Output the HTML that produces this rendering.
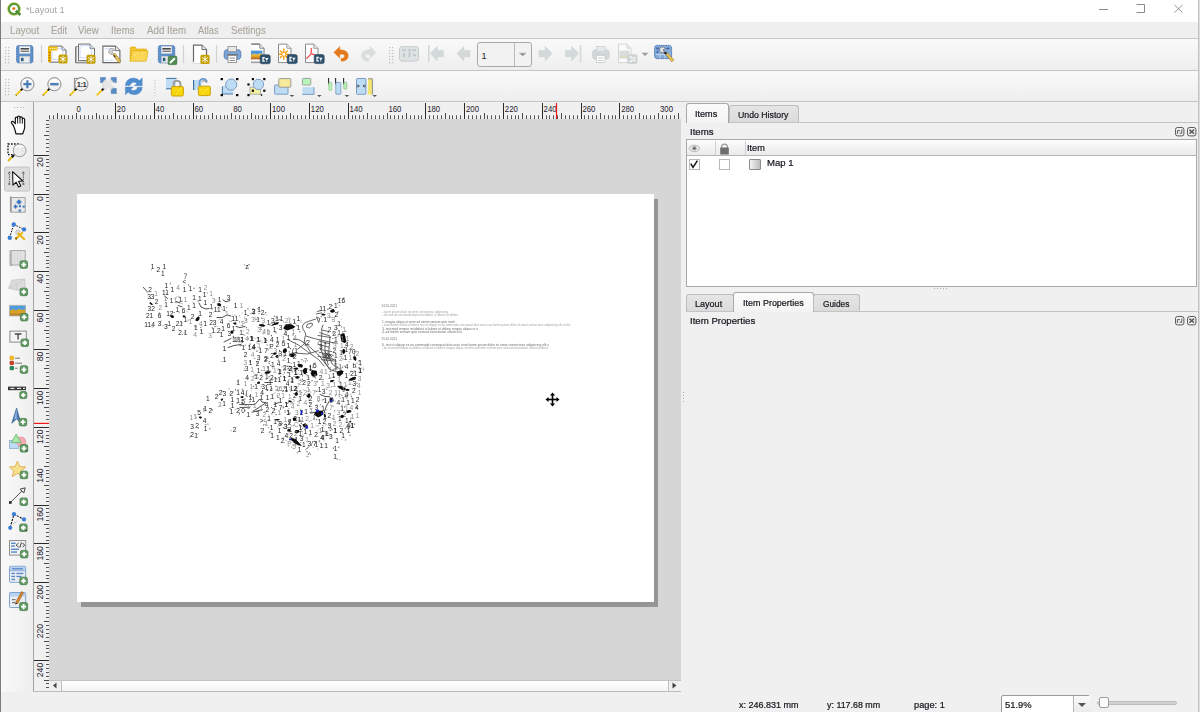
<!DOCTYPE html>
<html><head><meta charset="utf-8"><title>Layout 1</title>
<style>
*{box-sizing:border-box;margin:0;padding:0}
html,body{width:1200px;height:712px;overflow:hidden;background:#f0f0f0;font-family:"Liberation Sans",sans-serif;font-size:9px;color:#222}
.abs{position:absolute}
.t{position:absolute;white-space:nowrap;transform-origin:0 0;display:block;-webkit-text-stroke:0.22px currentColor}
#title{left:1px;top:0;width:1197px;height:22px;background:#fff}
#menu{left:1px;top:22px;width:1197px;height:16px;background:#efefef}
.tb{left:1px;width:1197px;background:linear-gradient(#f9f9f9,#f5f5f5 40%,#eeeeee);border-top:1px solid #c6c6c6}
#tb1{top:38px;height:32px}
#tb2{top:70px;height:32px;border-bottom:1px solid #c6c6c6}
#edgeL{left:0;top:0;width:1px;height:712px;background:#7c7c7c}
#edgeR{left:1198px;top:0;width:2px;height:712px;background:#dcdcdc;border-left:1px solid #c4c4c4}
#canvas{left:49px;top:119px;width:632px;height:561px;background:#d6d6d6;overflow:hidden}
#shadow{left:32px;top:80px;width:577px;height:408px;background:#959595}
#page{left:28px;top:75px;width:577px;height:408px;background:#fff}
#hruler{left:34px;top:102px;width:647px;height:17px;background:#f0f0f0}
#vruler{left:33px;top:102px;width:16px;height:590px;background:#f0f0f0;border-left:1px solid #a3a3a3}
.tab{position:absolute;border:1px solid #bdbdbd;border-bottom:none;border-radius:3px 3px 0 0}
.tab.off{background:linear-gradient(#e5e5e5,#dbdbdb)}
.tab.on{background:linear-gradient(#fbfbfb,#f3f3f3);border-color:#a9a9a9}
.hline{position:absolute;height:1px;background:#c3c3c3}
#tree{left:686px;top:139px;width:511px;height:148px;background:#fff;border:1px solid #a8a8a8}
#thead{left:0;top:0;width:509px;height:16px;background:linear-gradient(#fdfdfd,#f3f3f3 50%,#ebebeb);border-bottom:1px solid #b5b5b5}
.cb{position:absolute;width:11px;height:11px;border:1px solid #b8b8b8;background:#fff}
#ov{position:absolute;left:0;top:0}
</style></head><body>
<div id="title" class="abs"></div>
<span class="t" style="left:25.8px;top:5.5px;font-size:9px;line-height:9px;color:#a2a2a2;transform:scaleX(1.015);-webkit-text-stroke:0;">*Layout 1</span>
<div id="menu" class="abs"></div>
<span class="t" style="left:9.6px;top:25.1px;font-size:10.5px;line-height:10.5px;color:#a9a49c;transform:scaleX(0.923);-webkit-text-stroke:0.1px;">Layout</span>
<span class="t" style="left:50.7px;top:25.1px;font-size:10.5px;line-height:10.5px;color:#a9a49c;transform:scaleX(0.890);-webkit-text-stroke:0.1px;">Edit</span>
<span class="t" style="left:78.4px;top:25.1px;font-size:10.5px;line-height:10.5px;color:#a9a49c;transform:scaleX(0.913);-webkit-text-stroke:0.1px;">View</span>
<span class="t" style="left:110.5px;top:25.1px;font-size:10.5px;line-height:10.5px;color:#a9a49c;transform:scaleX(0.915);-webkit-text-stroke:0.1px;">Items</span>
<span class="t" style="left:146.7px;top:25.1px;font-size:10.5px;line-height:10.5px;color:#a9a49c;transform:scaleX(0.928);-webkit-text-stroke:0.1px;">Add Item</span>
<span class="t" style="left:198.3px;top:25.1px;font-size:10.5px;line-height:10.5px;color:#a9a49c;transform:scaleX(0.887);-webkit-text-stroke:0.1px;">Atlas</span>
<span class="t" style="left:231.0px;top:25.1px;font-size:10.5px;line-height:10.5px;color:#a9a49c;transform:scaleX(0.915);-webkit-text-stroke:0.1px;">Settings</span>
<div id="tb1" class="abs tb"></div><div id="tb2" class="abs tb"></div>
<div class="abs" style="left:1px;top:102px;width:32px;height:590px;background:linear-gradient(90deg,#f9f9f9,#f3f3f3 60%,#eeeeee)"></div>
<div id="hruler" class="abs"></div><div id="vruler" class="abs"></div>
<div id="canvas" class="abs"><div id="shadow" class="abs"></div><div id="page" class="abs"></div></div>
<div class="abs" style="left:49px;top:680px;width:632px;height:12px;background:#f0f0f0;border-top:1px solid #c8c8c8"></div><div class="abs" style="left:33px;top:691px;width:648px;height:1px;background:#bcbcbc"></div>
<div class="abs" style="left:61px;top:681px;width:608px;height:10px;background:linear-gradient(#ffffff,#f3f3f3);border-left:1px solid #c0c0c0;border-right:1px solid #c0c0c0"></div>
<div class="abs" style="left:49px;top:680px;width:632px;height:1px;background:#c4c4c4"></div>
<div class="hline" style="left:686px;top:122px;width:512px"></div>
<div class="tab on" style="left:686px;top:103px;width:43px;height:20px"></div>
<div class="tab off" style="left:729px;top:105px;width:70px;height:17px"></div>
<span class="t" style="left:695.3px;top:108.7px;font-size:9.7px;line-height:9.7px;color:#15151d;transform:scaleX(0.936);">Items</span>
<span class="t" style="left:737.5px;top:109.5px;font-size:9.7px;line-height:9.7px;color:#15151d;transform:scaleX(0.901);">Undo History</span>
<span class="t" style="left:689.5px;top:126.7px;font-size:9.7px;line-height:9.7px;color:#15151d;transform:scaleX(0.991);">Items</span>
<div id="tree" class="abs"><div id="thead" class="abs"><div class="abs" style="left:28px;top:1px;width:1px;height:14px;background:#d0d0d0"></div><div class="abs" style="left:58px;top:1px;width:1px;height:14px;background:#d0d0d0"></div></div><div class="cb" style="left:2px;top:19px"></div><div class="cb" style="left:32px;top:19px"></div><div class="abs" style="left:62px;top:19px;width:12px;height:11px;border:1px solid #8c8c8c;border-radius:1px;background:linear-gradient(90deg,#f4f4f4,#bdbdbd)"></div></div>
<span class="t" style="left:747.2px;top:142.9px;font-size:9.7px;line-height:9.7px;color:#15151d;transform:scaleX(0.944);">Item</span>
<span class="t" style="left:766.5px;top:157.7px;font-size:9.7px;line-height:9.7px;color:#15151d;transform:scaleX(0.983);">Map 1</span>
<div class="hline" style="left:686px;top:311px;width:512px"></div>
<div class="tab off" style="left:686px;top:294px;width:48px;height:17px"></div>
<div class="tab on" style="left:733px;top:292px;width:81px;height:20px"></div>
<div class="tab off" style="left:813px;top:294px;width:47px;height:17px"></div>
<span class="t" style="left:695.3px;top:298.6px;font-size:9.7px;line-height:9.7px;color:#15151d;transform:scaleX(0.934);">Layout</span>
<span class="t" style="left:742.5px;top:297.8px;font-size:9.7px;line-height:9.7px;color:#15151d;transform:scaleX(0.925);">Item Properties</span>
<span class="t" style="left:822.8px;top:298.6px;font-size:9.7px;line-height:9.7px;color:#15151d;transform:scaleX(0.859);">Guides</span>
<span class="t" style="left:689.7px;top:315.9px;font-size:9.7px;line-height:9.7px;color:#15151d;transform:scaleX(0.993);">Item Properties</span>
<div class="abs" style="left:934px;top:288px;width:14px;height:1px;background:repeating-linear-gradient(90deg,#aaa 0 1px,transparent 1px 3px)"></div>
<div class="abs" style="left:683px;top:392px;width:1px;height:12px;background:repeating-linear-gradient(#aaa 0 1px,transparent 1px 3px)"></div>
<span class="t" style="left:738.7px;top:699.9px;font-size:9.7px;line-height:9.7px;color:#15151d;transform:scaleX(0.929);">x: 246.831 mm</span>
<span class="t" style="left:826.8px;top:699.9px;font-size:9.7px;line-height:9.7px;color:#15151d;transform:scaleX(0.917);">y: 117.68 mm</span>
<span class="t" style="left:914.0px;top:699.9px;font-size:9.7px;line-height:9.7px;color:#15151d;transform:scaleX(0.952);">page: 1</span>
<div class="abs" style="left:1001px;top:695px;width:89px;height:20px;border:1px solid #9a9a9a;border-radius:2px;background:#fff"><div class="abs" style="left:71px;top:0;width:17px;height:18px;border-left:1px solid #b5b5b5;background:linear-gradient(#fafafa,#e9e9e9)"></div><div class="abs" style="left:76px;top:7px;width:0;height:0;border:4px solid transparent;border-top:4px solid #555;border-bottom:none"></div></div>
<span class="t" style="left:1004.8px;top:699.6px;font-size:9.7px;line-height:9.7px;color:#15151d;transform:scaleX(0.967);">51.9%</span>
<div class="abs" style="left:1097px;top:701px;width:80px;height:4px;background:#d2d2d2;border:1px solid #bdbdbd;border-radius:2px"></div>
<div class="abs" style="left:1099px;top:697px;width:10px;height:11px;background:#fbfbfb;border:1px solid #9c9c9c;border-radius:2px"></div>
<svg id="ov" width="1200" height="712" viewBox="0 0 1200 712" font-family="Liberation Sans, sans-serif">
<g fill="#bdbdbd"><rect x="5" y="47" width="1.2" height="1.2"/><rect x="8" y="47" width="1.2" height="1.2"/><rect x="5" y="50" width="1.2" height="1.2"/><rect x="8" y="50" width="1.2" height="1.2"/><rect x="5" y="53" width="1.2" height="1.2"/><rect x="8" y="53" width="1.2" height="1.2"/><rect x="5" y="56" width="1.2" height="1.2"/><rect x="8" y="56" width="1.2" height="1.2"/><rect x="5" y="59" width="1.2" height="1.2"/><rect x="8" y="59" width="1.2" height="1.2"/><rect x="5" y="62" width="1.2" height="1.2"/><rect x="8" y="62" width="1.2" height="1.2"/></g>
<g transform="translate(16,45)" ><rect x=".5" y=".5" width="16.5" height="17.5" rx="2" fill="#5d8fca" stroke="#3f6aa6" stroke-dasharray="1 .6" stroke-width=".8"/><rect x="3.6" y="1.4" width="10.4" height="7" fill="#f4f4f4" stroke="#d5d5d5" stroke-width=".5"/><rect x="4.6" y="3" width="8.4" height="1.6" fill="#4a4a4a"/><rect x="4.6" y="5.7" width="8.4" height="1.1" fill="#5a5a5a"/><rect x="3.8" y="11.3" width="10" height="6.4" fill="#ececec" stroke="#c8c8c8" stroke-width=".5"/><rect x="5" y="12.8" width="2.6" height="3.4" fill="#2e5f78"/></g>
<line x1="41.5" y1="45" x2="41.5" y2="63" stroke="#d2d2d2" stroke-width="1.2"/>
<g transform="translate(48,45.6)" ><g transform="translate(1,0)" ><path d="M.5 .5H13L17 4.5V16.5H.5Z" fill="#fff" stroke="#555" stroke-width="0.9"/><path d="M13 .5V4.5H17" fill="#e8e8e8" stroke="#555" stroke-width="0.7200000000000001"/></g><rect x="4" y="3" width="11" height="11" fill="none" stroke="#b9c8ff" stroke-width=".7"/><rect x="0" y="1" width="3.2" height="15.5" fill="#ecb800"/><rect x="0" y="1" width="9.5" height="3.8" rx=".6" fill="#ecb800"/><g fill="#fff6c8"><rect x="1.5" y="2.2" width="1.2" height="1.4"/><rect x="3.6" y="2.2" width="1.2" height="1.4"/><rect x="5.7" y="2.2" width="1.2" height="1.4"/><rect x="7.6" y="2.2" width="1" height="1.4"/></g><g fill="#a04a10"><rect x=".8" y="6.5" width="1.6" height=".9"/><rect x=".8" y="9.2" width="1.6" height=".9"/><rect x=".8" y="11.9" width="1.6" height=".9"/><rect x=".8" y="14.4" width="1.6" height=".9"/></g><g transform="translate(10.5,9)"><rect width="9" height="9" rx="1.6" fill="#c4a000"/><g stroke="#fff" stroke-width=".9" stroke-linecap="round"><line x1="4.5" y1="1.6" x2="4.5" y2="7.4"/><line x1="1.8" y1="2.8" x2="7.2" y2="6.2"/><line x1="1.8" y1="6.2" x2="7.2" y2="2.8"/></g></g></g>
<g transform="translate(75,43.6)" ><path d="M.6 3V19.2H13.5" fill="#fff" stroke="#6a6a6a" stroke-width="1"/><rect x="1.2" y="3" width="12" height="15.6" fill="#f2f2f2" stroke="#8a8a8a" stroke-width=".8"/><g transform="translate(3,0)" ><path d="M.5 .5H12.0L16.5 5.0V17H.5Z" fill="#fff" stroke="#606060" stroke-width="0.9"/><path d="M12.0 .5V5.0H16.5" fill="#e8e8e8" stroke="#606060" stroke-width="0.7200000000000001"/></g><rect x="5" y="2.2" width="11.5" height="12" fill="none" stroke="#b9c8ff" stroke-width=".7"/><g transform="translate(11.5,11.2)"><rect width="9" height="9" rx="1.6" fill="#c4a000"/><g stroke="#fff" stroke-width=".9" stroke-linecap="round"><line x1="4.5" y1="1.6" x2="4.5" y2="7.4"/><line x1="1.8" y1="2.8" x2="7.2" y2="6.2"/><line x1="1.8" y1="6.2" x2="7.2" y2="2.8"/></g></g></g>
<g transform="translate(102.4,45.6)" ><path d="M.5 .5H13.0L17.5 5.0V17H.5Z" fill="#fff" stroke="#666" stroke-width="1.1"/><path d="M13.0 .5V5.0H17.5" fill="#e8e8e8" stroke="#666" stroke-width="0.8800000000000001"/><line x1="2.5" y1="3" x2="11" y2="3" stroke="#b9c8ff" stroke-width=".8" stroke-dasharray="2 .6"/><line x1="2.5" y1="14.6" x2="11" y2="14.6" stroke="#b9c8ff" stroke-width=".8" stroke-dasharray="2 .6"/><path d="M7.2 3.6c2-1.6 4.6-.6 5 1.4l-2.2.2-.4 1.8 1.6 1.4c-1.8 1-4.6.2-5-2.2z" fill="#d9d9d9" stroke="#8a8a8a" stroke-width=".7"/><path d="M10.6 9.4L12.6 7.8L18.4 15.4L16.6 17.4Z" fill="#e8c45a" stroke="#9a7a1c" stroke-width=".7"/><path d="M11.4 9.8L13 11.6" stroke="#333" stroke-width="1.2"/></g>
<g transform="translate(129.6,46.4)" ><path d="M.6 14.6V1.6Q.6 .6 1.6 .6H5.6L6.8 2.6H16Q17 2.6 17 3.6V5" fill="#f3c62f" stroke="#d8a800" stroke-width=".9" stroke-dasharray="1.2 .5"/><path d="M.6 14.8L2.4 5.2Q2.6 4.4 3.4 4.4H17.6Q18.6 4.4 18.4 5.4L16.8 14Q16.6 14.8 15.8 14.8Z" fill="#fad654" stroke="#d8a800" stroke-width=".9" stroke-dasharray="1.2 .5"/><g fill="#fff8b0"><rect x="7.5" y="6.2" width="1" height="1"/><rect x="11.5" y="6.2" width="1" height="1"/><rect x="5.5" y="8" width="1" height="1"/><rect x="9" y="12" width="1" height="1"/><rect x="12.5" y="12" width="1" height="1"/></g></g>
<g transform="translate(157.8,45)" ><rect x=".5" y=".5" width="16.5" height="17.5" rx="2" fill="#5d8fca" stroke="#3f6aa6" stroke-dasharray="1 .6" stroke-width=".8"/><rect x="3.6" y="1.4" width="10.4" height="7" fill="#f4f4f4" stroke="#d5d5d5" stroke-width=".5"/><rect x="4.6" y="3" width="8.4" height="1.6" fill="#4a4a4a"/><rect x="4.6" y="5.7" width="8.4" height="1.1" fill="#5a5a5a"/><rect x="3.8" y="11.3" width="10" height="6.4" fill="#ececec" stroke="#c8c8c8" stroke-width=".5"/><rect x="5" y="12.8" width="2.6" height="3.4" fill="#2e5f78"/><g transform="translate(10.4,11.2)"><rect width="8.6" height="8.4" rx="1.2" fill="#4f8a52" stroke="#3a6e3e" stroke-width=".7"/><path d="M1.8 6.8L6.6 2" stroke="#fff" stroke-width="2"/></g></g>
<line x1="183.5" y1="45" x2="183.5" y2="63" stroke="#d2d2d2" stroke-width="1.2"/>
<g transform="translate(193,44.6)" ><path d="M.5 .5H9.0L13.5 5.0V18H.5Z" fill="#fff" stroke="#6a6a6a" stroke-width="1.2"/><path d="M9.0 .5V5.0H13.5" fill="#e8e8e8" stroke="#6a6a6a" stroke-width="0.96"/><rect x="0" y="17.2" width="8" height="1.6" fill="#f7f7f7"/><g transform="translate(7.4,10.2)"><rect width="9.2" height="9.2" rx="1.6" fill="#c4a000"/><g stroke="#fff" stroke-width=".9" stroke-linecap="round"><line x1="4.6" y1="1.6" x2="4.6" y2="7.6"/><line x1="1.8" y1="2.8" x2="7.3999999999999995" y2="6.3999999999999995"/><line x1="1.8" y1="6.3999999999999995" x2="7.3999999999999995" y2="2.8"/></g></g></g>
<line x1="216.5" y1="45" x2="216.5" y2="63" stroke="#d2d2d2" stroke-width="1.2"/>
<g transform="translate(223.6,45.6)" ><rect x=".6" y="4.2" width="16.6" height="9.4" rx="2.6" fill="#7ba6da" stroke="#3d5fa2" stroke-width=".9" stroke-dasharray="1.4 .4"/><rect x="4.4" y=".8" width="8.6" height="5" fill="#e9e9e9" stroke="#8e8e8e" stroke-width=".8"/><rect x="3.6" y="8.6" width="10.4" height="2.2" fill="#6a6a6a"/><rect x="4.4" y="10" width="8.6" height="7" fill="#fdfdfd" stroke="#8e8e8e" stroke-width=".9"/><rect x="6" y="12" width="5.4" height="1" fill="#8e8e8e"/><rect x="6" y="14.4" width="5.4" height="1" fill="#8e8e8e"/></g>
<g transform="translate(251,43.6)" ><path d="M.5 .5H8.8L13 4.7V19H.5Z" fill="#fff" stroke="#777" stroke-width="1"/><path d="M8.8 .5V4.7H13" fill="#e8e8e8" stroke="#777" stroke-width="0.8"/><rect x="0" y="18" width="9" height="1.6" fill="#f6f6f6"/><rect x="0" y="0" width="1.2" height="19" fill="#f6f6f6"/><path d="M0 .5H8.6M0 18.6H9" stroke="#777" stroke-width="1"/><rect x="0" y="7" width="11.4" height="8.6" fill="#4f97dd"/><rect x="0" y="11" width="11.4" height="4.6" fill="#d9a520"/><path d="M0 11.4L3 9.8L6 10.8L9 9.6L11.4 10.8V12H0Z" fill="#e8c050"/><rect x="0" y="13.8" width="11.4" height="1.8" fill="#c4562a" opacity=".7"/><g transform="translate(9.2,11.2)"><rect width="10" height="9" rx="1.8" fill="#2f536e" stroke="#1f3d55" stroke-width=".6"/><path d="M2.2 2.2H4.6V3.6H3.4V5.6H4.6V7H2.2Z" fill="#fff"/><path d="M5 3.2H8.4L6.9 5.4V7.2H6.3V5.4Z" fill="#fff"/></g></g>
<g transform="translate(278,43.6)" ><path d="M.5 .5H8.8L13 4.7V19H.5Z" fill="#fff" stroke="#8a8a8a" stroke-width="1"/><path d="M8.8 .5V4.7H13" fill="#e8e8e8" stroke="#8a8a8a" stroke-width="0.8"/><g stroke="#ff9a0a" stroke-width="1.4" stroke-linecap="round"><line x1="5.8" y1="5.4" x2="5.8" y2="15.6"/><line x1="1.2" y1="10.6" x2="10.4" y2="10.6"/><line x1="2.4" y1="7.4" x2="9.2" y2="13.8"/><line x1="2.4" y1="13.8" x2="9.2" y2="7.4"/></g><circle cx="5.8" cy="10.6" r="1.5" fill="#fff"/><g transform="translate(9.2,11)"><rect width="10" height="9" rx="1.8" fill="#2f536e" stroke="#1f3d55" stroke-width=".6"/><path d="M2.2 2.2H4.6V3.6H3.4V5.6H4.6V7H2.2Z" fill="#fff"/><path d="M5 3.2H8.4L6.9 5.4V7.2H6.3V5.4Z" fill="#fff"/></g></g>
<g transform="translate(305,43.6)" ><path d="M.5 .5H8.8L13 4.7V19H.5Z" fill="#fff" stroke="#8a8a8a" stroke-width="1"/><path d="M8.8 .5V4.7H13" fill="#e8e8e8" stroke="#8a8a8a" stroke-width="0.8"/><path d="M6.2 4.6V10.2L1.8 14.8M6.2 10.2L10.6 11.6" fill="none" stroke="#f03030" stroke-width="1.1" stroke-linecap="round"/><circle cx="6.2" cy="10.2" r=".9" fill="#fff" stroke="#f03030" stroke-width=".6"/><g transform="translate(9.2,11)"><rect width="10" height="9" rx="1.8" fill="#2f536e" stroke="#1f3d55" stroke-width=".6"/><path d="M2.2 2.2H4.6V3.6H3.4V5.6H4.6V7H2.2Z" fill="#fff"/><path d="M5 3.2H8.4L6.9 5.4V7.2H6.3V5.4Z" fill="#fff"/></g></g>
<g transform="translate(333.4,45.8)" ><path d="M.4 6.6L6.4 .6V4C11.8 3.6 15.6 6.6 14.8 11C14.2 14 10.8 16.2 7.6 15.2V12.6C10.4 13 11.4 11.4 11 9.8C10.4 8.2 8.4 8.4 6.4 8.8V12.4Z" fill="#e27a1c" stroke="#e27a1c" stroke-width=".5" stroke-dasharray="1 .45"/></g>
<g transform="translate(361.4,45.8)" ><g transform="translate(15,0) scale(-1,1)"><path d="M.4 6.6L6.4 .6V4C11.8 3.6 15.6 6.6 14.8 11C14.2 14 10.8 16.2 7.6 15.2V12.6C10.4 13 11.4 11.4 11 9.8C10.4 8.2 8.4 8.4 6.4 8.8V12.4Z" fill="#d9dddd" stroke="#d9dddd" stroke-width=".5"/></g></g>
<g fill="#bdbdbd"><rect x="389" y="47" width="1.2" height="1.2"/><rect x="392" y="47" width="1.2" height="1.2"/><rect x="389" y="50" width="1.2" height="1.2"/><rect x="392" y="50" width="1.2" height="1.2"/><rect x="389" y="53" width="1.2" height="1.2"/><rect x="392" y="53" width="1.2" height="1.2"/><rect x="389" y="56" width="1.2" height="1.2"/><rect x="392" y="56" width="1.2" height="1.2"/><rect x="389" y="59" width="1.2" height="1.2"/><rect x="392" y="59" width="1.2" height="1.2"/><rect x="389" y="62" width="1.2" height="1.2"/><rect x="392" y="62" width="1.2" height="1.2"/></g>
<g transform="translate(399,46.2)" ><rect x=".5" y=".5" width="19" height="14.4" rx="2.6" fill="#dfe3e3" stroke="#c6cccc" stroke-width="1"/><g fill="#c3caca"><rect x="3" y="3" width="4" height="2"/><rect x="9" y="3" width="3" height="2"/><rect x="13" y="3" width="4" height="2"/><rect x="4" y="7" width="2" height="4"/><rect x="9.5" y="6" width="2" height="5"/><rect x="14" y="8" width="3" height="2"/></g></g>
<g transform="translate(430,45.6)" ><path d="M.4 8L7.2 .8V4.8H13.4V11.2H7.2V15.2Z" fill="#d3d9d9" stroke="#c9d0d0" stroke-width=".5"/></g><rect x="428" y="45" width="1.6" height="17.4" fill="#d3d9d9"/>
<g transform="translate(456.6,45.6)" ><path d="M.4 8L7.2 .8V4.8H13.4V11.2H7.2V15.2Z" fill="#d3d9d9" stroke="#c9d0d0" stroke-width=".5"/></g>
<g transform="translate(477,42)" ><rect x=".5" y=".5" width="54" height="24" rx="2.6" fill="#f2f2f2" stroke="#a9a9a9" stroke-width="1"/><line x1="37.5" y1="1" x2="37.5" y2="24" stroke="#b9b9b9"/><path d="M42.6 11.4H48.8L45.7 14Z" fill="#8a8a8a"/><rect x="42.4" y="10.8" width="6.6" height=".9" fill="#a0a0a0"/></g>
<g transform="translate(552.4,45.6) scale(-1,1)"><path d="M.4 8L7.2 .8V4.8H13.4V11.2H7.2V15.2Z" fill="#d3d9d9" stroke="#c9d0d0" stroke-width=".5"/></g>
<g transform="translate(579,45.6) scale(-1,1)"><path d="M.4 8L7.2 .8V4.8H13.4V11.2H7.2V15.2Z" fill="#d3d9d9" stroke="#c9d0d0" stroke-width=".5"/></g><rect x="579.8" y="45" width="1.6" height="17.4" fill="#d3d9d9"/>
<g transform="translate(592,45.6)" ><rect x=".6" y="4.2" width="16.6" height="9.4" rx="2.6" fill="#d3d9d9" stroke="#c6cccc" stroke-width=".9" stroke-dasharray="1.4 .4"/><rect x="4.4" y=".8" width="8.6" height="5" fill="#e6e9e9" stroke="#cdd2d2" stroke-width=".8"/><rect x="3.6" y="8.6" width="10.4" height="2.2" fill="#c9cfcf"/><rect x="4.4" y="10" width="8.6" height="7" fill="#fdfdfd" stroke="#cdd2d2" stroke-width=".9"/><rect x="6" y="12" width="5.4" height="1" fill="#cdd2d2"/><rect x="6" y="14.4" width="5.4" height="1" fill="#cdd2d2"/></g>
<g transform="translate(618,43.6)" ><path d="M.5 .5H8.8L13 4.7V19H.5Z" fill="#fafafa" stroke="#d3d6d6" stroke-width="1"/><path d="M8.8 .5V4.7H13" fill="#e8e8e8" stroke="#d3d6d6" stroke-width="0.8"/><rect x="1.4" y="7" width="10" height="8" fill="#d9dcdc"/><rect x="3" y="12.4" width="6" height="1" fill="#e6d9b0"/><rect x="9.6" y="11.2" width="9.4" height="8.6" rx="1.6" fill="#d0d4d4" stroke="#c0c6c6" stroke-width=".6"/><path d="M11.4 13.2H13.4V14.4H17V13.2M11.4 17.8H13.4V16.6H17V17.8" fill="none" stroke="#fff" stroke-width="1"/></g>
<path d="M641.6 52.8H648.4L645 56Z" fill="#9a9a9a"/>
<g transform="translate(654,44.8)" ><rect x=".6" y=".6" width="17" height="13.2" rx="2.4" fill="#86abd8" stroke="#3f6cae" stroke-width=".9" stroke-dasharray="1.4 .4"/><g fill="#3d63a0"><rect x="2.4" y="2.6" width="2.4" height="2"/><rect x="2.6" y="6" width="1.6" height="2.4"/><rect x="12.4" y="2.8" width="3" height="1.6"/></g><g stroke="#dbe7f5" stroke-width=".7"><line x1="1.6" y1="9.6" x2="16.6" y2="9.6"/><line x1="6" y1="9.6" x2="6" y2="13.4"/><line x1="11" y1="9.6" x2="11" y2="13.4"/></g><path d="M6 3.4c1.6-2 4.6-1.2 5.4.6l-2 .6-.2 1.6 1.8 1c-1.4 1.2-4.4 1-5.2-1z" fill="#e9e9e9" stroke="#555" stroke-width=".6"/><path d="M9.8 8.2L11.6 6.6L13.2 8.4L11.6 10Z" fill="#222"/><path d="M12 9.8L13.6 8.4L19.8 15L17.8 17Z" fill="#eac65a" stroke="#9a7a1c" stroke-width=".7"/></g>
<text x="481.6" y="59.2" font-size="9" fill="#222">1</text>
<g fill="#bdbdbd"><rect x="5" y="79" width="1.2" height="1.2"/><rect x="8" y="79" width="1.2" height="1.2"/><rect x="5" y="82" width="1.2" height="1.2"/><rect x="8" y="82" width="1.2" height="1.2"/><rect x="5" y="85" width="1.2" height="1.2"/><rect x="8" y="85" width="1.2" height="1.2"/><rect x="5" y="88" width="1.2" height="1.2"/><rect x="8" y="88" width="1.2" height="1.2"/><rect x="5" y="91" width="1.2" height="1.2"/><rect x="8" y="91" width="1.2" height="1.2"/><rect x="5" y="94" width="1.2" height="1.2"/><rect x="8" y="94" width="1.2" height="1.2"/></g>
<g transform="translate(15,77)" ><path d="M.8 18.4L6.8 12.4" stroke="#f2c40e" stroke-width="1.8" stroke-linecap="butt"/><path d="M.4 17.6L1.8 19" stroke="#333" stroke-width=".6"/><path d="M5.8 13.4L7.6 11.6" stroke="#111" stroke-width="2"/><circle cx="12.4" cy="7.2" r="6.6" fill="#f0f0f0" stroke="#8c8c8c" stroke-width="1"/><path d="M7 5.4A6 6 0 0 1 17.8 5.4Q12.4 3.4 7 5.4Z" fill="#fff" opacity=".9"/><path d="M8.4 7.2H16.4M12.4 3.2V11.2" stroke="#4c7fb8" stroke-width="2.2"/></g>
<g transform="translate(42,77)" ><path d="M.8 18.4L6.8 12.4" stroke="#f2c40e" stroke-width="1.8" stroke-linecap="butt"/><path d="M.4 17.6L1.8 19" stroke="#333" stroke-width=".6"/><path d="M5.8 13.4L7.6 11.6" stroke="#111" stroke-width="2"/><circle cx="12.4" cy="7.2" r="6.6" fill="#f0f0f0" stroke="#8c8c8c" stroke-width="1"/><path d="M7 5.4A6 6 0 0 1 17.8 5.4Q12.4 3.4 7 5.4Z" fill="#fff" opacity=".9"/><path d="M8.2 7.2H16.6" stroke="#4c7fb8" stroke-width="2.4"/></g>
<g transform="translate(69,77)" ><rect x="5.4" y="1.4" width="9" height="11" fill="#f4f4f4" stroke="#8a8a8a" stroke-width="1"/><path d="M.8 18.4L6.8 12.4" stroke="#f2c40e" stroke-width="1.8" stroke-linecap="butt"/><path d="M.4 17.6L1.8 19" stroke="#333" stroke-width=".6"/><path d="M5.8 13.4L7.6 11.6" stroke="#111" stroke-width="2"/><circle cx="12.4" cy="7.2" r="6.6" fill="#f0f0f0" stroke="#8c8c8c" stroke-width="1"/><path d="M7 5.4A6 6 0 0 1 17.8 5.4Q12.4 3.4 7 5.4Z" fill="#fff" opacity=".9"/><text x="12.4" y="10.2" font-size="7.6" font-weight="bold" text-anchor="middle" fill="#333" letter-spacing="-.5">1:1</text></g>
<g transform="translate(96,77)" ><g fill="#5a8cc6" stroke="#41689c" stroke-width=".5" stroke-dasharray="1 .4"><rect x="4.4" y=".4" width="5.2" height="5.2"/><rect x="15.2" y=".4" width="5.2" height="5.2"/><rect x="15.2" y="11.4" width="5.2" height="5.2"/></g><path d="M.8 18.4L6.8 12.4" stroke="#f2c40e" stroke-width="1.8"/><path d="M5.8 13.4L7.6 11.6" stroke="#111" stroke-width="2"/><circle cx="12.2" cy="7.6" r="5.6" fill="#e6e6e6" stroke="#cfcfcf" stroke-width=".8"/><path d="M9.6 1.2L12.2 4.6 14.8 1.2ZM18.6 5L15.2 7.6 18.6 10.2ZM14.8 14L12.2 10.6 9.6 14Z" fill="#f4f4f4"/></g>
<g transform="translate(124.8,77.2)" ><g fill="#4f8dd0" stroke="#3f78b8" stroke-width=".5" stroke-dasharray="1 .5"><path d="M.6 8.4C.8 3.4 5 .4 9.6 1C11.8 1.2 13.4 2.2 14.6 3.4L17.4 .8V8.6H9.6L12 6.2C10 4.4 6.4 4.6 5.2 8.4Z"/><path d="M17.4 10C17.2 15 13 18 8.4 17.4C6.2 17.2 4.6 16.2 3.4 15L.6 17.6V9.8H8.4L6 12.2C8 14 11.6 13.8 12.8 10Z"/></g></g>
<g fill="#c8c8c8"><rect x="154.2" y="80" width="1.2" height="1.2"/><rect x="154.2" y="83" width="1.2" height="1.2"/><rect x="154.2" y="86" width="1.2" height="1.2"/><rect x="154.2" y="89" width="1.2" height="1.2"/><rect x="154.2" y="92" width="1.2" height="1.2"/><rect x="154.2" y="95" width="1.2" height="1.2"/></g>
<g transform="translate(166,77.4)" ><rect x="0" y="1" width="10" height="10.4" fill="#bfdcf5"/><path d="M0 1H10.6M0 11.4H6" stroke="#3f6f9f" stroke-width="1"/><path d="M7.6 10V6.4C7.6 2.4 14.4 2.4 14.4 6.4V10" fill="none" stroke="#9d9d9d" stroke-width="2"/><rect x="5.4" y="9.2" width="12" height="9.4" rx="1.4" fill="#f6d50a" stroke="#c99b00" stroke-width=".9"/><g fill="#fff27a"><rect x="8" y="12" width="1" height="1"/><rect x="12" y="13" width="1" height="1"/><rect x="10" y="15.6" width="1" height="1"/><rect x="14" y="11.2" width="1" height="1"/></g></g>
<g transform="translate(193,77)" ><rect x=".6" y="3" width="8" height="10" fill="#bfdcf5"/><path d="M.6 3V13" stroke="#3f6f9f" stroke-width="1.2"/><path d="M6.6 9.8V5C6.6 .8 13.6 .8 13.8 5.4" fill="none" stroke="#6b9bd0" stroke-width="1.8"/><path d="M9 4.6L11.4 3.4 13.6 5.6" fill="none" stroke="#9d9d9d" stroke-width="1.2"/><rect x="5.4" y="9.2" width="12" height="9.4" rx="1.4" fill="#f6d50a" stroke="#c99b00" stroke-width=".9"/><g fill="#fff27a"><rect x="8" y="12" width="1" height="1"/><rect x="12" y="13" width="1" height="1"/><rect x="10" y="15.6" width="1" height="1"/><rect x="14" y="11.2" width="1" height="1"/></g></g>
<g transform="translate(220.6,78.6)" ><path d="M1.8 15.4V8.4H7" fill="#bfdcf5" stroke="#6f93bb" stroke-width=".9"/><rect x="1.8" y="8" width="11" height="7.4" fill="#bfdcf5"/><path d="M1.8 8V15.4H12.4" fill="none" stroke="#4d7aa8" stroke-width="1"/><polygon points="16.0,8.2 12.8,11.4 8.4,11.4 5.2,8.2 5.2,3.8 8.4,0.6 12.8,0.6 16.0,3.8" fill="#bfdcf5" stroke="#6f93bb" stroke-width=".9"/><g fill="#0a0a0a"><rect x="0" y="-.6" width="2.4" height="2.2"/><rect x="15.4" y="-.6" width="2.4" height="2.2"/><rect x="0" y="15.4" width="2.4" height="2.2"/><rect x="15.4" y="15.4" width="2.4" height="2.2"/></g></g>
<g transform="translate(247.4,78.6)" ><rect x="2.6" y="8.6" width="10.6" height="7" fill="#f4ef9c" stroke="#a8a8a8" stroke-width=".9"/><polygon points="16.0,7.9 13.1,10.8 8.9,10.8 6.0,7.9 6.0,3.7 8.9,0.8 13.1,0.8 16.0,3.7" fill="#bfdcf5" stroke="#6f93bb" stroke-width=".9"/><g fill="#0a0a0a"><rect x="4.4" y="-.6" width="2.2" height="2.2"/><rect x="15.8" y="-.6" width="2.2" height="2.2"/><rect x="0" y="4.8" width="2.2" height="2.2"/><rect x="4.4" y="11" width="2.2" height="2.2"/><rect x="15.8" y="11" width="2.2" height="2.2"/><rect x="0" y="15.4" width="2.2" height="2.2"/><rect x="13.4" y="15.6" width="1.4" height="1.6"/></g></g>
<g transform="translate(274,78)" ><rect x=".6" y="7" width="13.4" height="9.2" rx=".8" fill="#bfdcf5" stroke="#6f93bb" stroke-width=".9"/><rect x="4.8" y=".6" width="12" height="8.6" rx=".8" fill="#f5e896" stroke="#9a9a9a" stroke-width="1"/><g fill="#fff8c8"><rect x="8" y="3" width="1" height="1"/><rect x="12" y="5" width="1" height="1"/><rect x="10" y="6.6" width="1" height="1"/></g><path d="M15.6 17H20.2L17.9 19Z" fill="#555"/></g>
<g transform="translate(302,78)" ><rect x=".4" y=".4" width="8.4" height="6.6" rx=".8" fill="#b8f3b8" stroke="#9a9a9a" stroke-width=".9"/><rect x=".4" y="9.2" width="11.6" height="7.2" fill="#bfdcf5"/><path d="M.4 16.4H12V9.2" fill="none" stroke="#6f93bb" stroke-width=".9"/><path d="M15 17H19.6L17.3 19Z" fill="#555"/></g>
<g transform="translate(328,78)" ><g stroke="#2a2a2a" stroke-width="1.1"><line x1=".6" y1="0" x2=".6" y2="6.4"/><line x1="7.6" y1="0" x2="7.6" y2="6.4"/><line x1="15.6" y1="0" x2="15.6" y2="6.4"/></g><rect x=".8" y="4.4" width="3" height="8" rx=".6" fill="#b8f3b8" stroke="#8fc98f" stroke-width=".7"/><rect x="7.8" y="4.4" width="5" height="11.8" rx=".6" fill="#bfdcf5" stroke="#6f93bb" stroke-width=".8"/><rect x="15.8" y="4.4" width="3" height="6.6" rx=".6" fill="#b8f3b8" stroke="#7fb07f" stroke-width=".7"/><path d="M16.6 17H21.200000000000003L18.900000000000002 19Z" fill="#555"/></g>
<g transform="translate(356,78)" ><rect x=".5" y=".5" width="9.4" height="15.8" rx=".8" fill="#bfdcf5" stroke="#6f93bb" stroke-width=".9"/><rect x="12" y=".8" width="4.2" height="15.8" fill="#f3e574"/><path d="M12 .8H16.4V16.6" fill="none" stroke="#8c8c8c" stroke-width="1"/><path d="M.4 8H3.2M1.8 6.6L3.2 8 1.8 9.4M10 8H7.2M8.6 6.6L7.2 8 8.6 9.4" fill="none" stroke="#333" stroke-width=".8"/><path d="M16.4 17H21.0L18.7 19Z" fill="#555"/></g>
<g transform="translate(4,166.6)" ><rect x=".5" y=".5" width="25" height="24" rx="1.6" fill="#dddddd" stroke="#c4c4c4" stroke-width="1"/><path d="M5.4 5.2V18.6M19.4 5.2V18.6M4 6.4H6.8M18 6.4H20.8M4 17.4H6.8M18 17.4H20.8" stroke="#444" stroke-width=".9" stroke-dasharray="1.4 .9"/><path d="M8.6 5L9 18.6L12.2 15.6L14.6 20.4L16.8 19.4L14.6 14.8L18.8 14.4Z" fill="#fff" stroke="#111" stroke-width="1.1" stroke-linejoin="round"/></g>
<g transform="translate(9.6,115.6) scale(1.06,1.04)"><path d="M3.6 9.6L2 7.4C1 6 2.6 4.8 3.8 6L5.4 7.8V2.6C5.4 1 7.6 1 7.6 2.6V1.6C7.6 0 9.8 0 9.8 1.6V2.4C9.8 .8 12 .8 12 2.4V3.6C12 2.2 14.2 2.2 14.2 3.8V11C14.2 14 13 15 12.4 17.6H6C5.6 15 4.8 12.6 3.6 9.6Z" fill="#fff" stroke="#111" stroke-width="1.1" stroke-linejoin="round"/><path d="M7.6 2.6V7.6M9.8 2.4V7.6M12 3.6V7.8" stroke="#111" stroke-width=".9"/></g>
<g transform="translate(7,142.6)" ><rect x="1" y="1.4" width="12" height="10.6" fill="none" stroke="#111" stroke-width="1.3" stroke-dasharray="1.6 1.4"/><path d="M1 18.4L5.4 14" stroke="#e8b40e" stroke-width="1.8"/><path d="M4.8 14.6L7 12.4" stroke="#111" stroke-width="2"/><circle cx="12.6" cy="7.8" r="6.4" fill="#ececec" stroke="#9a9a9a" stroke-width="1"/><path d="M7.4 5.6A5.8 5.8 0 0 1 17.8 5.6Q12.6 3.6 7.4 5.6Z" fill="#fff" opacity=".85"/><g fill="#c8c8c8"><rect x="15" y="5" width="1" height="1"/><rect x="15" y="8" width="1" height="1"/><rect x="15" y="11" width="1" height="1"/></g></g>
<g transform="translate(9,196.6)" ><path d="M2 0V15.6" stroke="#9a9a9a" stroke-width="2.2"/><rect x="2.2" y="1" width="14" height="14.6" fill="#e9e9e9" stroke="#9a9a9a" stroke-width=".9"/><g fill="#3f77bd"><path d="M10 2.6L13.4 5.8H11.4V7.6H8.6V5.8H6.6Z"/><path d="M4.4 10L7 7.4V9H8.6V11H7V12.6Z"/><rect x="10" y="8.6" width="2" height="2"/><rect x="13.6" y="9" width="2.2" height="2"/><rect x="9.6" y="13" width="2.4" height="2"/></g></g>
<g transform="translate(7.4,221.6)" ><path d="M2.2 16L6.4 2.8L16.4 7.8" fill="none" stroke="#111" stroke-width="1" stroke-dasharray="1.6 1.2"/><g fill="#3a7bd5"><circle cx="2.4" cy="16.2" r="2.2"/><circle cx="6.4" cy="2.8" r="2.2"/><circle cx="16.6" cy="7.8" r="2.2"/></g><path d="M8.6 9.4c1.2-1.6 3.6-1 4.2.4l-1.6.6v1.4l1.4.8c-1.2 1-3.4.8-4-.8z" fill="#e6e6e6" stroke="#999" stroke-width=".6"/><path d="M8.2 17.4L15.4 10.6M10.6 11.4L17.4 18.2" stroke="#eab30c" stroke-width="2"/><path d="M8 17.6L9.4 16.2" stroke="#8a6a00" stroke-width="2"/></g>
<g transform="translate(8.6,249.4)" ><path d="M1.4 .6V15.4C1.4 16.6 3.8 16.6 3.8 15.4" fill="#d8d8d8" stroke="#9a9a9a" stroke-width=".9"/><rect x="2.6" y="1.2" width="14" height="14.4" fill="#e2e2e2" stroke="#a0a0a0" stroke-width=".9"/><g stroke="#d0d0d0" stroke-width=".8"><line x1="6" y1="2" x2="6" y2="15"/><line x1="9" y1="2" x2="9" y2="15"/><line x1="12" y1="2" x2="12" y2="15"/></g><g transform="translate(11.4,11.4)"><rect width="7.5" height="7.5" rx="1.6" fill="#649a66" stroke="#467f4a" stroke-width=".8"/><path d="M2.85 1.4H4.65V2.85H6.1V4.65H4.65V6.1H2.85V4.65H1.4V2.85H2.85Z" fill="#fff"/></g></g>
<g transform="translate(8,277.6)" ><path d="M.6 10.6L4 2.6L16.6 1.4L17.4 10.8L9 12.6Z" fill="#dcdcdc" stroke="#c4c4c4" stroke-width=".8"/><path d="M4 2.6L9 7L16.6 1.4M9 7V12.6M9 7L.6 10.6" fill="none" stroke="#c9c9c9" stroke-width=".7"/><g transform="translate(12,10.6)"><rect width="7.5" height="7.5" rx="1.6" fill="#649a66" stroke="#467f4a" stroke-width=".8"/><path d="M2.85 1.4H4.65V2.85H6.1V4.65H4.65V6.1H2.85V4.65H1.4V2.85H2.85Z" fill="#fff"/></g></g>
<g transform="translate(9,304.8)" ><rect x=".5" y=".5" width="16" height="10.6" fill="#4f9be0" stroke="#b0b0b0" stroke-width=".8"/><path d="M.9 6L4 4.2L7 5.6L10 4L13 5.2L16.1 4.4V10.7H.9Z" fill="#d8a428"/><path d="M.9 8.4H16.1V10.7H.9Z" fill="#b8702a" opacity=".6"/><g transform="translate(11.4,8.6)"><rect width="7.5" height="7.5" rx="1.6" fill="#649a66" stroke="#467f4a" stroke-width=".8"/><path d="M2.85 1.4H4.65V2.85H6.1V4.65H4.65V6.1H2.85V4.65H1.4V2.85H2.85Z" fill="#fff"/></g></g>
<g transform="translate(9.4,330.6)" ><rect x=".5" y=".5" width="16.4" height="11" fill="#f4f4f4" stroke="#8a8a8a" stroke-width="1"/><path d="M5.4 3.4H12M8.7 3.4V9" stroke="#444" stroke-width="1.3"/><g transform="translate(11.6,8.4)"><rect width="7.5" height="7.5" rx="1.6" fill="#649a66" stroke="#467f4a" stroke-width=".8"/><path d="M2.85 1.4H4.65V2.85H6.1V4.65H4.65V6.1H2.85V4.65H1.4V2.85H2.85Z" fill="#fff"/></g></g>
<g transform="translate(9,355.6)" ><rect x="1" y=".6" width="3.6" height="3.4" rx=".8" fill="#ffc21c" stroke="#e09a00" stroke-width=".7"/><rect x="1" y="5.6" width="3.6" height="3.4" rx=".4" fill="#d63a1a" stroke="#a82a10" stroke-width=".7"/><rect x="1" y="10.8" width="3.6" height="3.4" rx=".4" fill="#1f8a5a" stroke="#146a44" stroke-width=".7"/><g fill="#9a9a9a"><rect x="6" y="2" width="5" height="1.4"/><rect x="6" y="7" width="7" height="1.4"/><rect x="6" y="12" width="2.6" height="1.4"/></g><g transform="translate(11.2,10.2)"><rect width="7.5" height="7.5" rx="1.6" fill="#649a66" stroke="#467f4a" stroke-width=".8"/><path d="M2.85 1.4H4.65V2.85H6.1V4.65H4.65V6.1H2.85V4.65H1.4V2.85H2.85Z" fill="#fff"/></g></g>
<g transform="translate(8,386.2)" ><rect x="0" y=".4" width="18" height="3.6" fill="#3a3a3a"/><g fill="#e8e8e8"><rect x="2.4" y="1.6" width="4" height="1.2"/><rect x="9" y="1.6" width="4" height="1.2"/><rect x="15" y="1.6" width="2" height="1.2"/></g><g transform="translate(11.8,5.4)"><rect width="7" height="7" rx="1.6" fill="#649a66" stroke="#467f4a" stroke-width=".8"/><path d="M2.6 1.4H4.4V2.6H5.6V4.4H4.4V5.6H2.6V4.4H1.4V2.6H2.6Z" fill="#fff"/></g></g>
<g transform="translate(11,407.6)" ><path d="M5.6 .4L.8 15.6L5.6 11.2L9.8 15.6Z" fill="#4a7ab8" stroke="#35598a" stroke-width=".7"/><path d="M5.6 .4L3.4 11.4 5.6 11.2Z" fill="#9cbbe0"/><g transform="translate(8.2,10.8)"><rect width="7.5" height="7.5" rx="1.6" fill="#649a66" stroke="#467f4a" stroke-width=".8"/><path d="M2.85 1.4H4.65V2.85H6.1V4.65H4.65V6.1H2.85V4.65H1.4V2.85H2.85Z" fill="#fff"/></g></g>
<g transform="translate(9,433.6)" ><rect x=".6" y="7" width="9" height="7.8" fill="#bfdcf5" stroke="#7fa6cc" stroke-width=".7"/><circle cx="12.2" cy="8" r="4.6" fill="#f5a9b0" stroke="#d98a92" stroke-width=".6"/><path d="M7.2 .6L12.2 9H2.2Z" fill="#a8e8a8" stroke="#6ab06a" stroke-width=".8"/><g transform="translate(11.2,11)"><rect width="7.5" height="7.5" rx="1.6" fill="#649a66" stroke="#467f4a" stroke-width=".8"/><path d="M2.85 1.4H4.65V2.85H6.1V4.65H4.65V6.1H2.85V4.65H1.4V2.85H2.85Z" fill="#fff"/></g><path d="M16.4 17H19L17.7 18.2Z" fill="#333"/></g>
<g transform="translate(9,460.6)" ><path d="M8.4 .6L10.8 6L16.8 6.4L12.2 10.2L13.8 16L8.4 12.8L3.2 16L4.8 10.2L.4 6.4L6.2 6Z" fill="#f5e08c" stroke="#e2b05a" stroke-width="1" stroke-linejoin="round"/><g transform="translate(11.2,10.6)"><rect width="7.5" height="7.5" rx="1.6" fill="#649a66" stroke="#467f4a" stroke-width=".8"/><path d="M2.85 1.4H4.65V2.85H6.1V4.65H4.65V6.1H2.85V4.65H1.4V2.85H2.85Z" fill="#fff"/></g></g>
<g transform="translate(8.4,487)" ><path d="M2 15.4L14.6 3" stroke="#555" stroke-width="1"/><path d="M16.8 .8L15.4 6L11.6 2.2Z" fill="#eee" stroke="#333" stroke-width=".9"/><rect x=".6" y="14.2" width="2.6" height="2.6" fill="#222"/><g transform="translate(11.6,11)"><rect width="7.5" height="7.5" rx="1.6" fill="#649a66" stroke="#467f4a" stroke-width=".8"/><path d="M2.85 1.4H4.65V2.85H6.1V4.65H4.65V6.1H2.85V4.65H1.4V2.85H2.85Z" fill="#fff"/></g></g>
<g transform="translate(7.6,511.6)" ><path d="M2.6 16L6.4 2.6L16.4 7.8" fill="none" stroke="#111" stroke-width="1.1" stroke-dasharray="2.2 1.2"/><path d="M6 12L10 9.6" stroke="#888" stroke-width=".8" stroke-dasharray="1 1"/><g fill="#3a7bd5"><circle cx="2.6" cy="16.2" r="2.1"/><circle cx="6.4" cy="2.6" r="2.1"/><circle cx="16.4" cy="7.8" r="2.1"/></g><g transform="translate(12,12.4)"><rect width="7.5" height="7.5" rx="1.6" fill="#649a66" stroke="#467f4a" stroke-width=".8"/><path d="M2.85 1.4H4.65V2.85H6.1V4.65H4.65V6.1H2.85V4.65H1.4V2.85H2.85Z" fill="#fff"/></g><path d="M17.6 18.4H20L18.8 19.6Z" fill="#333"/></g>
<g transform="translate(9,540)" ><rect x=".5" y=".5" width="16.2" height="14.6" fill="#f2f2f2" stroke="#8f8f8f" stroke-width="1"/><g fill="#4c7fc0"><rect x="2" y="2.6" width="4.6" height="1.3"/><rect x="2" y="5.4" width="4" height="1.3"/><rect x="2" y="8.6" width="8" height="1.3"/><rect x="2" y="11.4" width="6" height="1.3"/></g><path d="M9.6 3L7.2 5.2L9.6 7.2M10.8 7.6L12.4 2.4M13.6 3L15.6 5.2L13.6 7.2" fill="none" stroke="#222" stroke-width=".9"/><g transform="translate(11.4,10.4)"><rect width="7.5" height="7.5" rx="1.6" fill="#649a66" stroke="#467f4a" stroke-width=".8"/><path d="M2.85 1.4H4.65V2.85H6.1V4.65H4.65V6.1H2.85V4.65H1.4V2.85H2.85Z" fill="#fff"/></g></g>
<g transform="translate(9,565.8)" ><rect x=".5" y=".5" width="16.2" height="16" rx=".8" fill="#e9edf3" stroke="#7fa3d0" stroke-width="1"/><rect x="1" y="1" width="15.2" height="4" fill="#b9d2ee"/><line x1="3" y1="3" x2="14" y2="3" stroke="#5585c4" stroke-width="1.2"/><line x1=".5" y1="5" x2="16.7" y2="5" stroke="#7fa3d0" stroke-width=".8"/><g fill="#5585c4"><rect x="2.4" y="7" width="3.6" height="1.3"/><rect x="7.4" y="7" width="7" height="1.3"/><rect x="2.4" y="10" width="3.6" height="1.3"/><rect x="7.4" y="10" width="5" height="1.3"/><rect x="2.4" y="13" width="3.6" height="1.3"/></g><g transform="translate(10.8,11.4)"><rect width="7.5" height="7.5" rx="1.6" fill="#649a66" stroke="#467f4a" stroke-width=".8"/><path d="M2.85 1.4H4.65V2.85H6.1V4.65H4.65V6.1H2.85V4.65H1.4V2.85H2.85Z" fill="#fff"/></g></g>
<g transform="translate(9,591)" ><rect x=".5" y="1.5" width="16.2" height="15" rx=".8" fill="#e9edf3" stroke="#7fa3d0" stroke-width="1"/><rect x="1" y="2" width="15.2" height="3.6" fill="#b9d2ee"/><g fill="#7a7a7a"><rect x="3" y="8" width="3.6" height="1.2"/><rect x="3" y="11" width="3" height="1.2"/></g><path d="M6.6 11.4L12.6 .6L14.4 1.8L8.8 12.4Z" fill="#d88a30" stroke="#9a5a14" stroke-width=".6"/><path d="M6.6 11.4L6 13.4L8.8 12.4Z" fill="#333"/><g transform="translate(10.6,11.6)"><rect width="8" height="8" rx="1.6" fill="#649a66" stroke="#467f4a" stroke-width=".8"/><path d="M3.1 1.4H4.9V3.1H6.6V4.9H4.9V6.6H3.1V4.9H1.4V3.1H3.1Z" fill="#fff"/></g></g>
<g transform="translate(1175,127)" fill="none" stroke="#5a5a5a" stroke-width="1"><rect x=".5" y=".5" width="8.4" height="8.4" rx="2"/><path d="M2.4 7V3.6H5M4.6 6.2H6.8V2.4"/></g><g transform="translate(1187,127)" fill="none" stroke="#5a5a5a" stroke-width="1"><rect x=".5" y=".5" width="8.4" height="8.4" rx="2"/><path d="M2.4 2.6L7 6.8M7 2.6L2.4 6.8" stroke-width="1.5"/></g>
<g transform="translate(1175,316)" fill="none" stroke="#5a5a5a" stroke-width="1"><rect x=".5" y=".5" width="8.4" height="8.4" rx="2"/><path d="M2.4 7V3.6H5M4.6 6.2H6.8V2.4"/></g><g transform="translate(1187,316)" fill="none" stroke="#5a5a5a" stroke-width="1"><rect x=".5" y=".5" width="8.4" height="8.4" rx="2"/><path d="M2.4 2.6L7 6.8M7 2.6L2.4 6.8" stroke-width="1.5"/></g>
<g stroke="#8a8a8a" stroke-width="1" fill="none"><line x1="1099" y1="9.5" x2="1108" y2="9.5"/><path d="M1136.5 4.5H1144.5V12.5H1136.5"/><path d="M1174.5 5L1182.5 12.5M1182.5 5L1174.5 12.5" stroke-width=".9"/></g>
<g transform="translate(7,2)"><circle cx="7" cy="7" r="5.2" fill="#fff" stroke="#5d9b3a" stroke-width="2.5"/><circle cx="7" cy="7" r="6.6" fill="none" stroke="#e8c42a" stroke-width=".9" stroke-dasharray="1 1.6"/><path d="M8.8 8.8L13.4 13" stroke="#4e8c34" stroke-width="2.6"/><circle cx="6.8" cy="6.6" r="1.6" fill="#f2a02a"/><circle cx="6.8" cy="6.4" r=".8" fill="#e8482a"/></g>
<g transform="translate(688,142)"><ellipse cx="6.4" cy="6.4" rx="5.4" ry="3.2" fill="#e4e4e4" stroke="#b0b0b0" stroke-width=".8"/><circle cx="6.4" cy="6.2" r="2" fill="#8a8a8a"/><circle cx="6.4" cy="6.2" r=".8" fill="#555"/></g>
<g transform="translate(720,143)"><path d="M1.6 5V3.4C1.6 .4 7.4 .4 7.4 3.4V5" fill="none" stroke="#9a9a9a" stroke-width="1.3"/><rect x=".2" y="4.6" width="8.6" height="7" rx=".6" fill="#6e6e6e"/></g>
<path d="M690.8 163.6L693 167.4L697.4 160.6" fill="none" stroke="#111" stroke-width="1.5"/>
<g stroke="#2a2a2a" stroke-width="1" shape-rendering="auto">
<line x1="49.5" y1="115.3" x2="49.5" y2="119" stroke-opacity=".8"/>
<line x1="53.5" y1="115.3" x2="53.5" y2="119" stroke-opacity=".8"/>
<line x1="57.5" y1="113" x2="57.5" y2="119" stroke-opacity=".85"/>
<line x1="61.5" y1="115.3" x2="61.5" y2="119" stroke-opacity=".8"/>
<line x1="64.5" y1="115.3" x2="64.5" y2="119" stroke-opacity=".8"/>
<line x1="68.5" y1="115.3" x2="68.5" y2="119" stroke-opacity=".8"/>
<line x1="72.5" y1="115.3" x2="72.5" y2="119" stroke-opacity=".8"/>
<line x1="76.5" y1="113" x2="76.5" y2="119" stroke-opacity=".85"/>
<line x1="80.5" y1="115.3" x2="80.5" y2="119" stroke-opacity=".8"/>
<line x1="84.5" y1="115.3" x2="84.5" y2="119" stroke-opacity=".8"/>
<line x1="88.5" y1="115.3" x2="88.5" y2="119" stroke-opacity=".8"/>
<line x1="92.5" y1="115.3" x2="92.5" y2="119" stroke-opacity=".8"/>
<line x1="96.5" y1="113" x2="96.5" y2="119" stroke-opacity=".85"/>
<line x1="99.5" y1="115.3" x2="99.5" y2="119" stroke-opacity=".8"/>
<line x1="103.5" y1="115.3" x2="103.5" y2="119" stroke-opacity=".8"/>
<line x1="107.5" y1="115.3" x2="107.5" y2="119" stroke-opacity=".8"/>
<line x1="111.5" y1="115.3" x2="111.5" y2="119" stroke-opacity=".8"/>
<line x1="115.5" y1="103" x2="115.5" y2="119"/>
<line x1="119.5" y1="115.3" x2="119.5" y2="119" stroke-opacity=".8"/>
<line x1="123.5" y1="115.3" x2="123.5" y2="119" stroke-opacity=".8"/>
<line x1="127.5" y1="115.3" x2="127.5" y2="119" stroke-opacity=".8"/>
<line x1="130.5" y1="115.3" x2="130.5" y2="119" stroke-opacity=".8"/>
<line x1="134.5" y1="113" x2="134.5" y2="119" stroke-opacity=".85"/>
<line x1="138.5" y1="115.3" x2="138.5" y2="119" stroke-opacity=".8"/>
<line x1="142.5" y1="115.3" x2="142.5" y2="119" stroke-opacity=".8"/>
<line x1="146.5" y1="115.3" x2="146.5" y2="119" stroke-opacity=".8"/>
<line x1="150.5" y1="115.3" x2="150.5" y2="119" stroke-opacity=".8"/>
<line x1="154.5" y1="103" x2="154.5" y2="119"/>
<line x1="158.5" y1="115.3" x2="158.5" y2="119" stroke-opacity=".8"/>
<line x1="161.5" y1="115.3" x2="161.5" y2="119" stroke-opacity=".8"/>
<line x1="165.5" y1="115.3" x2="165.5" y2="119" stroke-opacity=".8"/>
<line x1="169.5" y1="115.3" x2="169.5" y2="119" stroke-opacity=".8"/>
<line x1="173.5" y1="113" x2="173.5" y2="119" stroke-opacity=".85"/>
<line x1="177.5" y1="115.3" x2="177.5" y2="119" stroke-opacity=".8"/>
<line x1="181.5" y1="115.3" x2="181.5" y2="119" stroke-opacity=".8"/>
<line x1="185.5" y1="115.3" x2="185.5" y2="119" stroke-opacity=".8"/>
<line x1="189.5" y1="115.3" x2="189.5" y2="119" stroke-opacity=".8"/>
<line x1="193.5" y1="103" x2="193.5" y2="119"/>
<line x1="196.5" y1="115.3" x2="196.5" y2="119" stroke-opacity=".8"/>
<line x1="200.5" y1="115.3" x2="200.5" y2="119" stroke-opacity=".8"/>
<line x1="204.5" y1="115.3" x2="204.5" y2="119" stroke-opacity=".8"/>
<line x1="208.5" y1="115.3" x2="208.5" y2="119" stroke-opacity=".8"/>
<line x1="212.5" y1="113" x2="212.5" y2="119" stroke-opacity=".85"/>
<line x1="216.5" y1="115.3" x2="216.5" y2="119" stroke-opacity=".8"/>
<line x1="220.5" y1="115.3" x2="220.5" y2="119" stroke-opacity=".8"/>
<line x1="224.5" y1="115.3" x2="224.5" y2="119" stroke-opacity=".8"/>
<line x1="227.5" y1="115.3" x2="227.5" y2="119" stroke-opacity=".8"/>
<line x1="231.5" y1="113" x2="231.5" y2="119" stroke-opacity=".85"/>
<line x1="235.5" y1="115.3" x2="235.5" y2="119" stroke-opacity=".8"/>
<line x1="239.5" y1="115.3" x2="239.5" y2="119" stroke-opacity=".8"/>
<line x1="243.5" y1="115.3" x2="243.5" y2="119" stroke-opacity=".8"/>
<line x1="247.5" y1="115.3" x2="247.5" y2="119" stroke-opacity=".8"/>
<line x1="251.5" y1="113" x2="251.5" y2="119" stroke-opacity=".85"/>
<line x1="255.5" y1="115.3" x2="255.5" y2="119" stroke-opacity=".8"/>
<line x1="258.5" y1="115.3" x2="258.5" y2="119" stroke-opacity=".8"/>
<line x1="262.5" y1="115.3" x2="262.5" y2="119" stroke-opacity=".8"/>
<line x1="266.5" y1="115.3" x2="266.5" y2="119" stroke-opacity=".8"/>
<line x1="270.5" y1="103" x2="270.5" y2="119"/>
<line x1="274.5" y1="115.3" x2="274.5" y2="119" stroke-opacity=".8"/>
<line x1="278.5" y1="115.3" x2="278.5" y2="119" stroke-opacity=".8"/>
<line x1="282.5" y1="115.3" x2="282.5" y2="119" stroke-opacity=".8"/>
<line x1="286.5" y1="115.3" x2="286.5" y2="119" stroke-opacity=".8"/>
<line x1="290.5" y1="113" x2="290.5" y2="119" stroke-opacity=".85"/>
<line x1="293.5" y1="115.3" x2="293.5" y2="119" stroke-opacity=".8"/>
<line x1="297.5" y1="115.3" x2="297.5" y2="119" stroke-opacity=".8"/>
<line x1="301.5" y1="115.3" x2="301.5" y2="119" stroke-opacity=".8"/>
<line x1="305.5" y1="115.3" x2="305.5" y2="119" stroke-opacity=".8"/>
<line x1="309.5" y1="103" x2="309.5" y2="119"/>
<line x1="313.5" y1="115.3" x2="313.5" y2="119" stroke-opacity=".8"/>
<line x1="317.5" y1="115.3" x2="317.5" y2="119" stroke-opacity=".8"/>
<line x1="321.5" y1="115.3" x2="321.5" y2="119" stroke-opacity=".8"/>
<line x1="324.5" y1="115.3" x2="324.5" y2="119" stroke-opacity=".8"/>
<line x1="328.5" y1="113" x2="328.5" y2="119" stroke-opacity=".85"/>
<line x1="332.5" y1="115.3" x2="332.5" y2="119" stroke-opacity=".8"/>
<line x1="336.5" y1="115.3" x2="336.5" y2="119" stroke-opacity=".8"/>
<line x1="340.5" y1="115.3" x2="340.5" y2="119" stroke-opacity=".8"/>
<line x1="344.5" y1="115.3" x2="344.5" y2="119" stroke-opacity=".8"/>
<line x1="348.5" y1="103" x2="348.5" y2="119"/>
<line x1="352.5" y1="115.3" x2="352.5" y2="119" stroke-opacity=".8"/>
<line x1="355.5" y1="115.3" x2="355.5" y2="119" stroke-opacity=".8"/>
<line x1="359.5" y1="115.3" x2="359.5" y2="119" stroke-opacity=".8"/>
<line x1="363.5" y1="115.3" x2="363.5" y2="119" stroke-opacity=".8"/>
<line x1="367.5" y1="113" x2="367.5" y2="119" stroke-opacity=".85"/>
<line x1="371.5" y1="115.3" x2="371.5" y2="119" stroke-opacity=".8"/>
<line x1="375.5" y1="115.3" x2="375.5" y2="119" stroke-opacity=".8"/>
<line x1="379.5" y1="115.3" x2="379.5" y2="119" stroke-opacity=".8"/>
<line x1="383.5" y1="115.3" x2="383.5" y2="119" stroke-opacity=".8"/>
<line x1="387.5" y1="113" x2="387.5" y2="119" stroke-opacity=".85"/>
<line x1="390.5" y1="115.3" x2="390.5" y2="119" stroke-opacity=".8"/>
<line x1="394.5" y1="115.3" x2="394.5" y2="119" stroke-opacity=".8"/>
<line x1="398.5" y1="115.3" x2="398.5" y2="119" stroke-opacity=".8"/>
<line x1="402.5" y1="115.3" x2="402.5" y2="119" stroke-opacity=".8"/>
<line x1="406.5" y1="113" x2="406.5" y2="119" stroke-opacity=".85"/>
<line x1="410.5" y1="115.3" x2="410.5" y2="119" stroke-opacity=".8"/>
<line x1="414.5" y1="115.3" x2="414.5" y2="119" stroke-opacity=".8"/>
<line x1="418.5" y1="115.3" x2="418.5" y2="119" stroke-opacity=".8"/>
<line x1="421.5" y1="115.3" x2="421.5" y2="119" stroke-opacity=".8"/>
<line x1="425.5" y1="103" x2="425.5" y2="119"/>
<line x1="429.5" y1="115.3" x2="429.5" y2="119" stroke-opacity=".8"/>
<line x1="433.5" y1="115.3" x2="433.5" y2="119" stroke-opacity=".8"/>
<line x1="437.5" y1="115.3" x2="437.5" y2="119" stroke-opacity=".8"/>
<line x1="441.5" y1="115.3" x2="441.5" y2="119" stroke-opacity=".8"/>
<line x1="445.5" y1="113" x2="445.5" y2="119" stroke-opacity=".85"/>
<line x1="449.5" y1="115.3" x2="449.5" y2="119" stroke-opacity=".8"/>
<line x1="452.5" y1="115.3" x2="452.5" y2="119" stroke-opacity=".8"/>
<line x1="456.5" y1="115.3" x2="456.5" y2="119" stroke-opacity=".8"/>
<line x1="460.5" y1="115.3" x2="460.5" y2="119" stroke-opacity=".8"/>
<line x1="464.5" y1="103" x2="464.5" y2="119"/>
<line x1="468.5" y1="115.3" x2="468.5" y2="119" stroke-opacity=".8"/>
<line x1="472.5" y1="115.3" x2="472.5" y2="119" stroke-opacity=".8"/>
<line x1="476.5" y1="115.3" x2="476.5" y2="119" stroke-opacity=".8"/>
<line x1="480.5" y1="115.3" x2="480.5" y2="119" stroke-opacity=".8"/>
<line x1="484.5" y1="113" x2="484.5" y2="119" stroke-opacity=".85"/>
<line x1="487.5" y1="115.3" x2="487.5" y2="119" stroke-opacity=".8"/>
<line x1="491.5" y1="115.3" x2="491.5" y2="119" stroke-opacity=".8"/>
<line x1="495.5" y1="115.3" x2="495.5" y2="119" stroke-opacity=".8"/>
<line x1="499.5" y1="115.3" x2="499.5" y2="119" stroke-opacity=".8"/>
<line x1="503.5" y1="103" x2="503.5" y2="119"/>
<line x1="507.5" y1="115.3" x2="507.5" y2="119" stroke-opacity=".8"/>
<line x1="511.5" y1="115.3" x2="511.5" y2="119" stroke-opacity=".8"/>
<line x1="515.5" y1="115.3" x2="515.5" y2="119" stroke-opacity=".8"/>
<line x1="518.5" y1="115.3" x2="518.5" y2="119" stroke-opacity=".8"/>
<line x1="522.5" y1="113" x2="522.5" y2="119" stroke-opacity=".85"/>
<line x1="526.5" y1="115.3" x2="526.5" y2="119" stroke-opacity=".8"/>
<line x1="530.5" y1="115.3" x2="530.5" y2="119" stroke-opacity=".8"/>
<line x1="534.5" y1="115.3" x2="534.5" y2="119" stroke-opacity=".8"/>
<line x1="538.5" y1="115.3" x2="538.5" y2="119" stroke-opacity=".8"/>
<line x1="542.5" y1="103" x2="542.5" y2="119"/>
<line x1="546.5" y1="115.3" x2="546.5" y2="119" stroke-opacity=".8"/>
<line x1="549.5" y1="115.3" x2="549.5" y2="119" stroke-opacity=".8"/>
<line x1="553.5" y1="115.3" x2="553.5" y2="119" stroke-opacity=".8"/>
<line x1="557.5" y1="115.3" x2="557.5" y2="119" stroke-opacity=".8"/>
<line x1="561.5" y1="113" x2="561.5" y2="119" stroke-opacity=".85"/>
<line x1="565.5" y1="115.3" x2="565.5" y2="119" stroke-opacity=".8"/>
<line x1="569.5" y1="115.3" x2="569.5" y2="119" stroke-opacity=".8"/>
<line x1="573.5" y1="115.3" x2="573.5" y2="119" stroke-opacity=".8"/>
<line x1="577.5" y1="115.3" x2="577.5" y2="119" stroke-opacity=".8"/>
<line x1="581.5" y1="103" x2="581.5" y2="119"/>
<line x1="584.5" y1="115.3" x2="584.5" y2="119" stroke-opacity=".8"/>
<line x1="588.5" y1="115.3" x2="588.5" y2="119" stroke-opacity=".8"/>
<line x1="592.5" y1="115.3" x2="592.5" y2="119" stroke-opacity=".8"/>
<line x1="596.5" y1="115.3" x2="596.5" y2="119" stroke-opacity=".8"/>
<line x1="600.5" y1="113" x2="600.5" y2="119" stroke-opacity=".85"/>
<line x1="604.5" y1="115.3" x2="604.5" y2="119" stroke-opacity=".8"/>
<line x1="608.5" y1="115.3" x2="608.5" y2="119" stroke-opacity=".8"/>
<line x1="612.5" y1="115.3" x2="612.5" y2="119" stroke-opacity=".8"/>
<line x1="615.5" y1="115.3" x2="615.5" y2="119" stroke-opacity=".8"/>
<line x1="619.5" y1="103" x2="619.5" y2="119"/>
<line x1="623.5" y1="115.3" x2="623.5" y2="119" stroke-opacity=".8"/>
<line x1="627.5" y1="115.3" x2="627.5" y2="119" stroke-opacity=".8"/>
<line x1="631.5" y1="115.3" x2="631.5" y2="119" stroke-opacity=".8"/>
<line x1="635.5" y1="115.3" x2="635.5" y2="119" stroke-opacity=".8"/>
<line x1="639.5" y1="113" x2="639.5" y2="119" stroke-opacity=".85"/>
<line x1="643.5" y1="115.3" x2="643.5" y2="119" stroke-opacity=".8"/>
<line x1="646.5" y1="115.3" x2="646.5" y2="119" stroke-opacity=".8"/>
<line x1="650.5" y1="115.3" x2="650.5" y2="119" stroke-opacity=".8"/>
<line x1="654.5" y1="115.3" x2="654.5" y2="119" stroke-opacity=".8"/>
<line x1="658.5" y1="113" x2="658.5" y2="119" stroke-opacity=".85"/>
<line x1="662.5" y1="115.3" x2="662.5" y2="119" stroke-opacity=".8"/>
<line x1="666.5" y1="115.3" x2="666.5" y2="119" stroke-opacity=".8"/>
<line x1="670.5" y1="115.3" x2="670.5" y2="119" stroke-opacity=".8"/>
<line x1="674.5" y1="115.3" x2="674.5" y2="119" stroke-opacity=".8"/>
<line x1="678.5" y1="113" x2="678.5" y2="119" stroke-opacity=".85"/>
<line x1="46" y1="120.5" x2="49" y2="120.5" stroke-opacity=".8"/>
<line x1="46" y1="124.5" x2="49" y2="124.5" stroke-opacity=".8"/>
<line x1="46" y1="127.5" x2="49" y2="127.5" stroke-opacity=".8"/>
<line x1="46" y1="131.5" x2="49" y2="131.5" stroke-opacity=".8"/>
<line x1="44" y1="135.5" x2="49" y2="135.5" stroke-opacity=".85"/>
<line x1="46" y1="139.5" x2="49" y2="139.5" stroke-opacity=".8"/>
<line x1="46" y1="143.5" x2="49" y2="143.5" stroke-opacity=".8"/>
<line x1="46" y1="147.5" x2="49" y2="147.5" stroke-opacity=".8"/>
<line x1="46" y1="151.5" x2="49" y2="151.5" stroke-opacity=".8"/>
<line x1="34" y1="155.5" x2="49" y2="155.5"/>
<line x1="46" y1="159.5" x2="49" y2="159.5" stroke-opacity=".8"/>
<line x1="46" y1="162.5" x2="49" y2="162.5" stroke-opacity=".8"/>
<line x1="46" y1="166.5" x2="49" y2="166.5" stroke-opacity=".8"/>
<line x1="46" y1="170.5" x2="49" y2="170.5" stroke-opacity=".8"/>
<line x1="44" y1="174.5" x2="49" y2="174.5" stroke-opacity=".85"/>
<line x1="46" y1="178.5" x2="49" y2="178.5" stroke-opacity=".8"/>
<line x1="46" y1="182.5" x2="49" y2="182.5" stroke-opacity=".8"/>
<line x1="46" y1="186.5" x2="49" y2="186.5" stroke-opacity=".8"/>
<line x1="46" y1="190.5" x2="49" y2="190.5" stroke-opacity=".8"/>
<line x1="34" y1="194.5" x2="49" y2="194.5"/>
<line x1="46" y1="197.5" x2="49" y2="197.5" stroke-opacity=".8"/>
<line x1="46" y1="201.5" x2="49" y2="201.5" stroke-opacity=".8"/>
<line x1="46" y1="205.5" x2="49" y2="205.5" stroke-opacity=".8"/>
<line x1="46" y1="209.5" x2="49" y2="209.5" stroke-opacity=".8"/>
<line x1="44" y1="213.5" x2="49" y2="213.5" stroke-opacity=".85"/>
<line x1="46" y1="217.5" x2="49" y2="217.5" stroke-opacity=".8"/>
<line x1="46" y1="221.5" x2="49" y2="221.5" stroke-opacity=".8"/>
<line x1="46" y1="225.5" x2="49" y2="225.5" stroke-opacity=".8"/>
<line x1="46" y1="228.5" x2="49" y2="228.5" stroke-opacity=".8"/>
<line x1="34" y1="232.5" x2="49" y2="232.5"/>
<line x1="46" y1="236.5" x2="49" y2="236.5" stroke-opacity=".8"/>
<line x1="46" y1="240.5" x2="49" y2="240.5" stroke-opacity=".8"/>
<line x1="46" y1="244.5" x2="49" y2="244.5" stroke-opacity=".8"/>
<line x1="46" y1="248.5" x2="49" y2="248.5" stroke-opacity=".8"/>
<line x1="44" y1="252.5" x2="49" y2="252.5" stroke-opacity=".85"/>
<line x1="46" y1="256.5" x2="49" y2="256.5" stroke-opacity=".8"/>
<line x1="46" y1="260.5" x2="49" y2="260.5" stroke-opacity=".8"/>
<line x1="46" y1="263.5" x2="49" y2="263.5" stroke-opacity=".8"/>
<line x1="46" y1="267.5" x2="49" y2="267.5" stroke-opacity=".8"/>
<line x1="34" y1="271.5" x2="49" y2="271.5"/>
<line x1="46" y1="275.5" x2="49" y2="275.5" stroke-opacity=".8"/>
<line x1="46" y1="279.5" x2="49" y2="279.5" stroke-opacity=".8"/>
<line x1="46" y1="283.5" x2="49" y2="283.5" stroke-opacity=".8"/>
<line x1="46" y1="287.5" x2="49" y2="287.5" stroke-opacity=".8"/>
<line x1="44" y1="291.5" x2="49" y2="291.5" stroke-opacity=".85"/>
<line x1="46" y1="295.5" x2="49" y2="295.5" stroke-opacity=".8"/>
<line x1="46" y1="298.5" x2="49" y2="298.5" stroke-opacity=".8"/>
<line x1="46" y1="302.5" x2="49" y2="302.5" stroke-opacity=".8"/>
<line x1="46" y1="306.5" x2="49" y2="306.5" stroke-opacity=".8"/>
<line x1="34" y1="310.5" x2="49" y2="310.5"/>
<line x1="46" y1="314.5" x2="49" y2="314.5" stroke-opacity=".8"/>
<line x1="46" y1="318.5" x2="49" y2="318.5" stroke-opacity=".8"/>
<line x1="46" y1="322.5" x2="49" y2="322.5" stroke-opacity=".8"/>
<line x1="46" y1="326.5" x2="49" y2="326.5" stroke-opacity=".8"/>
<line x1="44" y1="330.5" x2="49" y2="330.5" stroke-opacity=".85"/>
<line x1="46" y1="333.5" x2="49" y2="333.5" stroke-opacity=".8"/>
<line x1="46" y1="337.5" x2="49" y2="337.5" stroke-opacity=".8"/>
<line x1="46" y1="341.5" x2="49" y2="341.5" stroke-opacity=".8"/>
<line x1="46" y1="345.5" x2="49" y2="345.5" stroke-opacity=".8"/>
<line x1="34" y1="349.5" x2="49" y2="349.5"/>
<line x1="46" y1="353.5" x2="49" y2="353.5" stroke-opacity=".8"/>
<line x1="46" y1="357.5" x2="49" y2="357.5" stroke-opacity=".8"/>
<line x1="46" y1="361.5" x2="49" y2="361.5" stroke-opacity=".8"/>
<line x1="46" y1="365.5" x2="49" y2="365.5" stroke-opacity=".8"/>
<line x1="44" y1="368.5" x2="49" y2="368.5" stroke-opacity=".85"/>
<line x1="46" y1="372.5" x2="49" y2="372.5" stroke-opacity=".8"/>
<line x1="46" y1="376.5" x2="49" y2="376.5" stroke-opacity=".8"/>
<line x1="46" y1="380.5" x2="49" y2="380.5" stroke-opacity=".8"/>
<line x1="46" y1="384.5" x2="49" y2="384.5" stroke-opacity=".8"/>
<line x1="34" y1="388.5" x2="49" y2="388.5"/>
<line x1="46" y1="392.5" x2="49" y2="392.5" stroke-opacity=".8"/>
<line x1="46" y1="396.5" x2="49" y2="396.5" stroke-opacity=".8"/>
<line x1="46" y1="400.5" x2="49" y2="400.5" stroke-opacity=".8"/>
<line x1="46" y1="403.5" x2="49" y2="403.5" stroke-opacity=".8"/>
<line x1="44" y1="407.5" x2="49" y2="407.5" stroke-opacity=".85"/>
<line x1="46" y1="411.5" x2="49" y2="411.5" stroke-opacity=".8"/>
<line x1="46" y1="415.5" x2="49" y2="415.5" stroke-opacity=".8"/>
<line x1="46" y1="419.5" x2="49" y2="419.5" stroke-opacity=".8"/>
<line x1="46" y1="423.5" x2="49" y2="423.5" stroke-opacity=".8"/>
<line x1="34" y1="427.5" x2="49" y2="427.5"/>
<line x1="46" y1="431.5" x2="49" y2="431.5" stroke-opacity=".8"/>
<line x1="46" y1="435.5" x2="49" y2="435.5" stroke-opacity=".8"/>
<line x1="46" y1="438.5" x2="49" y2="438.5" stroke-opacity=".8"/>
<line x1="46" y1="442.5" x2="49" y2="442.5" stroke-opacity=".8"/>
<line x1="44" y1="446.5" x2="49" y2="446.5" stroke-opacity=".85"/>
<line x1="46" y1="450.5" x2="49" y2="450.5" stroke-opacity=".8"/>
<line x1="46" y1="454.5" x2="49" y2="454.5" stroke-opacity=".8"/>
<line x1="46" y1="458.5" x2="49" y2="458.5" stroke-opacity=".8"/>
<line x1="46" y1="462.5" x2="49" y2="462.5" stroke-opacity=".8"/>
<line x1="44" y1="466.5" x2="49" y2="466.5" stroke-opacity=".85"/>
<line x1="46" y1="470.5" x2="49" y2="470.5" stroke-opacity=".8"/>
<line x1="46" y1="473.5" x2="49" y2="473.5" stroke-opacity=".8"/>
<line x1="46" y1="477.5" x2="49" y2="477.5" stroke-opacity=".8"/>
<line x1="46" y1="481.5" x2="49" y2="481.5" stroke-opacity=".8"/>
<line x1="44" y1="485.5" x2="49" y2="485.5" stroke-opacity=".85"/>
<line x1="46" y1="489.5" x2="49" y2="489.5" stroke-opacity=".8"/>
<line x1="46" y1="493.5" x2="49" y2="493.5" stroke-opacity=".8"/>
<line x1="46" y1="497.5" x2="49" y2="497.5" stroke-opacity=".8"/>
<line x1="46" y1="501.5" x2="49" y2="501.5" stroke-opacity=".8"/>
<line x1="34" y1="505.5" x2="49" y2="505.5"/>
<line x1="46" y1="508.5" x2="49" y2="508.5" stroke-opacity=".8"/>
<line x1="46" y1="512.5" x2="49" y2="512.5" stroke-opacity=".8"/>
<line x1="46" y1="516.5" x2="49" y2="516.5" stroke-opacity=".8"/>
<line x1="46" y1="520.5" x2="49" y2="520.5" stroke-opacity=".8"/>
<line x1="44" y1="524.5" x2="49" y2="524.5" stroke-opacity=".85"/>
<line x1="46" y1="528.5" x2="49" y2="528.5" stroke-opacity=".8"/>
<line x1="46" y1="532.5" x2="49" y2="532.5" stroke-opacity=".8"/>
<line x1="46" y1="536.5" x2="49" y2="536.5" stroke-opacity=".8"/>
<line x1="46" y1="540.5" x2="49" y2="540.5" stroke-opacity=".8"/>
<line x1="34" y1="543.5" x2="49" y2="543.5"/>
<line x1="46" y1="547.5" x2="49" y2="547.5" stroke-opacity=".8"/>
<line x1="46" y1="551.5" x2="49" y2="551.5" stroke-opacity=".8"/>
<line x1="46" y1="555.5" x2="49" y2="555.5" stroke-opacity=".8"/>
<line x1="46" y1="559.5" x2="49" y2="559.5" stroke-opacity=".8"/>
<line x1="44" y1="563.5" x2="49" y2="563.5" stroke-opacity=".85"/>
<line x1="46" y1="567.5" x2="49" y2="567.5" stroke-opacity=".8"/>
<line x1="46" y1="571.5" x2="49" y2="571.5" stroke-opacity=".8"/>
<line x1="46" y1="575.5" x2="49" y2="575.5" stroke-opacity=".8"/>
<line x1="46" y1="578.5" x2="49" y2="578.5" stroke-opacity=".8"/>
<line x1="34" y1="582.5" x2="49" y2="582.5"/>
<line x1="46" y1="586.5" x2="49" y2="586.5" stroke-opacity=".8"/>
<line x1="46" y1="590.5" x2="49" y2="590.5" stroke-opacity=".8"/>
<line x1="46" y1="594.5" x2="49" y2="594.5" stroke-opacity=".8"/>
<line x1="46" y1="598.5" x2="49" y2="598.5" stroke-opacity=".8"/>
<line x1="44" y1="602.5" x2="49" y2="602.5" stroke-opacity=".85"/>
<line x1="46" y1="606.5" x2="49" y2="606.5" stroke-opacity=".8"/>
<line x1="46" y1="610.5" x2="49" y2="610.5" stroke-opacity=".8"/>
<line x1="46" y1="613.5" x2="49" y2="613.5" stroke-opacity=".8"/>
<line x1="46" y1="617.5" x2="49" y2="617.5" stroke-opacity=".8"/>
<line x1="44" y1="621.5" x2="49" y2="621.5" stroke-opacity=".85"/>
<line x1="46" y1="625.5" x2="49" y2="625.5" stroke-opacity=".8"/>
<line x1="46" y1="629.5" x2="49" y2="629.5" stroke-opacity=".8"/>
<line x1="46" y1="633.5" x2="49" y2="633.5" stroke-opacity=".8"/>
<line x1="46" y1="637.5" x2="49" y2="637.5" stroke-opacity=".8"/>
<line x1="44" y1="641.5" x2="49" y2="641.5" stroke-opacity=".85"/>
<line x1="46" y1="645.5" x2="49" y2="645.5" stroke-opacity=".8"/>
<line x1="46" y1="648.5" x2="49" y2="648.5" stroke-opacity=".8"/>
<line x1="46" y1="652.5" x2="49" y2="652.5" stroke-opacity=".8"/>
<line x1="46" y1="656.5" x2="49" y2="656.5" stroke-opacity=".8"/>
<line x1="34" y1="660.5" x2="49" y2="660.5"/>
<line x1="46" y1="664.5" x2="49" y2="664.5" stroke-opacity=".8"/>
<line x1="46" y1="668.5" x2="49" y2="668.5" stroke-opacity=".8"/>
<line x1="46" y1="672.5" x2="49" y2="672.5" stroke-opacity=".8"/>
<line x1="46" y1="676.5" x2="49" y2="676.5" stroke-opacity=".8"/>
<line x1="44" y1="680.5" x2="49" y2="680.5" stroke-opacity=".85"/>
<line x1="46" y1="683.5" x2="49" y2="683.5" stroke-opacity=".8"/>
<line x1="46" y1="687.5" x2="49" y2="687.5" stroke-opacity=".8"/>
</g>
<g font-size="9.6" fill="#26222e">
<text x="76.6" y="111.8" textLength="4.3" lengthAdjust="spacingAndGlyphs">0</text>
<text x="116.8" y="111.8" textLength="8.7" lengthAdjust="spacingAndGlyphs">20</text>
<text x="155.6" y="111.8" textLength="8.7" lengthAdjust="spacingAndGlyphs">40</text>
<text x="194.4" y="111.8" textLength="8.7" lengthAdjust="spacingAndGlyphs">60</text>
<text x="233.2" y="111.8" textLength="8.7" lengthAdjust="spacingAndGlyphs">80</text>
<text x="272.0" y="111.8" textLength="13.0" lengthAdjust="spacingAndGlyphs">100</text>
<text x="310.8" y="111.8" textLength="13.0" lengthAdjust="spacingAndGlyphs">120</text>
<text x="349.6" y="111.8" textLength="13.0" lengthAdjust="spacingAndGlyphs">140</text>
<text x="388.4" y="111.8" textLength="13.0" lengthAdjust="spacingAndGlyphs">160</text>
<text x="427.2" y="111.8" textLength="13.0" lengthAdjust="spacingAndGlyphs">180</text>
<text x="466.0" y="111.8" textLength="13.0" lengthAdjust="spacingAndGlyphs">200</text>
<text x="504.8" y="111.8" textLength="13.0" lengthAdjust="spacingAndGlyphs">220</text>
<text x="543.6" y="111.8" textLength="13.0" lengthAdjust="spacingAndGlyphs">240</text>
<text x="582.4" y="111.8" textLength="13.0" lengthAdjust="spacingAndGlyphs">260</text>
<text x="621.2" y="111.8" textLength="13.0" lengthAdjust="spacingAndGlyphs">280</text>
<text x="660.0" y="111.8" textLength="13.0" lengthAdjust="spacingAndGlyphs">300</text>
<text transform="translate(43.2,166.9) rotate(-90)" textLength="9.6" lengthAdjust="spacingAndGlyphs">20</text>
<text transform="translate(43.2,201.0) rotate(-90)" textLength="4.8" lengthAdjust="spacingAndGlyphs">0</text>
<text transform="translate(43.2,244.7) rotate(-90)" textLength="9.6" lengthAdjust="spacingAndGlyphs">20</text>
<text transform="translate(43.2,283.6) rotate(-90)" textLength="9.6" lengthAdjust="spacingAndGlyphs">40</text>
<text transform="translate(43.2,322.4) rotate(-90)" textLength="9.6" lengthAdjust="spacingAndGlyphs">60</text>
<text transform="translate(43.2,361.3) rotate(-90)" textLength="9.6" lengthAdjust="spacingAndGlyphs">80</text>
<text transform="translate(43.2,405.0) rotate(-90)" textLength="14.4" lengthAdjust="spacingAndGlyphs">100</text>
<text transform="translate(43.2,443.9) rotate(-90)" textLength="14.4" lengthAdjust="spacingAndGlyphs">120</text>
<text transform="translate(43.2,482.8) rotate(-90)" textLength="14.4" lengthAdjust="spacingAndGlyphs">140</text>
<text transform="translate(43.2,521.6) rotate(-90)" textLength="14.4" lengthAdjust="spacingAndGlyphs">160</text>
<text transform="translate(43.2,560.5) rotate(-90)" textLength="14.4" lengthAdjust="spacingAndGlyphs">180</text>
<text transform="translate(43.2,599.4) rotate(-90)" textLength="14.4" lengthAdjust="spacingAndGlyphs">200</text>
<text transform="translate(43.2,638.3) rotate(-90)" textLength="14.4" lengthAdjust="spacingAndGlyphs">220</text>
<text transform="translate(43.2,677.2) rotate(-90)" textLength="14.4" lengthAdjust="spacingAndGlyphs">240</text>
</g>
<line x1="556.5" y1="103" x2="556.5" y2="119" stroke="#f01818" stroke-width="1.2"/>
<line x1="34" y1="423.4" x2="49" y2="423.4" stroke="#f01818" stroke-width="1.2"/>
<g fill="#b0b0b0">
<rect x="14" y="107" width="1" height="1"/>
<rect x="17" y="107" width="1" height="1"/>
<rect x="20" y="107" width="1" height="1"/>
<rect x="23" y="107" width="1" height="1"/>
</g>
<path d="M56.5 682.5 L53 685.5 L56.5 688.5Z" fill="#444"/>
<path d="M672.5 682.5 L676.5 685.5 L672.5 688.5Z" fill="#444"/>
<defs><filter id="gs" x="0" y="0" width="100%" height="100%"><feColorMatrix type="saturate" values="0"/></filter></defs>
<g id="map" filter="url(#gs)">
<g fill="none" stroke="#4c4c4c" stroke-width="0.85" stroke-linejoin="round">
<polyline points="315.9,319.1 312.0,320.2 305.2,322.5 302.4,325.8 303.0,329.2 305.2,332.6 305.8,336.0"/>
<polyline points="307.5,324.2 312.0,323.0 312.5,325.3 309.2,328.1 306.3,327.0 307.5,324.2"/>
<polyline points="316.5,316.9 319.8,318.5 318.7,322.5 316.5,316.9"/>
<polyline points="315.9,314.0 322.0,312.9"/>
<polyline points="317.0,311.5 321.0,310.5"/>
<polyline points="323.2,324.7 321.5,329.2 322.0,332.6 321.5,337.0 321.0,345.0 321.0,349.4 323.2,356.2 325.4,363.0 330.0,369.7"/>
<polyline points="321.5,329.8 328.3,331.5"/>
<polyline points="319.3,332.6 330.0,336.0"/>
<polyline points="317.6,335.4 331.0,337.6"/>
<polyline points="305.8,336.0 315.3,338.8 330.0,342.1 337.8,343.3"/>
<polyline points="318.7,341.0 330.0,343.8"/>
<polyline points="317.6,344.4 329.4,347.2"/>
<polyline points="319.8,349.4 332.2,351.7"/>
<polyline points="318.7,352.2 332.2,355.0"/>
<polyline points="317.6,356.2 334.4,359.6"/>
<polyline points="321.0,359.6 336.7,361.2"/>
<polyline points="330.0,336.0 329.4,345.0 328.8,350.6 330.0,358.4 332.2,364.0"/>
<polyline points="325.4,342.7 324.9,349.4 326.6,358.4 328.3,365.2"/>
<polyline points="287.2,339.3 298.5,345.0 307.5,351.7 318.7,359.6 324.3,366.3"/>
<polyline points="292.9,339.3 299.6,339.9 307.5,345.0 317.6,354.0 323.2,360.7 330.0,369.7 337.8,372.0"/>
<polyline points="305.2,336.0 304.1,342.7 307.5,347.2 310.8,352.8"/>
<polyline points="297.4,349.4 303.0,345.0 305.8,341.6"/>
<polyline points="291.7,352.8 307.5,354.0 318.7,350.6"/>
<polyline points="322.0,353.0 327.0,357.5 331.0,355.0"/>
<polyline points="323.0,358.0 328.0,353.5 332.0,357.0"/>
<polyline points="324.5,351.5 329.0,356.0 326.0,360.0"/>
<polyline points="323.5,355.0 330.5,355.5"/>
<polyline points="325.0,352.5 326.5,361.0"/>
<polyline points="327.8,351.5 329.2,360.5"/>
<polyline points="322.5,357.2 331.5,358.0"/>
<polyline points="332.2,364.0 336.0,367.0 340.0,368.5"/>
</g>
<g fill="none" stroke="#222" stroke-width="0.8" stroke-linecap="round">
<polyline points="143.2,287.3 147.7,292.3"/>
<polyline points="223.0,300.0 226.0,301.8 230.0,300.5"/>
<polyline points="199.0,303.0 201.0,307.0 206.0,309.0 209.0,308.5"/>
<polyline points="224.0,342.0 228.0,340.0 231.0,338.5"/>
<polyline points="228.0,347.6 234.0,345.5 240.8,344.5"/>
<polyline points="217.0,317.5 222.0,317.5 227.0,315.0 231.0,316.0"/>
<polyline points="236.0,326.5 240.0,327.5 245.0,326.5"/>
<polyline points="264.8,382.5 272.4,382.5"/>
<polyline points="239.5,404.6 254.7,404.6 259.7,399.0 262.0,402.0 266.0,402.7 259.0,407.5 253.4,411.0"/>
<polyline points="252.0,412.2 257.0,411.0 262.3,409.7"/>
<polyline points="240.0,407.5 250.0,407.2"/>
<polyline points="310.0,412.4 315.8,412.4"/>
<polyline points="320.0,394.5 325.0,396.5 329.5,396.6 332.0,400.0"/>
<polyline points="329.5,400.8 326.4,406.1 324.0,413.0"/>
<polyline points="274.0,404.5 279.0,402.5"/>
<polyline points="176.0,301.5 180.0,303.0"/>
<polyline points="164.5,296.0 167.5,298.5"/>
<polyline points="178.0,305.5 182.0,306.8"/>
<polyline points="306.0,449.5 309.0,446.5"/>
</g>
<g fill="#0a0a0a">
<polygon points="200.1,318.7 198.9,320.2 197.0,320.7 195.5,320.2 195.0,318.6 196.6,317.5 199.7,317.0" transform="rotate(-35 197.7 318.9)"/>
<polygon points="334.7,310.7 334.3,312.7 331.6,312.6 330.1,311.2 330.3,310.0 331.3,309.7 334.1,309.3" transform="rotate(-20 332.3 311)"/>
<polygon points="325.8,314.5 324.6,315.6 323.0,315.6 321.9,315.3 321.5,314.1 322.6,313.6 324.6,313.9" transform="rotate(0 323.4 314.7)"/>
<polygon points="295.3,327.6 293.3,329.0 286.7,330.3 283.1,327.8 284.7,325.4 286.6,323.9 291.3,324.4" transform="rotate(-8 288.5 327)"/>
<polygon points="265.6,325.2 263.8,326.5 260.6,326.4 258.6,325.9 259.0,325.0 261.9,324.1 264.3,324.5" transform="rotate(10 262 325.5)"/>
<polygon points="279.3,323.7 277.8,325.2 273.5,324.9 271.2,324.6 271.1,323.8 273.7,323.2 276.8,322.8" transform="rotate(-20 275 324)"/>
<polygon points="345.6,337.2 345.5,342.7 343.5,343.2 340.6,340.7 340.9,334.5 342.5,333.6 345.1,333.1" transform="rotate(-10 343.4 338.2)"/>
<polygon points="345.1,352.1 344.8,353.1 343.6,354.3 342.3,352.5 342.1,351.1 343.2,348.7 345.2,349.7" transform="rotate(0 343.7 351.5)"/>
<polygon points="286.6,350.8 285.5,352.3 283.9,353.1 282.9,351.4 283.3,350.0 284.0,348.6 285.3,349.1" transform="rotate(30 284.8 350.8)"/>
<polygon points="278.6,356.3 278.1,357.5 277.3,357.9 276.0,357.5 275.2,356.2 277.0,355.1 278.0,355.1" transform="rotate(0 277.2 356.5)"/>
<polygon points="294.6,355.2 293.7,357.2 291.1,357.0 289.7,356.2 288.9,354.8 291.7,353.9 293.4,353.3" transform="rotate(10 291.8 355.3)"/>
<polygon points="356.4,358.4 355.8,359.8 354.5,361.2 353.2,359.0 353.5,357.8 354.2,356.0 356.3,356.4" transform="rotate(-30 355 358.4)"/>
<polygon points="303.1,365.2 302.3,367.3 299.2,367.2 297.5,365.9 297.8,364.9 299.9,364.1 301.6,364.0" transform="rotate(15 300.6 365.4)"/>
<polygon points="270.8,372.1 268.8,373.3 266.0,373.6 265.1,372.5 265.3,372.0 266.7,371.4 270.0,371.3" transform="rotate(0 267.7 372.3)"/>
<polygon points="307.2,371.6 306.5,373.8 305.1,374.1 302.4,371.7 303.1,369.4 303.9,368.0 306.4,368.2" transform="rotate(20 305 371)"/>
<polygon points="316.9,373.5 316.6,375.2 313.1,374.8 312.0,374.1 311.2,370.9 312.4,370.1 316.8,371.2" transform="rotate(0 314 372.8)"/>
<polygon points="344.0,372.1 342.5,373.4 338.7,374.5 336.7,373.5 336.7,371.2 340.4,370.3 342.0,370.5" transform="rotate(-15 340.5 372.3)"/>
<polygon points="286.8,350.4 286.2,352.3 285.0,353.6 283.5,352.0 283.2,349.5 284.4,348.1 286.1,349.0" transform="rotate(30 285 350.8)"/>
<polygon points="294.6,355.0 293.9,356.1 292.3,357.0 289.3,356.0 289.0,354.0 290.9,353.4 294.6,353.5" transform="rotate(0 292 355)"/>
<polygon points="270.2,372.4 269.2,373.4 266.2,373.8 264.3,373.2 265.2,372.0 266.8,371.6 269.3,371.7" transform="rotate(0 267.3 372.7)"/>
<polygon points="301.4,365.3 300.9,367.0 298.9,367.3 298.1,365.7 297.7,364.4 299.6,364.0 300.3,363.9" transform="rotate(0 299.6 365.4)"/>
<polygon points="260.0,382.5 260.0,383.5 257.7,384.1 257.0,383.6 257.3,382.3 258.5,381.4 259.5,381.6" transform="rotate(0 258.5 382.8)"/>
<polygon points="243.7,396.9 242.7,398.2 242.0,398.1 240.6,397.4 240.5,396.7 241.9,396.1 243.1,396.2" transform="rotate(0 242 397)"/>
<polygon points="298.0,393.4 297.5,395.3 296.6,396.0 294.4,394.5 295.0,393.6 295.6,392.2 297.2,392.7" transform="rotate(0 296.5 393.9)"/>
<polygon points="223.2,399.5 222.3,400.5 221.8,401.0 220.6,400.1 220.9,399.4 221.7,398.5 222.4,398.3" transform="rotate(0 221.8 399.6)"/>
<polygon points="201.9,417.4 201.7,418.1 200.4,418.7 199.1,417.8 198.8,416.7 199.9,416.4 201.1,416.5" transform="rotate(0 200.3 417.3)"/>
<polygon points="279.8,419.4 279.5,420.1 277.2,420.5 275.0,419.9 275.3,419.2 276.8,418.9 278.6,418.9" transform="rotate(0 277.5 419.6)"/>
<polygon points="296.4,419.4 295.9,420.3 294.0,420.4 293.0,419.6 292.8,418.3 294.1,417.5 296.1,417.7" transform="rotate(0 294.6 419.2)"/>
<polygon points="298.5,368.6 297.1,369.7 295.4,369.7 294.4,369.3 293.3,368.5 295.1,367.8 296.9,367.5" transform="rotate(0 295.8 368.7)"/>
<polygon points="317.5,374.8 316.2,375.9 313.9,377.1 311.8,375.9 310.5,372.8 314.4,370.8 316.1,370.6" transform="rotate(0 314.2 374)"/>
<polygon points="343.2,372.6 342.7,374.4 339.3,375.7 337.2,374.6 337.0,372.5 338.5,370.5 341.0,370.9" transform="rotate(-20 340 372.9)"/>
<polygon points="356.2,378.5 355.1,380.1 351.1,380.4 348.2,379.3 349.3,378.1 352.9,377.3 355.8,377.4" transform="rotate(-15 352.7 378.7)"/>
<polygon points="300.0,377.0 298.4,378.5 296.5,378.6 295.6,378.1 295.0,376.8 297.3,376.1 299.2,376.4" transform="rotate(0 297.4 377.4)"/>
<polygon points="334.7,381.1 333.5,381.6 332.2,382.1 330.1,381.9 330.0,380.4 331.8,379.8 333.3,380.3" transform="rotate(-10 332.2 381)"/>
<polygon points="346.2,388.1 344.0,389.3 340.0,389.2 337.3,388.2 337.1,387.4 340.8,386.0 345.3,386.0" transform="rotate(25 341.1 387.7)"/>
<polygon points="349.6,389.8 349.0,390.8 346.5,390.9 345.7,390.1 345.4,389.6 347.2,388.8 348.5,389.1" transform="rotate(0 347.4 389.8)"/>
<polygon points="297.3,393.1 297.0,395.1 296.0,395.0 295.3,394.2 295.5,392.9 296.3,392.0 297.4,392.3" transform="rotate(0 296.3 393.5)"/>
<polygon points="310.6,394.9 310.0,398.4 308.7,397.8 307.3,397.4 307.3,394.9 308.3,393.2 310.1,394.4" transform="rotate(20 309 395.6)"/>
<polygon points="333.9,400.3 332.7,402.4 331.4,402.9 330.0,400.7 329.3,399.4 331.1,397.5 332.5,397.7" transform="rotate(20 331.6 399.8)"/>
<polygon points="292.0,401.3 291.6,402.1 289.4,402.2 288.1,401.6 288.8,400.7 289.5,400.4 291.5,400.7" transform="rotate(20 290 401.4)"/>
<polygon points="323.4,413.2 321.6,415.3 319.1,417.5 314.3,415.8 315.1,412.6 318.2,410.7 322.2,410.0" transform="rotate(15 319 413.5)"/>
<polygon points="326.1,416.1 325.6,417.3 324.2,417.2 324.0,416.0 323.9,414.7 324.7,413.8 325.3,414.5" transform="rotate(0 324.8 415.6)"/>
<polygon points="344.0,416.8 343.5,417.6 341.9,418.3 340.2,416.6 340.4,415.6 341.8,414.8 343.1,415.1" transform="rotate(-20 342.2 416.4)"/>
<polygon points="351.9,411.0 350.0,412.6 346.9,413.3 346.4,412.1 346.3,411.0 347.8,410.1 349.7,410.1" transform="rotate(0 348.5 411.4)"/>
<polygon points="296.3,419.4 295.0,420.7 293.9,421.0 292.8,420.1 292.7,419.0 294.3,417.9 295.3,417.9" transform="rotate(-30 294.2 419.3)"/>
<polygon points="307.7,426.0 307.1,427.0 304.8,427.8 302.0,426.1 303.6,424.5 303.8,423.4 307.5,424.2" transform="rotate(30 305.3 425.6)"/>
<polygon points="290.3,430.3 290.4,431.3 288.2,431.5 287.5,430.5 287.6,430.1 288.6,429.1 290.5,429.5" transform="rotate(0 289 430.3)"/>
<polygon points="299.5,431.6 298.4,432.8 297.0,433.4 294.6,432.6 295.1,430.6 296.0,430.0 298.6,430.0" transform="rotate(0 296.9 431.4)"/>
<polygon points="293.8,439.1 293.4,440.2 291.2,440.3 289.6,439.6 288.9,438.9 291.8,438.1 293.8,438.6" transform="rotate(0 291.6 439.3)"/>
<polygon points="290.2,430.0 289.4,431.4 288.6,431.1 287.0,430.7 287.3,429.8 288.4,428.8 289.3,429.4" transform="rotate(-30 288.7 430.2)"/>
<polygon points="298.6,430.9 297.8,431.8 296.2,432.2 295.7,431.4 295.8,430.3 297.0,430.0 297.9,429.9" transform="rotate(0 297 431)"/>
<polygon points="303.2,441.9 299.2,443.5 295.9,444.1 289.6,443.0 290.9,441.8 293.5,439.9 298.2,440.8" transform="rotate(35 296.2 442.2)"/>
<polygon points="351.3,421.5 350.8,422.6 349.7,422.7 349.2,421.8 348.8,421.4 350.1,421.0 351.0,421.1" transform="rotate(0 350.2 421.7)"/>
<polygon points="185.6,316.4 185.0,317.1 183.9,317.6 182.6,316.7 182.9,315.8 183.4,315.2 185.3,315.8" transform="rotate(0 184 316.5)"/>
<polygon points="173.9,316.0 173.6,318.0 171.9,318.1 170.5,316.8 169.9,315.7 171.9,315.2 172.6,315.3" transform="rotate(0 172 316.5)"/>
<polygon points="236.5,323.8 236.0,324.7 234.8,324.5 233.2,323.7 233.2,323.1 234.5,322.5 235.7,322.3" transform="rotate(0 235 323.5)"/>
<polygon points="276.8,353.9 275.5,354.5 274.9,354.9 272.9,353.8 273.6,353.0 274.5,352.1 276.2,352.8" transform="rotate(0 275 353.5)"/>
<polygon points="153.5,303.7 152.2,304.4 150.4,304.3 149.2,303.9 149.5,303.1 150.0,302.6 151.9,302.9" transform="rotate(30 151 303.5)"/>
<polygon points="221.3,304.1 221.0,305.8 217.7,306.1 217.5,305.1 216.8,304.2 218.8,303.1 220.1,303.3" transform="rotate(20 219 304.5)"/>
<polygon points="233.9,332.1 233.0,333.8 231.6,333.3 230.5,332.4 230.6,331.2 231.9,330.5 232.8,330.7" transform="rotate(40 232 332)"/>
</g>
<g fill="#333" stroke="#333" stroke-width=".7">
<rect x="150.7" y="269.7" width="1.1" height="1.1" stroke="none" opacity="0.45"/>
<line x1="162.8" y1="269.7" x2="163.4" y2="270.8" opacity="0.48"/>
<rect x="169.8" y="283.2" width="1.1" height="1.1" stroke="none" opacity="0.60"/>
<line x1="169.8" y1="283.3" x2="171.1" y2="282.5" opacity="0.38"/>
<line x1="184.5" y1="279.0" x2="185.2" y2="277.8" opacity="0.68"/>
<rect x="247.9" y="267.6" width="1.1" height="1.1" stroke="none" opacity="0.47"/>
<rect x="243.8" y="264.2" width="1.1" height="1.1" stroke="none" opacity="0.49"/>
<rect x="248.4" y="264.2" width="1.1" height="1.1" stroke="none" opacity="0.36"/>
<rect x="248.6" y="264.1" width="1.1" height="1.1" stroke="none" opacity="0.52"/>
<rect x="165.8" y="288.8" width="1.1" height="1.1" stroke="none" opacity="0.41"/>
<rect x="165.9" y="293.4" width="1.1" height="1.1" stroke="none" opacity="0.40"/>
<line x1="171.5" y1="287.5" x2="170.7" y2="287.6" opacity="0.52"/>
<line x1="183.8" y1="285.3" x2="184.4" y2="285.1" opacity="0.77"/>
<rect x="188.0" y="284.5" width="1.1" height="1.1" stroke="none" opacity="0.85"/>
<rect x="193.6" y="287.7" width="1.1" height="1.1" stroke="none" opacity="0.84"/>
<line x1="196.9" y1="285.8" x2="196.5" y2="286.0" opacity="0.43"/>
<rect x="206.7" y="292.3" width="1.1" height="1.1" stroke="none" opacity="0.54"/>
<line x1="175.5" y1="297.5" x2="177.4" y2="296.7" opacity="0.62"/>
<rect x="178.5" y="296.5" width="1.1" height="1.1" stroke="none" opacity="0.85"/>
<line x1="176.9" y1="301.3" x2="177.4" y2="302.2" opacity="0.73"/>
<rect x="181.7" y="300.5" width="1.1" height="1.1" stroke="none" opacity="0.46"/>
<rect x="181.5" y="302.8" width="1.1" height="1.1" stroke="none" opacity="0.44"/>
<rect x="197.5" y="300.5" width="1.1" height="1.1" stroke="none" opacity="0.84"/>
<line x1="216.2" y1="300.1" x2="215.4" y2="299.9" opacity="0.65"/>
<rect x="150.1" y="298.1" width="1.1" height="1.1" stroke="none" opacity="0.60"/>
<line x1="159.4" y1="315.4" x2="160.7" y2="316.1" opacity="0.69"/>
<rect x="158.8" y="312.3" width="1.1" height="1.1" stroke="none" opacity="0.55"/>
<rect x="169.8" y="314.8" width="1.1" height="1.1" stroke="none" opacity="0.37"/>
<rect x="173.6" y="312.0" width="1.1" height="1.1" stroke="none" opacity="0.75"/>
<rect x="178.8" y="312.3" width="1.1" height="1.1" stroke="none" opacity="0.36"/>
<rect x="178.4" y="311.5" width="1.1" height="1.1" stroke="none" opacity="0.41"/>
<line x1="181.8" y1="312.9" x2="182.7" y2="312.2" opacity="0.79"/>
<rect x="186.7" y="311.3" width="1.1" height="1.1" stroke="none" opacity="0.49"/>
<line x1="192.4" y1="307.2" x2="192.4" y2="307.4" opacity="0.49"/>
<rect x="192.6" y="301.9" width="1.1" height="1.1" stroke="none" opacity="0.45"/>
<line x1="212.9" y1="309.5" x2="211.4" y2="309.5" opacity="0.44"/>
<line x1="221.5" y1="309.6" x2="223.1" y2="309.0" opacity="0.64"/>
<rect x="226.1" y="307.2" width="1.1" height="1.1" stroke="none" opacity="0.56"/>
<rect x="220.8" y="306.8" width="1.1" height="1.1" stroke="none" opacity="0.39"/>
<line x1="213.6" y1="312.5" x2="213.9" y2="312.9" opacity="0.70"/>
<rect x="151.7" y="326.6" width="1.1" height="1.1" stroke="none" opacity="0.47"/>
<rect x="159.0" y="322.9" width="1.1" height="1.1" stroke="none" opacity="0.38"/>
<rect x="160.7" y="320.4" width="1.1" height="1.1" stroke="none" opacity="0.38"/>
<rect x="162.3" y="325.4" width="1.1" height="1.1" stroke="none" opacity="0.47"/>
<rect x="166.7" y="324.4" width="1.1" height="1.1" stroke="none" opacity="0.61"/>
<rect x="181.2" y="323.0" width="1.1" height="1.1" stroke="none" opacity="0.39"/>
<line x1="172.7" y1="327.1" x2="173.0" y2="326.8" opacity="0.36"/>
<rect x="183.7" y="332.3" width="1.1" height="1.1" stroke="none" opacity="0.62"/>
<rect x="178.3" y="328.7" width="1.1" height="1.1" stroke="none" opacity="0.36"/>
<rect x="181.6" y="322.0" width="1.1" height="1.1" stroke="none" opacity="0.36"/>
<rect x="187.5" y="319.6" width="1.1" height="1.1" stroke="none" opacity="0.68"/>
<rect x="203.6" y="320.8" width="1.1" height="1.1" stroke="none" opacity="0.52"/>
<line x1="196.7" y1="326.5" x2="194.8" y2="327.3" opacity="0.78"/>
<line x1="201.5" y1="324.6" x2="200.6" y2="325.0" opacity="0.45"/>
<line x1="201.9" y1="326.5" x2="201.0" y2="325.5" opacity="0.86"/>
<rect x="214.5" y="326.0" width="1.1" height="1.1" stroke="none" opacity="0.88"/>
<rect x="216.7" y="325.9" width="1.1" height="1.1" stroke="none" opacity="0.40"/>
<line x1="219.5" y1="319.4" x2="220.5" y2="319.0" opacity="0.76"/>
<line x1="194.3" y1="325.7" x2="195.0" y2="326.1" opacity="0.85"/>
<line x1="200.1" y1="327.6" x2="201.5" y2="327.4" opacity="0.81"/>
<line x1="202.1" y1="330.1" x2="200.4" y2="331.0" opacity="0.47"/>
<rect x="211.8" y="327.2" width="1.1" height="1.1" stroke="none" opacity="0.69"/>
<line x1="230.5" y1="321.5" x2="228.7" y2="320.5" opacity="0.43"/>
<line x1="236.9" y1="330.5" x2="237.0" y2="330.9" opacity="0.46"/>
<rect x="239.0" y="315.2" width="1.1" height="1.1" stroke="none" opacity="0.46"/>
<line x1="230.8" y1="321.1" x2="232.1" y2="321.4" opacity="0.80"/>
<line x1="233.1" y1="315.1" x2="231.9" y2="314.7" opacity="0.40"/>
<rect x="234.3" y="314.5" width="1.1" height="1.1" stroke="none" opacity="0.49"/>
<line x1="247.8" y1="315.9" x2="247.7" y2="315.4" opacity="0.77"/>
<rect x="247.7" y="314.9" width="1.1" height="1.1" stroke="none" opacity="0.37"/>
<rect x="241.9" y="312.4" width="1.1" height="1.1" stroke="none" opacity="0.38"/>
<rect x="247.4" y="315.2" width="1.1" height="1.1" stroke="none" opacity="0.67"/>
<line x1="248.9" y1="308.9" x2="246.9" y2="308.9" opacity="0.77"/>
<rect x="253.3" y="313.7" width="1.1" height="1.1" stroke="none" opacity="0.45"/>
<line x1="252.0" y1="314.0" x2="251.2" y2="313.3" opacity="0.49"/>
<line x1="239.6" y1="321.3" x2="239.5" y2="322.5" opacity="0.87"/>
<rect x="242.6" y="320.8" width="1.1" height="1.1" stroke="none" opacity="0.53"/>
<rect x="245.9" y="327.1" width="1.1" height="1.1" stroke="none" opacity="0.76"/>
<rect x="243.3" y="323.0" width="1.1" height="1.1" stroke="none" opacity="0.52"/>
<rect x="245.8" y="319.2" width="1.1" height="1.1" stroke="none" opacity="0.84"/>
<line x1="245.4" y1="320.5" x2="246.0" y2="320.1" opacity="0.76"/>
<line x1="244.2" y1="317.4" x2="245.2" y2="316.6" opacity="0.81"/>
<rect x="242.7" y="330.3" width="1.1" height="1.1" stroke="none" opacity="0.48"/>
<rect x="242.3" y="333.8" width="1.1" height="1.1" stroke="none" opacity="0.63"/>
<line x1="243.3" y1="334.8" x2="245.2" y2="335.3" opacity="0.69"/>
<rect x="237.7" y="336.5" width="1.1" height="1.1" stroke="none" opacity="0.53"/>
<line x1="241.8" y1="341.0" x2="240.2" y2="340.8" opacity="0.41"/>
<rect x="241.9" y="341.6" width="1.1" height="1.1" stroke="none" opacity="0.75"/>
<line x1="239.1" y1="343.3" x2="238.9" y2="342.1" opacity="0.50"/>
<line x1="245.8" y1="339.5" x2="245.0" y2="338.3" opacity="0.47"/>
<line x1="252.9" y1="337.7" x2="252.7" y2="337.9" opacity="0.76"/>
<line x1="254.2" y1="337.9" x2="255.8" y2="338.5" opacity="0.48"/>
<rect x="342.2" y="298.0" width="1.1" height="1.1" stroke="none" opacity="0.45"/>
<line x1="340.8" y1="298.3" x2="339.8" y2="298.0" opacity="0.74"/>
<rect x="343.3" y="297.5" width="1.1" height="1.1" stroke="none" opacity="0.82"/>
<line x1="337.1" y1="303.1" x2="338.6" y2="304.0" opacity="0.64"/>
<line x1="332.9" y1="305.6" x2="331.1" y2="305.7" opacity="0.62"/>
<rect x="327.3" y="308.8" width="1.1" height="1.1" stroke="none" opacity="0.87"/>
<rect x="338.9" y="305.0" width="1.1" height="1.1" stroke="none" opacity="0.46"/>
<rect x="324.1" y="311.6" width="1.1" height="1.1" stroke="none" opacity="0.64"/>
<line x1="251.2" y1="313.1" x2="249.7" y2="314.2" opacity="0.57"/>
<rect x="252.5" y="308.1" width="1.1" height="1.1" stroke="none" opacity="0.50"/>
<line x1="249.4" y1="310.9" x2="248.8" y2="310.4" opacity="0.58"/>
<line x1="257.2" y1="308.7" x2="259.2" y2="309.8" opacity="0.87"/>
<rect x="258.7" y="306.8" width="1.1" height="1.1" stroke="none" opacity="0.86"/>
<line x1="259.9" y1="313.3" x2="258.5" y2="313.7" opacity="0.75"/>
<line x1="265.7" y1="314.6" x2="266.7" y2="314.9" opacity="0.58"/>
<rect x="265.2" y="312.0" width="1.1" height="1.1" stroke="none" opacity="0.78"/>
<line x1="264.5" y1="313.7" x2="264.5" y2="314.4" opacity="0.89"/>
<rect x="335.0" y="315.9" width="1.1" height="1.1" stroke="none" opacity="0.53"/>
<rect x="337.4" y="311.4" width="1.1" height="1.1" stroke="none" opacity="0.84"/>
<line x1="331.7" y1="312.5" x2="332.8" y2="311.6" opacity="0.81"/>
<rect x="331.5" y="317.1" width="1.1" height="1.1" stroke="none" opacity="0.36"/>
<rect x="254.6" y="317.2" width="1.1" height="1.1" stroke="none" opacity="0.41"/>
<rect x="255.4" y="318.8" width="1.1" height="1.1" stroke="none" opacity="0.78"/>
<line x1="257.3" y1="319.5" x2="259.2" y2="318.5" opacity="0.69"/>
<line x1="265.9" y1="323.1" x2="266.0" y2="323.7" opacity="0.46"/>
<rect x="262.7" y="323.5" width="1.1" height="1.1" stroke="none" opacity="0.66"/>
<rect x="260.9" y="317.5" width="1.1" height="1.1" stroke="none" opacity="0.62"/>
<rect x="272.3" y="324.6" width="1.1" height="1.1" stroke="none" opacity="0.49"/>
<rect x="269.6" y="324.9" width="1.1" height="1.1" stroke="none" opacity="0.44"/>
<rect x="270.5" y="323.0" width="1.1" height="1.1" stroke="none" opacity="0.51"/>
<line x1="272.1" y1="324.1" x2="272.6" y2="323.0" opacity="0.39"/>
<rect x="273.8" y="321.9" width="1.1" height="1.1" stroke="none" opacity="0.86"/>
<line x1="277.1" y1="320.5" x2="275.3" y2="321.0" opacity="0.62"/>
<rect x="273.8" y="315.7" width="1.1" height="1.1" stroke="none" opacity="0.71"/>
<rect x="279.7" y="319.3" width="1.1" height="1.1" stroke="none" opacity="0.85"/>
<rect x="275.8" y="316.9" width="1.1" height="1.1" stroke="none" opacity="0.38"/>
<line x1="275.9" y1="318.8" x2="277.4" y2="318.5" opacity="0.53"/>
<rect x="283.0" y="321.2" width="1.1" height="1.1" stroke="none" opacity="0.53"/>
<line x1="279.8" y1="319.6" x2="278.0" y2="320.1" opacity="0.70"/>
<rect x="288.4" y="317.4" width="1.1" height="1.1" stroke="none" opacity="0.52"/>
<line x1="285.2" y1="324.4" x2="286.4" y2="325.4" opacity="0.68"/>
<line x1="289.0" y1="321.9" x2="289.4" y2="322.4" opacity="0.69"/>
<rect x="290.2" y="322.8" width="1.1" height="1.1" stroke="none" opacity="0.69"/>
<rect x="295.8" y="324.7" width="1.1" height="1.1" stroke="none" opacity="0.58"/>
<rect x="294.0" y="321.5" width="1.1" height="1.1" stroke="none" opacity="0.43"/>
<rect x="300.3" y="321.4" width="1.1" height="1.1" stroke="none" opacity="0.45"/>
<line x1="294.1" y1="319.0" x2="294.1" y2="319.1" opacity="0.67"/>
<line x1="301.3" y1="320.7" x2="300.9" y2="319.7" opacity="0.58"/>
<line x1="324.3" y1="320.5" x2="324.2" y2="320.3" opacity="0.87"/>
<rect x="321.7" y="321.0" width="1.1" height="1.1" stroke="none" opacity="0.47"/>
<rect x="320.9" y="315.8" width="1.1" height="1.1" stroke="none" opacity="0.73"/>
<rect x="329.5" y="316.5" width="1.1" height="1.1" stroke="none" opacity="0.83"/>
<line x1="331.5" y1="319.8" x2="333.2" y2="319.4" opacity="0.60"/>
<rect x="341.1" y="326.4" width="1.1" height="1.1" stroke="none" opacity="0.75"/>
<line x1="340.4" y1="325.3" x2="339.4" y2="326.4" opacity="0.60"/>
<line x1="341.2" y1="319.7" x2="342.4" y2="318.7" opacity="0.36"/>
<line x1="337.5" y1="325.4" x2="337.4" y2="324.4" opacity="0.44"/>
<rect x="284.6" y="329.8" width="1.1" height="1.1" stroke="none" opacity="0.61"/>
<rect x="284.8" y="324.9" width="1.1" height="1.1" stroke="none" opacity="0.87"/>
<rect x="274.5" y="331.5" width="1.1" height="1.1" stroke="none" opacity="0.60"/>
<line x1="277.0" y1="328.0" x2="277.6" y2="328.7" opacity="0.50"/>
<rect x="275.6" y="332.3" width="1.1" height="1.1" stroke="none" opacity="0.75"/>
<line x1="299.3" y1="326.5" x2="298.8" y2="326.9" opacity="0.59"/>
<rect x="299.3" y="331.2" width="1.1" height="1.1" stroke="none" opacity="0.79"/>
<line x1="292.1" y1="329.9" x2="293.1" y2="330.6" opacity="0.44"/>
<rect x="332.5" y="332.5" width="1.1" height="1.1" stroke="none" opacity="0.83"/>
<line x1="327.5" y1="332.8" x2="329.1" y2="332.4" opacity="0.79"/>
<line x1="336.2" y1="327.9" x2="337.0" y2="329.0" opacity="0.56"/>
<rect x="345.3" y="330.7" width="1.1" height="1.1" stroke="none" opacity="0.61"/>
<rect x="342.1" y="331.3" width="1.1" height="1.1" stroke="none" opacity="0.79"/>
<rect x="285.7" y="331.9" width="1.1" height="1.1" stroke="none" opacity="0.38"/>
<rect x="262.6" y="333.1" width="1.1" height="1.1" stroke="none" opacity="0.64"/>
<rect x="259.8" y="327.5" width="1.1" height="1.1" stroke="none" opacity="0.46"/>
<rect x="260.8" y="328.9" width="1.1" height="1.1" stroke="none" opacity="0.66"/>
<rect x="267.2" y="329.5" width="1.1" height="1.1" stroke="none" opacity="0.86"/>
<rect x="267.3" y="330.5" width="1.1" height="1.1" stroke="none" opacity="0.60"/>
<line x1="262.3" y1="327.7" x2="260.7" y2="327.0" opacity="0.50"/>
<line x1="268.4" y1="333.0" x2="268.1" y2="334.1" opacity="0.49"/>
<rect x="270.9" y="335.1" width="1.1" height="1.1" stroke="none" opacity="0.88"/>
<rect x="264.3" y="330.1" width="1.1" height="1.1" stroke="none" opacity="0.45"/>
<rect x="247.7" y="337.8" width="1.1" height="1.1" stroke="none" opacity="0.74"/>
<line x1="261.5" y1="341.1" x2="259.8" y2="340.7" opacity="0.86"/>
<rect x="266.5" y="344.4" width="1.1" height="1.1" stroke="none" opacity="0.72"/>
<line x1="264.7" y1="338.0" x2="263.6" y2="336.9" opacity="0.88"/>
<rect x="292.6" y="334.0" width="1.1" height="1.1" stroke="none" opacity="0.65"/>
<line x1="292.4" y1="335.6" x2="293.4" y2="335.5" opacity="0.63"/>
<line x1="336.0" y1="334.5" x2="335.2" y2="334.8" opacity="0.87"/>
<rect x="332.2" y="338.0" width="1.1" height="1.1" stroke="none" opacity="0.49"/>
<rect x="335.6" y="336.7" width="1.1" height="1.1" stroke="none" opacity="0.48"/>
<rect x="337.4" y="335.5" width="1.1" height="1.1" stroke="none" opacity="0.74"/>
<line x1="331.6" y1="342.8" x2="333.1" y2="343.8" opacity="0.47"/>
<rect x="256.3" y="350.7" width="1.1" height="1.1" stroke="none" opacity="0.86"/>
<rect x="249.5" y="343.6" width="1.1" height="1.1" stroke="none" opacity="0.88"/>
<rect x="271.3" y="348.0" width="1.1" height="1.1" stroke="none" opacity="0.43"/>
<rect x="267.5" y="348.7" width="1.1" height="1.1" stroke="none" opacity="0.65"/>
<rect x="281.4" y="343.2" width="1.1" height="1.1" stroke="none" opacity="0.44"/>
<rect x="286.6" y="342.6" width="1.1" height="1.1" stroke="none" opacity="0.44"/>
<rect x="288.2" y="345.7" width="1.1" height="1.1" stroke="none" opacity="0.43"/>
<rect x="289.8" y="348.1" width="1.1" height="1.1" stroke="none" opacity="0.86"/>
<rect x="304.6" y="344.6" width="1.1" height="1.1" stroke="none" opacity="0.88"/>
<rect x="305.9" y="340.5" width="1.1" height="1.1" stroke="none" opacity="0.48"/>
<rect x="324.5" y="342.9" width="1.1" height="1.1" stroke="none" opacity="0.75"/>
<rect x="325.2" y="342.5" width="1.1" height="1.1" stroke="none" opacity="0.79"/>
<rect x="317.7" y="342.4" width="1.1" height="1.1" stroke="none" opacity="0.81"/>
<rect x="345.5" y="340.5" width="1.1" height="1.1" stroke="none" opacity="0.57"/>
<rect x="343.9" y="346.9" width="1.1" height="1.1" stroke="none" opacity="0.64"/>
<line x1="257.7" y1="346.8" x2="257.7" y2="346.3" opacity="0.40"/>
<line x1="257.8" y1="351.1" x2="258.1" y2="350.4" opacity="0.74"/>
<line x1="267.9" y1="351.0" x2="268.0" y2="350.6" opacity="0.81"/>
<rect x="278.4" y="353.1" width="1.1" height="1.1" stroke="none" opacity="0.62"/>
<rect x="279.0" y="350.0" width="1.1" height="1.1" stroke="none" opacity="0.83"/>
<line x1="295.6" y1="354.7" x2="295.9" y2="355.5" opacity="0.37"/>
<rect x="293.7" y="354.3" width="1.1" height="1.1" stroke="none" opacity="0.88"/>
<rect x="353.8" y="354.5" width="1.1" height="1.1" stroke="none" opacity="0.83"/>
<rect x="353.8" y="351.1" width="1.1" height="1.1" stroke="none" opacity="0.76"/>
<rect x="276.3" y="355.3" width="1.1" height="1.1" stroke="none" opacity="0.63"/>
<line x1="277.1" y1="351.3" x2="275.8" y2="350.9" opacity="0.40"/>
<line x1="280.9" y1="357.0" x2="281.9" y2="356.5" opacity="0.36"/>
<rect x="283.4" y="354.5" width="1.1" height="1.1" stroke="none" opacity="0.61"/>
<rect x="332.2" y="358.3" width="1.1" height="1.1" stroke="none" opacity="0.74"/>
<rect x="332.4" y="355.2" width="1.1" height="1.1" stroke="none" opacity="0.63"/>
<rect x="332.4" y="354.5" width="1.1" height="1.1" stroke="none" opacity="0.43"/>
<rect x="342.4" y="358.4" width="1.1" height="1.1" stroke="none" opacity="0.76"/>
<rect x="348.5" y="361.3" width="1.1" height="1.1" stroke="none" opacity="0.56"/>
<line x1="250.8" y1="361.4" x2="250.2" y2="360.7" opacity="0.87"/>
<line x1="249.1" y1="361.7" x2="250.8" y2="362.4" opacity="0.89"/>
<line x1="253.7" y1="358.6" x2="255.5" y2="358.0" opacity="0.63"/>
<rect x="259.1" y="359.6" width="1.1" height="1.1" stroke="none" opacity="0.41"/>
<rect x="256.0" y="361.1" width="1.1" height="1.1" stroke="none" opacity="0.72"/>
<rect x="256.9" y="362.7" width="1.1" height="1.1" stroke="none" opacity="0.90"/>
<rect x="268.6" y="362.8" width="1.1" height="1.1" stroke="none" opacity="0.84"/>
<line x1="273.9" y1="367.4" x2="275.1" y2="366.3" opacity="0.69"/>
<rect x="269.2" y="361.1" width="1.1" height="1.1" stroke="none" opacity="0.36"/>
<rect x="268.7" y="361.0" width="1.1" height="1.1" stroke="none" opacity="0.54"/>
<line x1="268.8" y1="367.8" x2="267.2" y2="368.0" opacity="0.86"/>
<line x1="288.1" y1="361.1" x2="288.4" y2="360.6" opacity="0.84"/>
<rect x="290.7" y="362.9" width="1.1" height="1.1" stroke="none" opacity="0.51"/>
<line x1="306.3" y1="361.5" x2="306.2" y2="361.6" opacity="0.46"/>
<rect x="306.7" y="360.1" width="1.1" height="1.1" stroke="none" opacity="0.52"/>
<rect x="303.2" y="360.4" width="1.1" height="1.1" stroke="none" opacity="0.56"/>
<rect x="301.3" y="359.1" width="1.1" height="1.1" stroke="none" opacity="0.82"/>
<rect x="358.5" y="360.4" width="1.1" height="1.1" stroke="none" opacity="0.83"/>
<line x1="356.1" y1="358.4" x2="355.5" y2="358.8" opacity="0.65"/>
<line x1="360.3" y1="364.9" x2="360.3" y2="366.0" opacity="0.54"/>
<rect x="356.5" y="362.6" width="1.1" height="1.1" stroke="none" opacity="0.54"/>
<line x1="356.0" y1="366.3" x2="356.0" y2="366.9" opacity="0.82"/>
<line x1="356.6" y1="367.5" x2="357.4" y2="368.5" opacity="0.61"/>
<line x1="351.0" y1="368.4" x2="351.4" y2="368.4" opacity="0.35"/>
<line x1="281.6" y1="370.1" x2="280.1" y2="370.9" opacity="0.50"/>
<rect x="286.5" y="365.6" width="1.1" height="1.1" stroke="none" opacity="0.54"/>
<rect x="285.0" y="368.1" width="1.1" height="1.1" stroke="none" opacity="0.71"/>
<rect x="293.6" y="368.5" width="1.1" height="1.1" stroke="none" opacity="0.59"/>
<rect x="288.7" y="365.7" width="1.1" height="1.1" stroke="none" opacity="0.67"/>
<line x1="286.8" y1="371.9" x2="288.1" y2="373.0" opacity="0.53"/>
<rect x="287.8" y="367.9" width="1.1" height="1.1" stroke="none" opacity="0.85"/>
<rect x="292.1" y="367.3" width="1.1" height="1.1" stroke="none" opacity="0.51"/>
<rect x="310.8" y="371.9" width="1.1" height="1.1" stroke="none" opacity="0.63"/>
<rect x="312.2" y="367.0" width="1.1" height="1.1" stroke="none" opacity="0.55"/>
<rect x="314.4" y="362.1" width="1.1" height="1.1" stroke="none" opacity="0.39"/>
<line x1="314.0" y1="366.0" x2="312.6" y2="365.3" opacity="0.71"/>
<line x1="335.7" y1="366.1" x2="335.1" y2="366.2" opacity="0.69"/>
<line x1="338.6" y1="364.0" x2="339.9" y2="364.0" opacity="0.52"/>
<line x1="332.3" y1="369.8" x2="334.3" y2="370.7" opacity="0.73"/>
<rect x="341.7" y="366.8" width="1.1" height="1.1" stroke="none" opacity="0.80"/>
<rect x="344.0" y="365.9" width="1.1" height="1.1" stroke="none" opacity="0.38"/>
<line x1="337.0" y1="367.2" x2="337.7" y2="366.0" opacity="0.70"/>
<rect x="278.0" y="373.2" width="1.1" height="1.1" stroke="none" opacity="0.35"/>
<rect x="296.4" y="373.6" width="1.1" height="1.1" stroke="none" opacity="0.46"/>
<rect x="301.9" y="375.3" width="1.1" height="1.1" stroke="none" opacity="0.84"/>
<rect x="298.1" y="369.9" width="1.1" height="1.1" stroke="none" opacity="0.68"/>
<rect x="301.5" y="372.4" width="1.1" height="1.1" stroke="none" opacity="0.37"/>
<line x1="360.0" y1="370.1" x2="360.6" y2="370.6" opacity="0.59"/>
<rect x="360.8" y="367.6" width="1.1" height="1.1" stroke="none" opacity="0.48"/>
<line x1="355.9" y1="371.4" x2="354.1" y2="370.7" opacity="0.82"/>
<rect x="232.8" y="335.8" width="1.1" height="1.1" stroke="none" opacity="0.84"/>
<rect x="237.9" y="338.9" width="1.1" height="1.1" stroke="none" opacity="0.69"/>
<rect x="229.7" y="342.8" width="1.1" height="1.1" stroke="none" opacity="0.82"/>
<rect x="235.8" y="340.8" width="1.1" height="1.1" stroke="none" opacity="0.88"/>
<line x1="241.6" y1="337.9" x2="240.5" y2="337.5" opacity="0.56"/>
<rect x="241.0" y="339.9" width="1.1" height="1.1" stroke="none" opacity="0.79"/>
<line x1="239.0" y1="339.0" x2="238.6" y2="338.7" opacity="0.35"/>
<line x1="240.5" y1="343.0" x2="242.4" y2="342.8" opacity="0.53"/>
<rect x="252.0" y="337.9" width="1.1" height="1.1" stroke="none" opacity="0.61"/>
<line x1="250.9" y1="337.0" x2="249.9" y2="336.1" opacity="0.36"/>
<rect x="256.4" y="342.5" width="1.1" height="1.1" stroke="none" opacity="0.42"/>
<rect x="261.5" y="342.2" width="1.1" height="1.1" stroke="none" opacity="0.44"/>
<rect x="264.5" y="341.7" width="1.1" height="1.1" stroke="none" opacity="0.67"/>
<line x1="265.2" y1="338.3" x2="267.0" y2="339.5" opacity="0.82"/>
<rect x="266.3" y="340.2" width="1.1" height="1.1" stroke="none" opacity="0.89"/>
<line x1="264.5" y1="340.8" x2="265.2" y2="339.8" opacity="0.42"/>
<line x1="226.4" y1="351.1" x2="225.0" y2="350.0" opacity="0.37"/>
<rect x="239.6" y="345.1" width="1.1" height="1.1" stroke="none" opacity="0.82"/>
<rect x="244.8" y="344.6" width="1.1" height="1.1" stroke="none" opacity="0.66"/>
<rect x="243.3" y="346.1" width="1.1" height="1.1" stroke="none" opacity="0.39"/>
<rect x="240.8" y="344.7" width="1.1" height="1.1" stroke="none" opacity="0.74"/>
<line x1="254.6" y1="347.1" x2="256.1" y2="348.2" opacity="0.70"/>
<line x1="248.6" y1="346.3" x2="250.2" y2="345.2" opacity="0.79"/>
<rect x="253.3" y="347.1" width="1.1" height="1.1" stroke="none" opacity="0.90"/>
<rect x="264.1" y="356.6" width="1.1" height="1.1" stroke="none" opacity="0.68"/>
<rect x="267.6" y="357.6" width="1.1" height="1.1" stroke="none" opacity="0.68"/>
<line x1="243.4" y1="370.4" x2="245.2" y2="370.6" opacity="0.65"/>
<line x1="244.0" y1="368.5" x2="244.7" y2="368.7" opacity="0.64"/>
<line x1="260.7" y1="370.3" x2="262.2" y2="370.5" opacity="0.71"/>
<line x1="263.9" y1="366.2" x2="262.8" y2="367.2" opacity="0.41"/>
<rect x="270.2" y="364.9" width="1.1" height="1.1" stroke="none" opacity="0.73"/>
<rect x="270.2" y="370.8" width="1.1" height="1.1" stroke="none" opacity="0.50"/>
<line x1="272.0" y1="367.6" x2="273.0" y2="368.4" opacity="0.86"/>
<rect x="291.2" y="368.6" width="1.1" height="1.1" stroke="none" opacity="0.72"/>
<rect x="291.7" y="371.3" width="1.1" height="1.1" stroke="none" opacity="0.78"/>
<rect x="287.3" y="372.1" width="1.1" height="1.1" stroke="none" opacity="0.80"/>
<rect x="287.2" y="365.8" width="1.1" height="1.1" stroke="none" opacity="0.78"/>
<rect x="277.7" y="368.2" width="1.1" height="1.1" stroke="none" opacity="0.55"/>
<line x1="277.3" y1="370.2" x2="278.0" y2="369.6" opacity="0.43"/>
<line x1="242.7" y1="378.9" x2="243.4" y2="378.1" opacity="0.42"/>
<line x1="249.0" y1="378.1" x2="247.4" y2="377.9" opacity="0.48"/>
<line x1="254.4" y1="375.9" x2="254.0" y2="375.2" opacity="0.89"/>
<rect x="254.5" y="374.8" width="1.1" height="1.1" stroke="none" opacity="0.62"/>
<line x1="254.2" y1="373.0" x2="252.9" y2="372.9" opacity="0.52"/>
<rect x="256.6" y="374.4" width="1.1" height="1.1" stroke="none" opacity="0.66"/>
<line x1="265.4" y1="379.4" x2="267.4" y2="379.6" opacity="0.40"/>
<rect x="257.5" y="377.3" width="1.1" height="1.1" stroke="none" opacity="0.59"/>
<line x1="261.4" y1="373.5" x2="261.9" y2="374.5" opacity="0.86"/>
<line x1="273.6" y1="378.6" x2="271.7" y2="378.4" opacity="0.39"/>
<rect x="268.6" y="376.3" width="1.1" height="1.1" stroke="none" opacity="0.88"/>
<line x1="275.4" y1="378.9" x2="274.6" y2="379.1" opacity="0.41"/>
<rect x="270.7" y="378.6" width="1.1" height="1.1" stroke="none" opacity="0.55"/>
<rect x="276.1" y="378.3" width="1.1" height="1.1" stroke="none" opacity="0.81"/>
<line x1="271.5" y1="379.8" x2="272.3" y2="380.8" opacity="0.70"/>
<rect x="279.3" y="379.3" width="1.1" height="1.1" stroke="none" opacity="0.44"/>
<rect x="280.1" y="375.9" width="1.1" height="1.1" stroke="none" opacity="0.73"/>
<line x1="285.6" y1="377.9" x2="285.5" y2="377.2" opacity="0.89"/>
<line x1="283.3" y1="375.0" x2="283.3" y2="374.1" opacity="0.69"/>
<line x1="280.5" y1="375.1" x2="278.8" y2="374.0" opacity="0.74"/>
<rect x="295.6" y="377.3" width="1.1" height="1.1" stroke="none" opacity="0.51"/>
<rect x="292.6" y="378.8" width="1.1" height="1.1" stroke="none" opacity="0.46"/>
<line x1="238.4" y1="382.2" x2="237.0" y2="382.0" opacity="0.64"/>
<line x1="239.2" y1="379.5" x2="238.5" y2="379.8" opacity="0.80"/>
<line x1="252.1" y1="390.5" x2="251.3" y2="390.1" opacity="0.61"/>
<line x1="255.0" y1="383.1" x2="254.8" y2="382.1" opacity="0.45"/>
<rect x="252.9" y="385.9" width="1.1" height="1.1" stroke="none" opacity="0.67"/>
<rect x="260.7" y="385.8" width="1.1" height="1.1" stroke="none" opacity="0.49"/>
<rect x="267.2" y="383.9" width="1.1" height="1.1" stroke="none" opacity="0.76"/>
<line x1="266.0" y1="387.5" x2="266.9" y2="386.8" opacity="0.45"/>
<rect x="264.2" y="388.1" width="1.1" height="1.1" stroke="none" opacity="0.41"/>
<rect x="267.5" y="384.1" width="1.1" height="1.1" stroke="none" opacity="0.57"/>
<line x1="266.2" y1="390.4" x2="267.2" y2="389.5" opacity="0.65"/>
<rect x="271.2" y="387.9" width="1.1" height="1.1" stroke="none" opacity="0.73"/>
<rect x="275.3" y="385.7" width="1.1" height="1.1" stroke="none" opacity="0.61"/>
<rect x="270.0" y="389.2" width="1.1" height="1.1" stroke="none" opacity="0.57"/>
<rect x="267.0" y="389.8" width="1.1" height="1.1" stroke="none" opacity="0.88"/>
<line x1="278.7" y1="387.6" x2="280.2" y2="387.8" opacity="0.84"/>
<rect x="283.9" y="386.1" width="1.1" height="1.1" stroke="none" opacity="0.76"/>
<rect x="283.0" y="390.2" width="1.1" height="1.1" stroke="none" opacity="0.80"/>
<line x1="279.5" y1="390.7" x2="277.6" y2="390.9" opacity="0.87"/>
<rect x="277.0" y="389.2" width="1.1" height="1.1" stroke="none" opacity="0.79"/>
<rect x="284.0" y="387.6" width="1.1" height="1.1" stroke="none" opacity="0.73"/>
<rect x="290.7" y="388.3" width="1.1" height="1.1" stroke="none" opacity="0.79"/>
<line x1="282.5" y1="386.9" x2="284.0" y2="387.3" opacity="0.43"/>
<line x1="289.3" y1="389.5" x2="290.4" y2="389.0" opacity="0.49"/>
<rect x="288.9" y="386.9" width="1.1" height="1.1" stroke="none" opacity="0.43"/>
<rect x="296.7" y="390.6" width="1.1" height="1.1" stroke="none" opacity="0.37"/>
<rect x="296.2" y="389.6" width="1.1" height="1.1" stroke="none" opacity="0.57"/>
<line x1="222.2" y1="392.2" x2="222.3" y2="391.9" opacity="0.48"/>
<rect x="222.6" y="390.9" width="1.1" height="1.1" stroke="none" opacity="0.69"/>
<line x1="218.7" y1="395.7" x2="218.0" y2="395.3" opacity="0.61"/>
<line x1="229.8" y1="389.4" x2="228.0" y2="388.5" opacity="0.60"/>
<rect x="232.8" y="391.4" width="1.1" height="1.1" stroke="none" opacity="0.50"/>
<line x1="229.2" y1="393.8" x2="231.1" y2="392.6" opacity="0.64"/>
<rect x="241.8" y="389.4" width="1.1" height="1.1" stroke="none" opacity="0.46"/>
<line x1="238.8" y1="389.4" x2="237.8" y2="390.1" opacity="0.79"/>
<rect x="235.0" y="389.2" width="1.1" height="1.1" stroke="none" opacity="0.88"/>
<rect x="242.8" y="393.3" width="1.1" height="1.1" stroke="none" opacity="0.54"/>
<rect x="241.9" y="388.7" width="1.1" height="1.1" stroke="none" opacity="0.54"/>
<line x1="246.5" y1="395.8" x2="245.1" y2="395.0" opacity="0.80"/>
<rect x="250.0" y="394.0" width="1.1" height="1.1" stroke="none" opacity="0.57"/>
<rect x="249.0" y="396.0" width="1.1" height="1.1" stroke="none" opacity="0.67"/>
<line x1="270.7" y1="398.2" x2="270.0" y2="399.2" opacity="0.65"/>
<rect x="273.2" y="393.0" width="1.1" height="1.1" stroke="none" opacity="0.45"/>
<rect x="276.8" y="395.3" width="1.1" height="1.1" stroke="none" opacity="0.78"/>
<line x1="275.7" y1="392.9" x2="274.8" y2="392.4" opacity="0.62"/>
<rect x="251.4" y="395.6" width="1.1" height="1.1" stroke="none" opacity="0.36"/>
<rect x="249.8" y="400.8" width="1.1" height="1.1" stroke="none" opacity="0.51"/>
<line x1="250.7" y1="401.5" x2="249.0" y2="402.2" opacity="0.88"/>
<rect x="236.8" y="397.9" width="1.1" height="1.1" stroke="none" opacity="0.45"/>
<rect x="241.6" y="401.9" width="1.1" height="1.1" stroke="none" opacity="0.86"/>
<rect x="236.6" y="402.8" width="1.1" height="1.1" stroke="none" opacity="0.71"/>
<line x1="245.7" y1="398.9" x2="244.1" y2="399.2" opacity="0.82"/>
<line x1="245.5" y1="405.4" x2="247.0" y2="404.3" opacity="0.57"/>
<rect x="241.4" y="402.7" width="1.1" height="1.1" stroke="none" opacity="0.52"/>
<rect x="244.9" y="404.2" width="1.1" height="1.1" stroke="none" opacity="0.44"/>
<line x1="220.8" y1="405.5" x2="220.5" y2="405.6" opacity="0.40"/>
<line x1="221.3" y1="405.4" x2="220.3" y2="405.9" opacity="0.53"/>
<line x1="283.1" y1="399.3" x2="282.9" y2="398.7" opacity="0.77"/>
<rect x="286.6" y="402.8" width="1.1" height="1.1" stroke="none" opacity="0.49"/>
<rect x="282.7" y="407.1" width="1.1" height="1.1" stroke="none" opacity="0.89"/>
<line x1="287.5" y1="403.8" x2="288.0" y2="402.9" opacity="0.89"/>
<line x1="232.5" y1="406.3" x2="232.0" y2="405.5" opacity="0.45"/>
<rect x="229.6" y="407.8" width="1.1" height="1.1" stroke="none" opacity="0.86"/>
<line x1="228.3" y1="408.1" x2="228.3" y2="408.5" opacity="0.48"/>
<line x1="284.2" y1="406.3" x2="282.3" y2="406.7" opacity="0.47"/>
<line x1="276.2" y1="409.7" x2="275.6" y2="409.0" opacity="0.85"/>
<line x1="204.5" y1="411.8" x2="203.4" y2="411.2" opacity="0.87"/>
<rect x="203.2" y="407.9" width="1.1" height="1.1" stroke="none" opacity="0.48"/>
<rect x="211.7" y="409.4" width="1.1" height="1.1" stroke="none" opacity="0.90"/>
<line x1="211.0" y1="408.3" x2="210.1" y2="408.9" opacity="0.82"/>
<line x1="236.2" y1="409.0" x2="234.9" y2="409.4" opacity="0.62"/>
<line x1="239.1" y1="409.9" x2="237.9" y2="410.8" opacity="0.67"/>
<rect x="238.9" y="412.9" width="1.1" height="1.1" stroke="none" opacity="0.59"/>
<line x1="239.8" y1="414.2" x2="238.4" y2="415.2" opacity="0.73"/>
<rect x="271.0" y="406.9" width="1.1" height="1.1" stroke="none" opacity="0.75"/>
<rect x="264.3" y="411.2" width="1.1" height="1.1" stroke="none" opacity="0.40"/>
<rect x="275.6" y="414.1" width="1.1" height="1.1" stroke="none" opacity="0.89"/>
<rect x="271.3" y="413.3" width="1.1" height="1.1" stroke="none" opacity="0.73"/>
<rect x="273.7" y="408.9" width="1.1" height="1.1" stroke="none" opacity="0.59"/>
<line x1="269.4" y1="414.9" x2="267.9" y2="414.9" opacity="0.52"/>
<rect x="288.4" y="408.2" width="1.1" height="1.1" stroke="none" opacity="0.47"/>
<rect x="289.4" y="412.6" width="1.1" height="1.1" stroke="none" opacity="0.90"/>
<line x1="203.1" y1="409.4" x2="205.0" y2="408.8" opacity="0.88"/>
<rect x="195.2" y="414.4" width="1.1" height="1.1" stroke="none" opacity="0.36"/>
<line x1="245.7" y1="410.5" x2="244.7" y2="410.1" opacity="0.78"/>
<line x1="195.6" y1="417.0" x2="197.1" y2="417.5" opacity="0.73"/>
<line x1="194.3" y1="415.1" x2="193.8" y2="414.9" opacity="0.58"/>
<rect x="207.4" y="423.6" width="1.1" height="1.1" stroke="none" opacity="0.70"/>
<line x1="204.7" y1="424.3" x2="206.7" y2="425.1" opacity="0.73"/>
<line x1="265.7" y1="421.2" x2="263.9" y2="421.7" opacity="0.78"/>
<rect x="267.6" y="419.7" width="1.1" height="1.1" stroke="none" opacity="0.65"/>
<line x1="273.4" y1="414.5" x2="273.5" y2="414.7" opacity="0.76"/>
<line x1="273.7" y1="416.4" x2="273.2" y2="416.9" opacity="0.70"/>
<line x1="265.9" y1="419.1" x2="264.2" y2="419.8" opacity="0.71"/>
<rect x="263.1" y="424.4" width="1.1" height="1.1" stroke="none" opacity="0.77"/>
<rect x="264.7" y="423.9" width="1.1" height="1.1" stroke="none" opacity="0.54"/>
<rect x="277.5" y="420.7" width="1.1" height="1.1" stroke="none" opacity="0.86"/>
<rect x="280.2" y="423.8" width="1.1" height="1.1" stroke="none" opacity="0.80"/>
<line x1="277.1" y1="426.2" x2="278.4" y2="427.1" opacity="0.60"/>
<rect x="287.9" y="421.2" width="1.1" height="1.1" stroke="none" opacity="0.82"/>
<rect x="281.6" y="366.2" width="1.1" height="1.1" stroke="none" opacity="0.41"/>
<rect x="287.4" y="368.4" width="1.1" height="1.1" stroke="none" opacity="0.60"/>
<rect x="283.8" y="372.2" width="1.1" height="1.1" stroke="none" opacity="0.73"/>
<rect x="312.7" y="365.6" width="1.1" height="1.1" stroke="none" opacity="0.63"/>
<line x1="307.3" y1="368.1" x2="307.4" y2="368.8" opacity="0.71"/>
<rect x="308.4" y="368.6" width="1.1" height="1.1" stroke="none" opacity="0.35"/>
<rect x="332.9" y="368.8" width="1.1" height="1.1" stroke="none" opacity="0.50"/>
<line x1="333.5" y1="369.8" x2="334.9" y2="369.1" opacity="0.40"/>
<rect x="335.1" y="369.4" width="1.1" height="1.1" stroke="none" opacity="0.69"/>
<line x1="342.6" y1="366.1" x2="344.4" y2="365.9" opacity="0.37"/>
<rect x="362.9" y="369.1" width="1.1" height="1.1" stroke="none" opacity="0.56"/>
<line x1="363.9" y1="367.8" x2="363.4" y2="368.2" opacity="0.88"/>
<rect x="358.6" y="366.9" width="1.1" height="1.1" stroke="none" opacity="0.77"/>
<line x1="295.0" y1="376.4" x2="293.5" y2="376.5" opacity="0.70"/>
<line x1="299.7" y1="374.5" x2="298.4" y2="373.5" opacity="0.59"/>
<rect x="294.9" y="370.0" width="1.1" height="1.1" stroke="none" opacity="0.76"/>
<line x1="348.6" y1="375.2" x2="348.8" y2="375.9" opacity="0.37"/>
<rect x="348.8" y="372.9" width="1.1" height="1.1" stroke="none" opacity="0.47"/>
<rect x="350.2" y="370.7" width="1.1" height="1.1" stroke="none" opacity="0.76"/>
<line x1="287.6" y1="375.8" x2="287.8" y2="376.4" opacity="0.53"/>
<line x1="288.9" y1="379.6" x2="288.1" y2="378.8" opacity="0.38"/>
<rect x="296.4" y="377.8" width="1.1" height="1.1" stroke="none" opacity="0.65"/>
<rect x="288.4" y="379.4" width="1.1" height="1.1" stroke="none" opacity="0.72"/>
<rect x="308.3" y="377.0" width="1.1" height="1.1" stroke="none" opacity="0.38"/>
<rect x="311.5" y="380.0" width="1.1" height="1.1" stroke="none" opacity="0.82"/>
<rect x="305.5" y="374.0" width="1.1" height="1.1" stroke="none" opacity="0.65"/>
<line x1="322.0" y1="379.3" x2="321.4" y2="379.2" opacity="0.43"/>
<rect x="322.5" y="378.9" width="1.1" height="1.1" stroke="none" opacity="0.75"/>
<rect x="316.7" y="381.2" width="1.1" height="1.1" stroke="none" opacity="0.80"/>
<line x1="332.2" y1="374.9" x2="332.5" y2="374.8" opacity="0.74"/>
<rect x="333.4" y="376.2" width="1.1" height="1.1" stroke="none" opacity="0.83"/>
<line x1="336.9" y1="373.0" x2="338.2" y2="373.0" opacity="0.43"/>
<rect x="329.3" y="377.8" width="1.1" height="1.1" stroke="none" opacity="0.76"/>
<line x1="331.2" y1="377.8" x2="331.3" y2="376.9" opacity="0.76"/>
<line x1="297.4" y1="379.2" x2="299.2" y2="379.0" opacity="0.40"/>
<line x1="301.4" y1="380.5" x2="300.0" y2="379.4" opacity="0.85"/>
<rect x="301.8" y="378.7" width="1.1" height="1.1" stroke="none" opacity="0.81"/>
<rect x="297.6" y="383.1" width="1.1" height="1.1" stroke="none" opacity="0.53"/>
<rect x="302.3" y="380.8" width="1.1" height="1.1" stroke="none" opacity="0.65"/>
<line x1="308.0" y1="384.0" x2="307.3" y2="383.2" opacity="0.48"/>
<rect x="351.8" y="383.8" width="1.1" height="1.1" stroke="none" opacity="0.40"/>
<rect x="356.4" y="382.8" width="1.1" height="1.1" stroke="none" opacity="0.72"/>
<line x1="330.9" y1="387.9" x2="331.0" y2="387.4" opacity="0.90"/>
<line x1="332.9" y1="386.5" x2="331.3" y2="386.5" opacity="0.62"/>
<rect x="346.2" y="384.8" width="1.1" height="1.1" stroke="none" opacity="0.40"/>
<rect x="343.2" y="387.6" width="1.1" height="1.1" stroke="none" opacity="0.81"/>
<rect x="282.1" y="390.6" width="1.1" height="1.1" stroke="none" opacity="0.88"/>
<rect x="290.3" y="391.1" width="1.1" height="1.1" stroke="none" opacity="0.38"/>
<rect x="295.6" y="387.3" width="1.1" height="1.1" stroke="none" opacity="0.55"/>
<rect x="298.8" y="391.2" width="1.1" height="1.1" stroke="none" opacity="0.75"/>
<rect x="298.0" y="385.6" width="1.1" height="1.1" stroke="none" opacity="0.44"/>
<line x1="304.2" y1="389.9" x2="302.7" y2="390.1" opacity="0.40"/>
<rect x="315.7" y="391.0" width="1.1" height="1.1" stroke="none" opacity="0.75"/>
<line x1="321.0" y1="385.9" x2="322.3" y2="385.4" opacity="0.35"/>
<rect x="350.1" y="393.8" width="1.1" height="1.1" stroke="none" opacity="0.41"/>
<rect x="354.1" y="387.7" width="1.1" height="1.1" stroke="none" opacity="0.61"/>
<rect x="296.4" y="390.6" width="1.1" height="1.1" stroke="none" opacity="0.87"/>
<line x1="301.0" y1="396.5" x2="301.1" y2="395.9" opacity="0.85"/>
<line x1="296.9" y1="389.4" x2="297.7" y2="388.8" opacity="0.38"/>
<rect x="302.9" y="394.9" width="1.1" height="1.1" stroke="none" opacity="0.43"/>
<rect x="301.1" y="392.0" width="1.1" height="1.1" stroke="none" opacity="0.63"/>
<rect x="308.8" y="389.6" width="1.1" height="1.1" stroke="none" opacity="0.67"/>
<rect x="306.2" y="395.2" width="1.1" height="1.1" stroke="none" opacity="0.74"/>
<rect x="310.4" y="391.6" width="1.1" height="1.1" stroke="none" opacity="0.40"/>
<rect x="316.7" y="390.3" width="1.1" height="1.1" stroke="none" opacity="0.52"/>
<line x1="324.5" y1="388.8" x2="325.7" y2="387.6" opacity="0.52"/>
<rect x="326.3" y="388.5" width="1.1" height="1.1" stroke="none" opacity="0.63"/>
<line x1="326.4" y1="393.5" x2="327.1" y2="394.0" opacity="0.46"/>
<rect x="335.1" y="395.2" width="1.1" height="1.1" stroke="none" opacity="0.61"/>
<rect x="341.4" y="394.9" width="1.1" height="1.1" stroke="none" opacity="0.70"/>
<rect x="338.8" y="395.7" width="1.1" height="1.1" stroke="none" opacity="0.78"/>
<rect x="350.8" y="395.7" width="1.1" height="1.1" stroke="none" opacity="0.79"/>
<line x1="349.0" y1="395.0" x2="348.3" y2="393.9" opacity="0.49"/>
<rect x="346.3" y="397.3" width="1.1" height="1.1" stroke="none" opacity="0.72"/>
<rect x="345.6" y="396.1" width="1.1" height="1.1" stroke="none" opacity="0.87"/>
<rect x="322.6" y="399.0" width="1.1" height="1.1" stroke="none" opacity="0.87"/>
<line x1="322.7" y1="401.0" x2="321.6" y2="400.3" opacity="0.49"/>
<line x1="318.1" y1="396.6" x2="318.9" y2="397.1" opacity="0.62"/>
<line x1="317.5" y1="401.0" x2="319.3" y2="401.8" opacity="0.79"/>
<line x1="329.3" y1="398.6" x2="330.0" y2="399.6" opacity="0.72"/>
<line x1="324.6" y1="399.2" x2="326.4" y2="400.1" opacity="0.52"/>
<rect x="325.1" y="400.1" width="1.1" height="1.1" stroke="none" opacity="0.51"/>
<line x1="340.4" y1="398.6" x2="339.6" y2="397.6" opacity="0.81"/>
<line x1="340.9" y1="401.4" x2="342.2" y2="400.5" opacity="0.59"/>
<rect x="344.6" y="396.1" width="1.1" height="1.1" stroke="none" opacity="0.80"/>
<rect x="351.4" y="397.5" width="1.1" height="1.1" stroke="none" opacity="0.44"/>
<rect x="355.7" y="403.4" width="1.1" height="1.1" stroke="none" opacity="0.88"/>
<rect x="309.4" y="402.5" width="1.1" height="1.1" stroke="none" opacity="0.89"/>
<rect x="308.3" y="399.7" width="1.1" height="1.1" stroke="none" opacity="0.64"/>
<line x1="334.7" y1="400.9" x2="335.7" y2="401.3" opacity="0.66"/>
<line x1="342.7" y1="404.8" x2="341.2" y2="405.4" opacity="0.76"/>
<rect x="287.8" y="401.6" width="1.1" height="1.1" stroke="none" opacity="0.69"/>
<line x1="290.4" y1="403.9" x2="289.9" y2="403.9" opacity="0.71"/>
<line x1="312.4" y1="408.3" x2="310.5" y2="409.2" opacity="0.62"/>
<rect x="319.9" y="404.1" width="1.1" height="1.1" stroke="none" opacity="0.56"/>
<rect x="316.5" y="404.3" width="1.1" height="1.1" stroke="none" opacity="0.68"/>
<line x1="320.4" y1="407.0" x2="319.5" y2="406.2" opacity="0.35"/>
<rect x="323.3" y="412.7" width="1.1" height="1.1" stroke="none" opacity="0.45"/>
<line x1="327.5" y1="409.7" x2="325.6" y2="409.8" opacity="0.48"/>
<line x1="322.4" y1="405.4" x2="322.3" y2="406.5" opacity="0.87"/>
<rect x="332.8" y="405.9" width="1.1" height="1.1" stroke="none" opacity="0.44"/>
<rect x="334.0" y="410.0" width="1.1" height="1.1" stroke="none" opacity="0.54"/>
<rect x="345.0" y="404.7" width="1.1" height="1.1" stroke="none" opacity="0.52"/>
<line x1="343.8" y1="411.5" x2="344.9" y2="411.1" opacity="0.67"/>
<rect x="343.9" y="406.4" width="1.1" height="1.1" stroke="none" opacity="0.84"/>
<rect x="355.3" y="407.2" width="1.1" height="1.1" stroke="none" opacity="0.41"/>
<rect x="355.9" y="406.8" width="1.1" height="1.1" stroke="none" opacity="0.88"/>
<line x1="354.2" y1="411.0" x2="354.8" y2="411.6" opacity="0.60"/>
<line x1="284.3" y1="410.6" x2="285.7" y2="410.4" opacity="0.64"/>
<rect x="284.6" y="411.5" width="1.1" height="1.1" stroke="none" opacity="0.74"/>
<rect x="300.1" y="409.4" width="1.1" height="1.1" stroke="none" opacity="0.60"/>
<line x1="297.2" y1="414.0" x2="296.6" y2="415.1" opacity="0.52"/>
<line x1="309.5" y1="408.2" x2="310.8" y2="408.7" opacity="0.68"/>
<line x1="326.3" y1="413.0" x2="324.8" y2="412.8" opacity="0.75"/>
<rect x="332.4" y="417.9" width="1.1" height="1.1" stroke="none" opacity="0.81"/>
<line x1="341.3" y1="411.8" x2="341.4" y2="411.8" opacity="0.45"/>
<rect x="340.0" y="416.2" width="1.1" height="1.1" stroke="none" opacity="0.42"/>
<line x1="334.6" y1="412.3" x2="335.3" y2="412.5" opacity="0.63"/>
<line x1="350.1" y1="418.4" x2="351.5" y2="417.5" opacity="0.78"/>
<rect x="350.2" y="419.4" width="1.1" height="1.1" stroke="none" opacity="0.48"/>
<line x1="350.7" y1="412.9" x2="350.3" y2="412.4" opacity="0.88"/>
<rect x="301.3" y="420.9" width="1.1" height="1.1" stroke="none" opacity="0.69"/>
<rect x="295.6" y="420.1" width="1.1" height="1.1" stroke="none" opacity="0.80"/>
<line x1="296.9" y1="417.1" x2="298.8" y2="417.8" opacity="0.40"/>
<line x1="298.2" y1="420.9" x2="297.5" y2="419.7" opacity="0.39"/>
<line x1="305.1" y1="418.9" x2="305.4" y2="419.1" opacity="0.63"/>
<rect x="298.5" y="419.6" width="1.1" height="1.1" stroke="none" opacity="0.61"/>
<rect x="300.8" y="422.8" width="1.1" height="1.1" stroke="none" opacity="0.88"/>
<rect x="300.3" y="419.8" width="1.1" height="1.1" stroke="none" opacity="0.80"/>
<rect x="314.5" y="413.9" width="1.1" height="1.1" stroke="none" opacity="0.78"/>
<line x1="314.2" y1="417.1" x2="315.1" y2="417.3" opacity="0.38"/>
<rect x="313.3" y="417.8" width="1.1" height="1.1" stroke="none" opacity="0.67"/>
<line x1="292.2" y1="426.1" x2="290.5" y2="426.0" opacity="0.53"/>
<line x1="318.9" y1="425.7" x2="317.6" y2="425.9" opacity="0.83"/>
<rect x="316.0" y="419.2" width="1.1" height="1.1" stroke="none" opacity="0.77"/>
<line x1="319.9" y1="424.1" x2="321.0" y2="423.4" opacity="0.78"/>
<line x1="326.6" y1="424.6" x2="324.7" y2="425.2" opacity="0.51"/>
<rect x="325.3" y="418.0" width="1.1" height="1.1" stroke="none" opacity="0.54"/>
<rect x="287.8" y="427.1" width="1.1" height="1.1" stroke="none" opacity="0.50"/>
<rect x="282.8" y="427.2" width="1.1" height="1.1" stroke="none" opacity="0.90"/>
<line x1="281.7" y1="423.5" x2="282.9" y2="423.4" opacity="0.55"/>
<line x1="282.2" y1="423.0" x2="282.1" y2="424.1" opacity="0.43"/>
<rect x="299.0" y="424.3" width="1.1" height="1.1" stroke="none" opacity="0.80"/>
<rect x="292.8" y="425.0" width="1.1" height="1.1" stroke="none" opacity="0.63"/>
<rect x="301.9" y="431.2" width="1.1" height="1.1" stroke="none" opacity="0.46"/>
<line x1="303.3" y1="427.9" x2="302.0" y2="428.8" opacity="0.78"/>
<rect x="308.8" y="421.2" width="1.1" height="1.1" stroke="none" opacity="0.47"/>
<line x1="311.0" y1="421.2" x2="310.9" y2="420.1" opacity="0.81"/>
<rect x="315.6" y="425.4" width="1.1" height="1.1" stroke="none" opacity="0.39"/>
<line x1="330.0" y1="425.3" x2="328.1" y2="424.6" opacity="0.77"/>
<line x1="328.2" y1="428.6" x2="330.0" y2="428.5" opacity="0.40"/>
<line x1="330.1" y1="429.0" x2="331.2" y2="429.1" opacity="0.73"/>
<line x1="343.4" y1="425.9" x2="344.2" y2="425.2" opacity="0.57"/>
<rect x="348.7" y="427.6" width="1.1" height="1.1" stroke="none" opacity="0.61"/>
<rect x="351.1" y="426.9" width="1.1" height="1.1" stroke="none" opacity="0.38"/>
<line x1="351.8" y1="423.9" x2="353.1" y2="424.3" opacity="0.57"/>
<rect x="354.0" y="423.5" width="1.1" height="1.1" stroke="none" opacity="0.85"/>
<line x1="348.2" y1="425.3" x2="350.0" y2="426.0" opacity="0.57"/>
<rect x="348.6" y="426.0" width="1.1" height="1.1" stroke="none" opacity="0.67"/>
<line x1="348.6" y1="425.3" x2="349.6" y2="426.3" opacity="0.61"/>
<rect x="302.5" y="434.4" width="1.1" height="1.1" stroke="none" opacity="0.44"/>
<line x1="310.4" y1="436.7" x2="308.7" y2="435.5" opacity="0.56"/>
<rect x="323.5" y="430.9" width="1.1" height="1.1" stroke="none" opacity="0.69"/>
<rect x="323.3" y="427.5" width="1.1" height="1.1" stroke="none" opacity="0.38"/>
<line x1="318.7" y1="430.1" x2="316.8" y2="430.9" opacity="0.35"/>
<line x1="323.4" y1="430.6" x2="322.2" y2="430.4" opacity="0.42"/>
<line x1="323.7" y1="426.0" x2="322.1" y2="425.4" opacity="0.64"/>
<rect x="331.6" y="429.1" width="1.1" height="1.1" stroke="none" opacity="0.52"/>
<rect x="349.5" y="434.7" width="1.1" height="1.1" stroke="none" opacity="0.77"/>
<rect x="344.7" y="427.8" width="1.1" height="1.1" stroke="none" opacity="0.73"/>
<line x1="348.7" y1="430.5" x2="349.3" y2="431.5" opacity="0.57"/>
<rect x="288.6" y="432.2" width="1.1" height="1.1" stroke="none" opacity="0.36"/>
<line x1="288.4" y1="437.0" x2="289.6" y2="435.9" opacity="0.42"/>
<rect x="287.4" y="433.9" width="1.1" height="1.1" stroke="none" opacity="0.49"/>
<rect x="288.9" y="438.4" width="1.1" height="1.1" stroke="none" opacity="0.37"/>
<line x1="290.6" y1="439.4" x2="291.6" y2="440.3" opacity="0.71"/>
<rect x="295.5" y="437.6" width="1.1" height="1.1" stroke="none" opacity="0.50"/>
<rect x="327.2" y="432.7" width="1.1" height="1.1" stroke="none" opacity="0.65"/>
<rect x="329.7" y="430.0" width="1.1" height="1.1" stroke="none" opacity="0.77"/>
<rect x="325.5" y="430.6" width="1.1" height="1.1" stroke="none" opacity="0.44"/>
<rect x="330.1" y="435.4" width="1.1" height="1.1" stroke="none" opacity="0.39"/>
<line x1="330.4" y1="434.4" x2="329.4" y2="435.4" opacity="0.38"/>
<rect x="344.9" y="439.3" width="1.1" height="1.1" stroke="none" opacity="0.40"/>
<rect x="341.3" y="438.9" width="1.1" height="1.1" stroke="none" opacity="0.36"/>
<rect x="345.1" y="439.5" width="1.1" height="1.1" stroke="none" opacity="0.45"/>
<rect x="319.1" y="441.3" width="1.1" height="1.1" stroke="none" opacity="0.51"/>
<line x1="320.7" y1="441.4" x2="321.2" y2="441.7" opacity="0.40"/>
<rect x="323.5" y="439.6" width="1.1" height="1.1" stroke="none" opacity="0.43"/>
<line x1="318.2" y1="436.8" x2="318.4" y2="435.8" opacity="0.39"/>
<rect x="197.7" y="427.5" width="1.1" height="1.1" stroke="none" opacity="0.71"/>
<rect x="209.3" y="428.3" width="1.1" height="1.1" stroke="none" opacity="0.84"/>
<line x1="191.2" y1="435.8" x2="189.6" y2="436.9" opacity="0.59"/>
<line x1="190.6" y1="437.0" x2="189.5" y2="437.8" opacity="0.37"/>
<rect x="197.7" y="433.4" width="1.1" height="1.1" stroke="none" opacity="0.36"/>
<line x1="231.6" y1="431.1" x2="230.3" y2="430.2" opacity="0.67"/>
<rect x="292.5" y="418.5" width="1.1" height="1.1" stroke="none" opacity="0.49"/>
<line x1="283.2" y1="423.0" x2="281.7" y2="424.1" opacity="0.36"/>
<line x1="284.5" y1="428.3" x2="283.5" y2="428.0" opacity="0.43"/>
<line x1="285.9" y1="423.4" x2="285.0" y2="423.1" opacity="0.49"/>
<rect x="260.0" y="428.3" width="1.1" height="1.1" stroke="none" opacity="0.47"/>
<rect x="269.2" y="431.1" width="1.1" height="1.1" stroke="none" opacity="0.49"/>
<rect x="267.9" y="427.0" width="1.1" height="1.1" stroke="none" opacity="0.55"/>
<line x1="271.6" y1="432.4" x2="270.0" y2="431.5" opacity="0.60"/>
<rect x="272.0" y="432.9" width="1.1" height="1.1" stroke="none" opacity="0.48"/>
<rect x="268.8" y="432.0" width="1.1" height="1.1" stroke="none" opacity="0.55"/>
<line x1="280.2" y1="427.6" x2="280.4" y2="428.5" opacity="0.47"/>
<line x1="283.9" y1="433.9" x2="284.0" y2="433.2" opacity="0.41"/>
<rect x="300.8" y="425.7" width="1.1" height="1.1" stroke="none" opacity="0.41"/>
<rect x="300.4" y="430.8" width="1.1" height="1.1" stroke="none" opacity="0.78"/>
<line x1="283.9" y1="437.5" x2="282.2" y2="438.0" opacity="0.50"/>
<line x1="282.5" y1="438.8" x2="283.7" y2="439.7" opacity="0.63"/>
<line x1="284.0" y1="442.2" x2="285.1" y2="442.6" opacity="0.37"/>
<line x1="302.9" y1="436.0" x2="303.8" y2="436.8" opacity="0.79"/>
<rect x="300.3" y="442.0" width="1.1" height="1.1" stroke="none" opacity="0.45"/>
<line x1="289.1" y1="445.5" x2="288.3" y2="446.6" opacity="0.60"/>
<rect x="292.6" y="442.1" width="1.1" height="1.1" stroke="none" opacity="0.52"/>
<rect x="285.6" y="439.9" width="1.1" height="1.1" stroke="none" opacity="0.44"/>
<line x1="291.6" y1="446.5" x2="291.6" y2="447.7" opacity="0.63"/>
<rect x="295.1" y="444.4" width="1.1" height="1.1" stroke="none" opacity="0.81"/>
<line x1="298.5" y1="446.4" x2="297.8" y2="446.1" opacity="0.47"/>
<line x1="298.9" y1="451.4" x2="297.9" y2="452.2" opacity="0.66"/>
<rect x="296.6" y="452.2" width="1.1" height="1.1" stroke="none" opacity="0.68"/>
<rect x="313.9" y="440.8" width="1.1" height="1.1" stroke="none" opacity="0.48"/>
<rect x="316.1" y="440.9" width="1.1" height="1.1" stroke="none" opacity="0.43"/>
<rect x="312.7" y="446.8" width="1.1" height="1.1" stroke="none" opacity="0.38"/>
<rect x="318.7" y="440.3" width="1.1" height="1.1" stroke="none" opacity="0.78"/>
<line x1="323.1" y1="435.5" x2="325.0" y2="436.0" opacity="0.43"/>
<rect x="317.3" y="448.5" width="1.1" height="1.1" stroke="none" opacity="0.41"/>
<rect x="322.3" y="447.2" width="1.1" height="1.1" stroke="none" opacity="0.45"/>
<line x1="322.4" y1="444.2" x2="323.2" y2="444.4" opacity="0.52"/>
<line x1="307.0" y1="455.8" x2="308.6" y2="456.9" opacity="0.67"/>
<rect x="306.5" y="451.1" width="1.1" height="1.1" stroke="none" opacity="0.84"/>
<rect x="306.4" y="456.0" width="1.1" height="1.1" stroke="none" opacity="0.49"/>
<line x1="339.6" y1="447.1" x2="337.8" y2="447.5" opacity="0.80"/>
<rect x="332.9" y="447.6" width="1.1" height="1.1" stroke="none" opacity="0.86"/>
<rect x="336.8" y="458.5" width="1.1" height="1.1" stroke="none" opacity="0.71"/>
<rect x="339.3" y="459.1" width="1.1" height="1.1" stroke="none" opacity="0.48"/>
<line x1="327.4" y1="432.9" x2="326.9" y2="433.4" opacity="0.42"/>
<line x1="325.9" y1="433.7" x2="326.5" y2="434.6" opacity="0.55"/>
<rect x="331.0" y="427.8" width="1.1" height="1.1" stroke="none" opacity="0.57"/>
<rect x="349.9" y="425.3" width="1.1" height="1.1" stroke="none" opacity="0.53"/>
</g>
<g font-size="6.6" text-anchor="middle">
<text x="152.7" y="268.8" fill="#1e1e1e">1</text>
<text x="158.4" y="272.0" fill="#1e1e1e">2</text>
<text x="164.4" y="269.4" fill="#1e1e1e">1</text>
<text x="162.8" y="276.4" fill="#1e1e1e">1</text>
<text x="166.4" y="287.8" fill="#1e1e1e">1</text>
<text x="185.4" y="278.3" fill="#1e1e1e">?</text>
<text x="184.4" y="284.0" fill="#1e1e1e">&lt;</text>
<text x="247.0" y="269.0" fill="#1e1e1e">z</text>
<text x="165.4" y="294.7" fill="#1e1e1e">11</text>
<text x="172.3" y="291.6" fill="#1e1e1e">1</text>
<text x="184.6" y="291.6" fill="#1e1e1e">1</text>
<text x="190.7" y="290.9" fill="#1e1e1e">1</text>
<text x="200.2" y="291.8" fill="#1e1e1e">1</text>
<text x="204.6" y="297.3" fill="#1e1e1e">1</text>
<text x="171.7" y="303.0" fill="#1e1e1e">1</text>
<text x="175.5" y="302.6" fill="#8c8c8c">1</text>
<text x="180.6" y="302.0" fill="#1e1e1e">1</text>
<text x="185.6" y="301.7" fill="#8c8c8c">1</text>
<text x="199.8" y="301.1" fill="#1e1e1e">1</text>
<text x="205.3" y="304.9" fill="#1e1e1e">1</text>
<text x="219.6" y="301.7" fill="#1e1e1e">1</text>
<text x="150.8" y="299.2" fill="#1e1e1e">33</text>
<text x="151.2" y="310.6" fill="#1e1e1e">32</text>
<text x="149.6" y="318.4" fill="#1e1e1e">21</text>
<text x="159.7" y="318.2" fill="#1e1e1e">6</text>
<text x="169.8" y="315.9" fill="#1e1e1e">12</text>
<text x="177.4" y="312.4" fill="#1e1e1e">1</text>
<text x="183.7" y="312.8" fill="#1e1e1e">6</text>
<text x="188.8" y="309.9" fill="#1e1e1e">1</text>
<text x="194.2" y="308.0" fill="#1e1e1e">1</text>
<text x="211.3" y="308.7" fill="#1e1e1e">1</text>
<text x="217.3" y="312.4" fill="#1e1e1e">11</text>
<text x="224.0" y="310.6" fill="#1e1e1e">1</text>
<text x="200.2" y="315.6" fill="#1e1e1e">1</text>
<text x="210.7" y="316.9" fill="#1e1e1e">2</text>
<text x="149.6" y="327.0" fill="#1e1e1e">114</text>
<text x="159.7" y="326.4" fill="#1e1e1e">3</text>
<text x="165.8" y="328.9" fill="#1e1e1e">3</text>
<text x="169.4" y="325.8" fill="#1e1e1e">1</text>
<text x="179.3" y="325.8" fill="#1e1e1e">21</text>
<text x="173.6" y="331.4" fill="#1e1e1e">2</text>
<text x="182.8" y="334.6" fill="#1e1e1e">2.1</text>
<text x="185.6" y="322.2" fill="#1e1e1e">1</text>
<text x="190.7" y="324.4" fill="#8c8c8c">1</text>
<text x="200.8" y="325.8" fill="#8c8c8c">4</text>
<text x="205.3" y="325.8" fill="#1e1e1e">1</text>
<text x="212.8" y="325.1" fill="#1e1e1e">23</text>
<text x="221.7" y="323.9" fill="#1e1e1e">4</text>
<text x="195.8" y="330.2" fill="#1e1e1e">1</text>
<text x="201.5" y="334.0" fill="#1e1e1e">1</text>
<text x="216.0" y="332.7" fill="#1e1e1e">1.2</text>
<text x="228.7" y="327.7" fill="#1e1e1e">6</text>
<text x="229.3" y="335.9" fill="#1e1e1e">3</text>
<text x="233.7" y="330.8" fill="#1e1e1e">1</text>
<text x="235.0" y="320.7" fill="#1e1e1e">11</text>
<text x="245.5" y="315.0" fill="#1e1e1e">1</text>
<text x="253.4" y="313.7" fill="#1e1e1e">3</text>
<text x="242.0" y="326.4" fill="#8c8c8c">1</text>
<text x="245.8" y="322.6" fill="#8c8c8c">3</text>
<text x="241.0" y="334.6" fill="#1e1e1e">1</text>
<text x="237.5" y="341.6" fill="#1e1e1e">11</text>
<text x="242.6" y="342.4" fill="#1e1e1e">1</text>
<text x="252.0" y="340.9" fill="#1e1e1e">1</text>
<text x="341.4" y="302.6" fill="#1e1e1e">16</text>
<text x="330.4" y="308.9" fill="#1e1e1e">2</text>
<text x="335.8" y="307.7" fill="#1e1e1e">1</text>
<text x="322.8" y="311.4" fill="#1e1e1e">11</text>
<text x="253.8" y="314.0" fill="#1e1e1e">2</text>
<text x="259.0" y="311.9" fill="#1e1e1e">1</text>
<text x="262.7" y="314.6" fill="#1e1e1e">2</text>
<text x="336.3" y="317.1" fill="#1e1e1e">2</text>
<text x="328.5" y="318.4" fill="#8c8c8c">3</text>
<text x="253.2" y="321.6" fill="#8c8c8c">3</text>
<text x="258.2" y="321.6" fill="#1e1e1e">1</text>
<text x="263.3" y="322.8" fill="#8c8c8c">3</text>
<text x="268.7" y="325.4" fill="#1e1e1e">1</text>
<text x="272.8" y="322.8" fill="#1e1e1e">3</text>
<text x="277.2" y="321.3" fill="#1e1e1e">1</text>
<text x="281.6" y="321.3" fill="#1e1e1e">1</text>
<text x="288.0" y="323.4" fill="#8c8c8c">2(</text>
<text x="294.3" y="324.1" fill="#1e1e1e">1</text>
<text x="298.4" y="320.9" fill="#1e1e1e">1</text>
<text x="325.3" y="322.2" fill="#1e1e1e">1</text>
<text x="333.5" y="321.6" fill="#8c8c8c">3</text>
<text x="339.2" y="326.0" fill="#1e1e1e">1</text>
<text x="280.6" y="330.4" fill="#1e1e1e">3</text>
<text x="274.7" y="331.7" fill="#1e1e1e">1</text>
<text x="298.4" y="330.4" fill="#1e1e1e">1</text>
<text x="293.7" y="334.2" fill="#8c8c8c">1</text>
<text x="329.5" y="332.4" fill="#1e1e1e">2</text>
<text x="335.8" y="330.4" fill="#1e1e1e">3</text>
<text x="344.3" y="331.7" fill="#8c8c8c">1</text>
<text x="285.4" y="335.5" fill="#1e1e1e">4</text>
<text x="259.0" y="332.4" fill="#8c8c8c">3</text>
<text x="264.0" y="333.9" fill="#8c8c8c">4</text>
<text x="268.5" y="334.9" fill="#8c8c8c">8</text>
<text x="251.9" y="341.2" fill="#1e1e1e">1</text>
<text x="258.2" y="342.4" fill="#1e1e1e">1</text>
<text x="265.2" y="343.1" fill="#1e1e1e">1</text>
<text x="288.6" y="339.9" fill="#1e1e1e">1</text>
<text x="339.2" y="334.9" fill="#1e1e1e">1</text>
<text x="335.8" y="341.8" fill="#1e1e1e">1</text>
<text x="253.8" y="349.4" fill="#1e1e1e">4</text>
<text x="271.5" y="349.4" fill="#1e1e1e">P</text>
<text x="283.5" y="346.3" fill="#1e1e1e">5</text>
<text x="288.6" y="348.2" fill="#1e1e1e">1</text>
<text x="308.0" y="345.0" fill="#1e1e1e">2</text>
<text x="320.9" y="348.8" fill="#1e1e1e">3</text>
<text x="346.8" y="346.6" fill="#1e1e1e">4</text>
<text x="260.4" y="352.6" fill="#1e1e1e">1</text>
<text x="266.2" y="353.2" fill="#1e1e1e">7</text>
<text x="275.3" y="352.6" fill="#8c8c8c">3</text>
<text x="295.0" y="353.2" fill="#1e1e1e">(1</text>
<text x="351.9" y="354.4" fill="#1e1e1e">70</text>
<text x="272.2" y="357.7" fill="#1e1e1e">2</text>
<text x="280.4" y="355.8" fill="#1e1e1e">3</text>
<text x="335.8" y="357.7" fill="#1e1e1e">1</text>
<text x="345.6" y="360.2" fill="#1e1e1e">1</text>
<text x="250.6" y="364.6" fill="#1e1e1e">1</text>
<text x="257.6" y="365.9" fill="#1e1e1e">2</text>
<text x="265.8" y="362.1" fill="#1e1e1e">2</text>
<text x="272.8" y="366.5" fill="#1e1e1e">1</text>
<text x="288.6" y="363.4" fill="#1e1e1e">1</text>
<text x="305.7" y="362.7" fill="#8c8c8c">7</text>
<text x="360.1" y="364.6" fill="#1e1e1e">1</text>
<text x="354.4" y="367.8" fill="#1e1e1e">b</text>
<text x="284.8" y="369.7" fill="#1e1e1e">2</text>
<text x="290.5" y="370.9" fill="#1e1e1e">2</text>
<text x="294.3" y="366.5" fill="#1e1e1e">1</text>
<text x="310.5" y="370.3" fill="#1e1e1e">1</text>
<text x="314.8" y="368.4" fill="#1e1e1e">5</text>
<text x="335.8" y="369.0" fill="#1e1e1e">1</text>
<text x="340.5" y="369.0" fill="#8c8c8c">1</text>
<text x="279.7" y="374.1" fill="#1e1e1e">1</text>
<text x="295.6" y="374.7" fill="#1e1e1e">1</text>
<text x="301.3" y="374.7" fill="#1e1e1e">1</text>
<text x="360.1" y="372.8" fill="#1e1e1e">1</text>
<text x="233.8" y="341.8" fill="#1e1e1e">1</text>
<text x="237.6" y="342.4" fill="#8c8c8c">1</text>
<text x="242.0" y="342.4" fill="#1e1e1e">1</text>
<text x="251.5" y="341.2" fill="#1e1e1e">1</text>
<text x="258.5" y="342.2" fill="#1e1e1e">1</text>
<text x="265.4" y="343.1" fill="#1e1e1e">1</text>
<text x="224.3" y="351.4" fill="#1e1e1e">1</text>
<text x="243.3" y="350.1" fill="#1e1e1e">1</text>
<text x="251.5" y="349.8" fill="#1e1e1e">14</text>
<text x="223.7" y="362.1" fill="#1e1e1e">.1</text>
<text x="266.0" y="360.8" fill="#1e1e1e">2</text>
<text x="246.5" y="370.9" fill="#1e1e1e">3</text>
<text x="264.2" y="370.6" fill="#8c8c8c">1</text>
<text x="268.0" y="370.6" fill="#1e1e1e">1</text>
<text x="290.1" y="370.9" fill="#1e1e1e">2</text>
<text x="280.0" y="374.1" fill="#1e1e1e">1</text>
<text x="247.1" y="379.8" fill="#1e1e1e">4</text>
<text x="252.8" y="381.1" fill="#8c8c8c">2</text>
<text x="256.0" y="378.5" fill="#1e1e1e">1</text>
<text x="261.0" y="379.8" fill="#1e1e1e">2</text>
<text x="271.8" y="379.8" fill="#1e1e1e">2</text>
<text x="275.6" y="381.7" fill="#1e1e1e">1</text>
<text x="279.4" y="381.7" fill="#1e1e1e">1</text>
<text x="284.4" y="381.1" fill="#1e1e1e">1</text>
<text x="292.0" y="382.4" fill="#1e1e1e">1</text>
<text x="238.2" y="385.2" fill="#1e1e1e">1</text>
<text x="251.5" y="389.3" fill="#8c8c8c">1</text>
<text x="263.0" y="388.7" fill="#1e1e1e">3</text>
<text x="266.7" y="389.9" fill="#1e1e1e">1</text>
<text x="271.1" y="390.6" fill="#1e1e1e">1</text>
<text x="276.8" y="390.6" fill="#8c8c8c">2</text>
<text x="280.6" y="391.2" fill="#8c8c8c">6</text>
<text x="286.3" y="391.2" fill="#1e1e1e">1</text>
<text x="293.3" y="390.6" fill="#1e1e1e">12</text>
<text x="220.5" y="395.0" fill="#1e1e1e">2</text>
<text x="224.3" y="396.3" fill="#1e1e1e">3</text>
<text x="216.7" y="399.4" fill="#1e1e1e">2</text>
<text x="231.3" y="395.6" fill="#1e1e1e">2</text>
<text x="238.2" y="395.0" fill="#1e1e1e">1</text>
<text x="242.7" y="394.6" fill="#1e1e1e">4</text>
<text x="246.5" y="395.0" fill="#1e1e1e">(</text>
<text x="272.4" y="398.8" fill="#1e1e1e">1</text>
<text x="207.8" y="400.7" fill="#1e1e1e">1</text>
<text x="250.3" y="400.1" fill="#1e1e1e">1</text>
<text x="253.4" y="402.0" fill="#1e1e1e">1</text>
<text x="238.2" y="403.2" fill="#1e1e1e">1</text>
<text x="243.0" y="403.9" fill="#1e1e1e">5</text>
<text x="224.0" y="405.8" fill="#1e1e1e">1</text>
<text x="219.9" y="407.0" fill="#8c8c8c">2</text>
<text x="280.6" y="403.2" fill="#1e1e1e">1</text>
<text x="286.3" y="407.0" fill="#1e1e1e">1</text>
<text x="232.5" y="408.3" fill="#1e1e1e">1</text>
<text x="280.6" y="409.6" fill="#1e1e1e">7</text>
<text x="205.3" y="410.8" fill="#1e1e1e">1</text>
<text x="210.4" y="413.4" fill="#1e1e1e">2</text>
<text x="238.2" y="412.7" fill="#1e1e1e">2</text>
<text x="243.0" y="413.1" fill="#1e1e1e">0</text>
<text x="267.3" y="412.1" fill="#1e1e1e">2</text>
<text x="273.7" y="413.4" fill="#1e1e1e">2</text>
<text x="288.2" y="414.6" fill="#1e1e1e">1</text>
<text x="199.0" y="415.2" fill="#1e1e1e">5</text>
<text x="248.4" y="416.5" fill="#1e1e1e">1</text>
<text x="191.4" y="419.7" fill="#8c8c8c">1</text>
<text x="195.2" y="419.0" fill="#8c8c8c">1</text>
<text x="204.7" y="422.8" fill="#1e1e1e">4</text>
<text x="269.2" y="420.9" fill="#1e1e1e">1</text>
<text x="261.6" y="423.4" fill="#1e1e1e">&gt;</text>
<text x="280.0" y="426.0" fill="#1e1e1e">8</text>
<text x="289.5" y="424.7" fill="#1e1e1e">2</text>
<text x="284.7" y="370.6" fill="#8c8c8c">2</text>
<text x="310.6" y="370.6" fill="#1e1e1e">1</text>
<text x="335.8" y="369.5" fill="#8c8c8c">1</text>
<text x="340.6" y="369.5" fill="#8c8c8c">1</text>
<text x="360.1" y="372.7" fill="#1e1e1e">1</text>
<text x="295.8" y="375.3" fill="#1e1e1e">1</text>
<text x="346.4" y="378.4" fill="#1e1e1e">1</text>
<text x="353.8" y="376.4" fill="#1e1e1e">21</text>
<text x="284.7" y="380.6" fill="#1e1e1e">1</text>
<text x="292.1" y="382.7" fill="#1e1e1e">1</text>
<text x="308.2" y="380.0" fill="#1e1e1e">1</text>
<text x="320.6" y="380.0" fill="#1e1e1e">2</text>
<text x="329.5" y="379.0" fill="#8c8c8c">1</text>
<text x="333.7" y="378.4" fill="#1e1e1e">1</text>
<text x="300.0" y="384.8" fill="#8c8c8c">2</text>
<text x="304.0" y="385.1" fill="#1e1e1e">2</text>
<text x="354.3" y="385.8" fill="#1e1e1e">3</text>
<text x="334.3" y="386.9" fill="#8c8c8c">1</text>
<text x="345.3" y="386.9" fill="#8c8c8c">1</text>
<text x="286.3" y="392.2" fill="#1e1e1e">1</text>
<text x="295.8" y="391.1" fill="#1e1e1e">2</text>
<text x="308.4" y="392.2" fill="#8c8c8c">1</text>
<text x="319.5" y="391.6" fill="#1e1e1e">1</text>
<text x="353.8" y="393.2" fill="#1e1e1e">2</text>
<text x="300.5" y="395.0" fill="#8c8c8c">1</text>
<text x="305.3" y="395.3" fill="#8c8c8c">2</text>
<text x="314.2" y="395.3" fill="#8c8c8c">7</text>
<text x="323.7" y="393.7" fill="#1e1e1e">3</text>
<text x="330.6" y="395.3" fill="#8c8c8c">2</text>
<text x="337.7" y="395.3" fill="#8c8c8c">11</text>
<text x="346.6" y="397.4" fill="#1e1e1e">4</text>
<text x="318.5" y="401.1" fill="#8c8c8c">8</text>
<text x="325.3" y="403.2" fill="#1e1e1e">1</text>
<text x="343.0" y="402.2" fill="#1e1e1e">1</text>
<text x="352.9" y="402.7" fill="#1e1e1e">1</text>
<text x="305.3" y="404.8" fill="#8c8c8c">4</text>
<text x="338.3" y="405.3" fill="#1e1e1e">4</text>
<text x="286.3" y="407.4" fill="#1e1e1e">1</text>
<text x="316.4" y="409.5" fill="#1e1e1e">3</text>
<text x="323.2" y="411.1" fill="#1e1e1e">1</text>
<text x="331.1" y="410.1" fill="#8c8c8c">7</text>
<text x="342.2" y="410.6" fill="#1e1e1e">1</text>
<text x="356.9" y="410.1" fill="#1e1e1e">4</text>
<text x="288.4" y="414.8" fill="#1e1e1e">1</text>
<text x="296.9" y="414.8" fill="#8c8c8c">3</text>
<text x="306.1" y="413.8" fill="#1e1e1e">1</text>
<text x="329.3" y="418.0" fill="#1e1e1e">2</text>
<text x="338.5" y="415.4" fill="#8c8c8c">3</text>
<text x="352.7" y="419.0" fill="#8c8c8c">1</text>
<text x="299.5" y="421.7" fill="#1e1e1e">1</text>
<text x="302.7" y="421.7" fill="#8c8c8c">1</text>
<text x="314.2" y="420.1" fill="#8c8c8c">1</text>
<text x="289.5" y="424.8" fill="#8c8c8c">7</text>
<text x="319.5" y="424.3" fill="#1e1e1e">1</text>
<text x="324.3" y="424.3" fill="#1e1e1e">2</text>
<text x="285.8" y="428.5" fill="#8c8c8c">3</text>
<text x="296.3" y="426.9" fill="#8c8c8c">C</text>
<text x="300.5" y="430.1" fill="#8c8c8c">1</text>
<text x="312.1" y="427.5" fill="#8c8c8c">1</text>
<text x="329.5" y="428.0" fill="#1e1e1e">3</text>
<text x="347.4" y="428.5" fill="#8c8c8c">4</text>
<text x="352.7" y="428.0" fill="#1e1e1e">1</text>
<text x="305.3" y="434.3" fill="#1e1e1e">1</text>
<text x="310.3" y="435.4" fill="#1e1e1e">1</text>
<text x="320.6" y="433.3" fill="#8c8c8c">1</text>
<text x="322.7" y="431.7" fill="#1e1e1e">1</text>
<text x="335.3" y="433.3" fill="#1e1e1e">1</text>
<text x="348.5" y="433.3" fill="#1e1e1e">1</text>
<text x="286.3" y="438.0" fill="#1e1e1e">4</text>
<text x="291.1" y="438.0" fill="#1e1e1e">2</text>
<text x="326.9" y="436.4" fill="#1e1e1e">1</text>
<text x="330.8" y="439.1" fill="#1e1e1e">3</text>
<text x="343.2" y="438.0" fill="#1e1e1e">1</text>
<text x="322.1" y="440.1" fill="#1e1e1e">4</text>
<text x="192.0" y="428.9" fill="#1e1e1e">3</text>
<text x="197.2" y="428.1" fill="#1e1e1e">2</text>
<text x="205.5" y="431.1" fill="#1e1e1e">1</text>
<text x="192.0" y="436.7" fill="#1e1e1e">2</text>
<text x="196.2" y="437.6" fill="#1e1e1e">1</text>
<text x="234.7" y="432.2" fill="#1e1e1e">2</text>
<text x="289.5" y="424.4" fill="#1e1e1e">7</text>
<text x="285.7" y="428.9" fill="#1e1e1e">3</text>
<text x="262.5" y="433.1" fill="#1e1e1e">2</text>
<text x="271.5" y="430.4" fill="#1e1e1e">1</text>
<text x="272.2" y="437.9" fill="#1e1e1e">1</text>
<text x="279.7" y="433.4" fill="#1e1e1e">1</text>
<text x="300.7" y="429.6" fill="#1e1e1e">1</text>
<text x="282.7" y="443.1" fill="#1e1e1e">2</text>
<text x="301.5" y="441.2" fill="#1e1e1e">3</text>
<text x="289.5" y="446.1" fill="#8c8c8c">P</text>
<text x="294.0" y="449.1" fill="#8c8c8c">5</text>
<text x="299.7" y="452.1" fill="#1e1e1e">1</text>
<text x="312.0" y="446.1" fill="#1e1e1e">3/7</text>
<text x="322.5" y="440.1" fill="#1e1e1e">4</text>
<text x="321.3" y="447.6" fill="#1e1e1e">1</text>
<text x="326.2" y="447.6" fill="#1e1e1e">1</text>
<text x="309.3" y="456.9" fill="#1e1e1e">^</text>
<text x="335.5" y="451.4" fill="#1e1e1e">1</text>
<text x="335.2" y="459.2" fill="#1e1e1e">1</text>
<text x="327.0" y="436.1" fill="#1e1e1e">L</text>
<text x="335.2" y="433.1" fill="#1e1e1e">1</text>
<text x="350.2" y="428.1" fill="#1e1e1e">41</text>
<text x="314.7" y="378.7" fill="#8c8c8c">4</text>
<text x="245.5" y="356.5" fill="#1e1e1e">2</text>
<text x="346.6" y="368.5" fill="#1e1e1e">4</text>
<text x="267.5" y="399.5" fill="#1e1e1e">1</text>
<text x="339.2" y="376.8" fill="#1e1e1e">4</text>
<text x="306.0" y="372.7" fill="#1e1e1e">1</text>
<text x="298.3" y="406.1" fill="#8c8c8c">2</text>
<text x="351.4" y="410.2" fill="#8c8c8c">4</text>
<text x="258.7" y="360.1" fill="#1e1e1e">3</text>
<text x="266.9" y="379.4" fill="#1e1e1e">1</text>
<text x="340.8" y="360.8" fill="#8c8c8c">2</text>
<text x="330.3" y="372.4" fill="#8c8c8c">1</text>
<text x="295.2" y="339.7" fill="#8c8c8c">4</text>
<text x="358.8" y="388.3" fill="#8c8c8c">4</text>
<text x="270.2" y="384.8" fill="#1e1e1e">1</text>
<text x="293.0" y="403.8" fill="#8c8c8c">2</text>
<text x="261.7" y="400.3" fill="#1e1e1e">1</text>
<text x="344.4" y="417.3" fill="#1e1e1e">2</text>
<text x="283.2" y="398.1" fill="#8c8c8c">1</text>
<text x="307.2" y="441.8" fill="#8c8c8c">1</text>
<text x="318.7" y="414.9" fill="#1e1e1e">1</text>
<text x="359.5" y="381.4" fill="#8c8c8c">3</text>
<text x="295.9" y="436.1" fill="#8c8c8c">2</text>
<text x="275.2" y="423.8" fill="#1e1e1e">1</text>
<text x="294.9" y="398.2" fill="#1e1e1e">2</text>
<text x="316.7" y="446.9" fill="#1e1e1e">1</text>
<text x="324.8" y="419.3" fill="#1e1e1e">1</text>
<text x="279.3" y="415.0" fill="#8c8c8c">1</text>
<text x="342.4" y="340.8" fill="#8c8c8c">1</text>
<text x="350.3" y="359.5" fill="#8c8c8c">1</text>
<text x="256.2" y="389.0" fill="#1e1e1e">1</text>
<text x="284.2" y="360.9" fill="#8c8c8c">2</text>
<text x="295.4" y="347.4" fill="#8c8c8c">1</text>
<text x="341.8" y="348.1" fill="#8c8c8c">1</text>
<text x="340.8" y="387.3" fill="#1e1e1e">1</text>
<text x="274.9" y="373.1" fill="#8c8c8c">1</text>
<text x="252.1" y="372.4" fill="#8c8c8c">1</text>
<text x="316.2" y="437.0" fill="#1e1e1e">2</text>
<text x="289.5" y="356.2" fill="#8c8c8c">1</text>
<text x="315.1" y="385.7" fill="#8c8c8c">3</text>
<text x="333.8" y="419.6" fill="#8c8c8c">1</text>
<text x="290.3" y="431.8" fill="#1e1e1e">1</text>
<text x="275.3" y="407.0" fill="#1e1e1e">1</text>
<text x="337.1" y="443.1" fill="#1e1e1e">1</text>
<text x="357.5" y="402.0" fill="#1e1e1e">2</text>
<text x="278.5" y="366.0" fill="#1e1e1e">4</text>
<text x="334.6" y="425.6" fill="#8c8c8c">2</text>
<text x="307.1" y="420.8" fill="#8c8c8c">2</text>
<text x="292.7" y="409.0" fill="#8c8c8c">4</text>
<text x="245.3" y="364.5" fill="#8c8c8c">3</text>
<text x="277.6" y="341.8" fill="#1e1e1e">1</text>
<text x="340.7" y="427.3" fill="#8c8c8c">2</text>
<text x="271.8" y="342.4" fill="#1e1e1e">4</text>
<text x="266.6" y="406.7" fill="#1e1e1e">4</text>
<text x="357.4" y="356.3" fill="#8c8c8c">2</text>
<text x="245.3" y="386.3" fill="#8c8c8c">1</text>
<text x="351.5" y="348.5" fill="#8c8c8c">2</text>
<text x="341.0" y="354.8" fill="#1e1e1e">1</text>
<text x="334.9" y="347.5" fill="#8c8c8c">3</text>
<text x="346.9" y="422.9" fill="#1e1e1e">1</text>
<text x="294.8" y="358.9" fill="#1e1e1e">2</text>
<text x="334.2" y="336.3" fill="#1e1e1e">2</text>
<text x="258.7" y="373.2" fill="#1e1e1e">1</text>
<text x="303.8" y="446.9" fill="#1e1e1e">1</text>
<text x="332.7" y="401.7" fill="#8c8c8c">1</text>
<text x="310.4" y="406.8" fill="#1e1e1e">2</text>
<text x="322.9" y="386.2" fill="#8c8c8c">1</text>
<text x="346.3" y="351.9" fill="#1e1e1e">1</text>
<text x="310.6" y="401.3" fill="#1e1e1e">2</text>
<text x="289.8" y="398.6" fill="#8c8c8c">1</text>
<text x="359.6" y="394.6" fill="#8c8c8c">1</text>
<text x="256.3" y="396.9" fill="#8c8c8c">1</text>
<text x="328.0" y="388.1" fill="#8c8c8c">3</text>
<text x="289.3" y="377.1" fill="#1e1e1e">1</text>
<text x="347.5" y="341.2" fill="#8c8c8c">1</text>
<text x="321.3" y="374.3" fill="#8c8c8c">4</text>
<text x="301.5" y="414.6" fill="#1e1e1e">2</text>
<text x="252.6" y="357.1" fill="#8c8c8c">4</text>
<text x="339.2" y="381.9" fill="#8c8c8c">1</text>
<text x="334.4" y="352.7" fill="#1e1e1e">2</text>
<text x="277.9" y="440.2" fill="#1e1e1e">1</text>
<text x="343.3" y="392.3" fill="#8c8c8c">1</text>
<text x="285.1" y="422.0" fill="#8c8c8c">1</text>
<text x="266.7" y="426.2" fill="#8c8c8c">1</text>
<text x="296.3" y="442.3" fill="#1e1e1e">1</text>
<text x="283.7" y="340.9" fill="#8c8c8c">1</text>
<text x="305.8" y="428.8" fill="#8c8c8c">1</text>
<text x="300.4" y="436.0" fill="#1e1e1e">1</text>
<text x="298.8" y="365.9" fill="#1e1e1e">1</text>
<text x="278.7" y="397.7" fill="#8c8c8c">2</text>
<text x="308.8" y="385.9" fill="#1e1e1e">2</text>
<text x="264.4" y="417.2" fill="#8c8c8c">2</text>
<text x="262.0" y="394.8" fill="#1e1e1e">4</text>
<text x="357.7" y="417.6" fill="#8c8c8c">1</text>
<text x="341.3" y="432.6" fill="#1e1e1e">2</text>
<text x="346.9" y="410.7" fill="#8c8c8c">1</text>
<text x="349.8" y="385.1" fill="#8c8c8c">1</text>
<text x="300.1" y="400.5" fill="#1e1e1e">1</text>
<text x="285.0" y="355.5" fill="#1e1e1e">1</text>
<text x="311.3" y="414.1" fill="#8c8c8c">1</text>
<text x="335.5" y="363.8" fill="#1e1e1e">1</text>
<text x="277.5" y="346.8" fill="#1e1e1e">2</text>
<text x="287.5" y="386.1" fill="#1e1e1e">4</text>
<text x="295.0" y="421.3" fill="#1e1e1e">2</text>
<text x="247.0" y="340.6" fill="#8c8c8c">4</text>
<text x="278.0" y="360.9" fill="#8c8c8c">1</text>
<text x="339.8" y="421.2" fill="#1e1e1e">1</text>
<text x="325.9" y="373.8" fill="#8c8c8c">1</text>
<text x="259.2" y="347.6" fill="#8c8c8c">1</text>
<text x="348.0" y="404.8" fill="#1e1e1e">1</text>
<text x="195.1" y="337.0" fill="#8c8c8c">4</text>
<text x="211.1" y="296.2" fill="#8c8c8c">1</text>
<text x="156.7" y="304.0" fill="#1e1e1e">2</text>
<text x="166.2" y="307.3" fill="#1e1e1e">1</text>
<text x="221.5" y="336.9" fill="#1e1e1e">1</text>
<text x="194.1" y="300.4" fill="#1e1e1e">1</text>
<text x="226.9" y="316.4" fill="#8c8c8c">1</text>
<text x="235.6" y="307.8" fill="#1e1e1e">1</text>
<text x="228.5" y="300.0" fill="#1e1e1e">3</text>
<text x="247.8" y="334.3" fill="#8c8c8c">2</text>
<text x="160.3" y="309.7" fill="#8c8c8c">2</text>
<text x="223.2" y="331.0" fill="#1e1e1e">1</text>
<text x="210.2" y="338.4" fill="#8c8c8c">3</text>
<text x="156.2" y="295.5" fill="#8c8c8c">1</text>
<text x="192.7" y="318.6" fill="#1e1e1e">2</text>
<text x="165.7" y="301.2" fill="#8c8c8c">1</text>
<text x="150.1" y="291.6" fill="#1e1e1e">2</text>
<text x="205.6" y="290.3" fill="#8c8c8c">2</text>
<text x="287.5" y="329.8" fill="#1e1e1e">1</text>
<text x="213.6" y="303.1" fill="#8c8c8c">3</text>
<text x="178.2" y="290.4" fill="#8c8c8c">4</text>
<text x="241.5" y="307.6" fill="#8c8c8c">1</text>
<text x="257.7" y="415.5" fill="#1e1e1e">3</text>
<text x="261.3" y="409.5" fill="#8c8c8c">1</text>
<text x="254.9" y="408.1" fill="#8c8c8c">1</text>
<text x="231.6" y="414.1" fill="#1e1e1e">1</text>
<text x="232.3" y="401.7" fill="#1e1e1e">1</text>
<text x="248.7" y="409.2" fill="#8c8c8c">1</text>
</g>
<text x="381.5" y="306.69" font-size="3.3" textLength="15.5" lengthAdjust="spacingAndGlyphs" fill="#6e6e6e">24.10.2021</text>
<text x="382" y="313.22" font-size="2.55" textLength="66.0" lengthAdjust="spacingAndGlyphs" fill="#a4a4a4">- lorem ipsum dolor sit amet consectetur adipiscing</text>
<text x="382" y="316.22" font-size="2.55" textLength="76.0" lengthAdjust="spacingAndGlyphs" fill="#a4a4a4">- elit sed do eiusmod tempor incididunt ut labore et dolore</text>
<text x="382" y="322.74" font-size="2.9" textLength="73.0" lengthAdjust="spacingAndGlyphs" fill="#6e6e6e">1. magna aliqua ut enim ad minim veniam quis nostr</text>
<text x="382" y="326.22" font-size="2.55" textLength="188.0" lengthAdjust="spacingAndGlyphs" fill="#a4a4a4">- exercitation ullamco laboris nisi ut aliquip ex ea commodo consequat duis aute irure lorem ipsum dolor sit amet consectetur adipiscing elit sed d</text>
<text x="382" y="329.74" font-size="2.9" textLength="96.0" lengthAdjust="spacingAndGlyphs" fill="#6e6e6e">3. eiusmod tempor incididunt ut labore et dolore magna aliqua ut e</text>
<text x="382" y="332.74" font-size="2.9" textLength="80.0" lengthAdjust="spacingAndGlyphs" fill="#6e6e6e">4. ad minim veniam quis nostrud exercitation ullamco la</text>
<text x="381.5" y="339.89" font-size="3.3" textLength="15.5" lengthAdjust="spacingAndGlyphs" fill="#6e6e6e">25.10.2021</text>
<text x="382" y="345.84" font-size="2.9" textLength="167.0" lengthAdjust="spacingAndGlyphs" fill="#6e6e6e">6. nisi ut aliquip ex ea commodo consequat duis aute irure lorem ipsum dolor sit amet consectetur adipiscing elit s</text>
<text x="382" y="349.22" font-size="2.55" textLength="166.0" lengthAdjust="spacingAndGlyphs" fill="#a4a4a4">- do eiusmod tempor incididunt ut labore et dolore magna aliqua ut enim ad minim veniam quis nostrud exercitation ullamco laboris</text>
</g>
<g fill="#1420d8">
<rect x="300.6" y="410.4" width="1.6" height="4.5"/>
<rect x="330.3" y="399.5" width="2" height="2"/>
<rect x="316.0" y="409.8" width="3" height="2"/>
<rect x="321.0" y="412.5" width="2" height="2"/>
<rect x="305.6" y="426.2" width="2.5" height="2.5"/>
<rect x="289.0" y="439.0" width="2" height="1.2"/>
</g>
<g transform="translate(552.5,399.5)" fill="#000" stroke="none"><rect x="-5" y="-0.8" width="10" height="1.6"/><rect x="-0.8" y="-5" width="1.6" height="10"/><path d="M-7 0L-4 -2.6V2.6Z M7 0L4 -2.6V2.6Z M0 -7L-2.6 -4H2.6Z M0 7L-2.6 4H2.6Z"/></g>
</svg>
<div id="edgeL" class="abs"></div><div id="edgeR" class="abs"></div>
</body></html>
